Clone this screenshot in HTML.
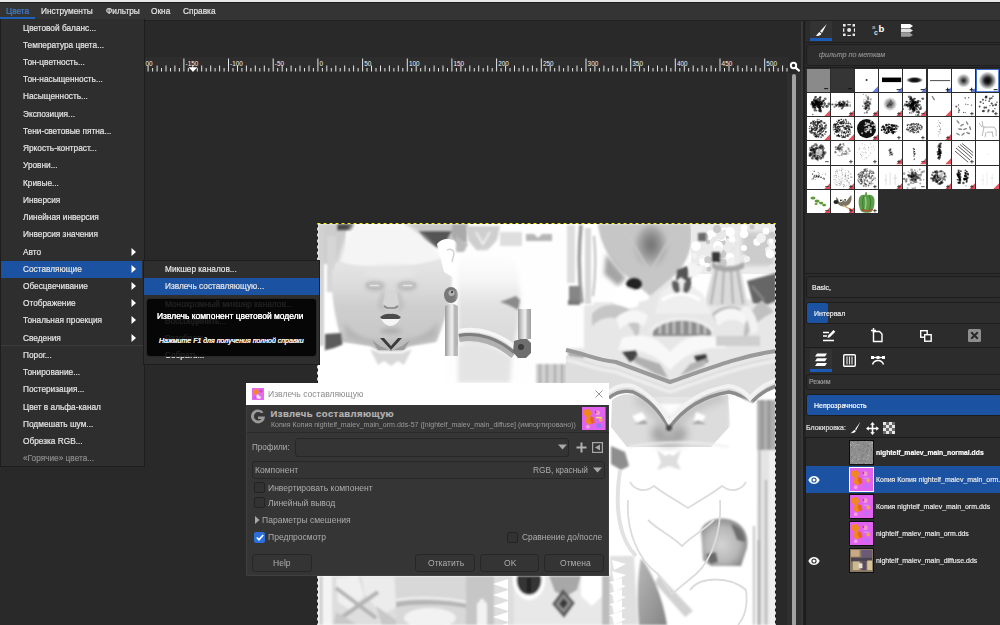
<!DOCTYPE html><html lang="ru"><head><meta charset="utf-8"><title>GIMP</title><style>
*{margin:0;padding:0;box-sizing:border-box}
html,body{width:1000px;height:625px;overflow:hidden;background:#292929}
body{position:relative;font-family:"Liberation Sans",sans-serif;font-size:9px;color:#e4e4e4}
.a{position:absolute}
.t{position:absolute;white-space:nowrap;transform-origin:0 50%;transform:scaleX(.92);line-height:12px;-webkit-text-stroke:.2px currentColor}
</style></head><body>
<div class="a" style="left:0px;top:0px;width:1000px;height:2px;background:#e9e9e9;"></div>
<div class="a" style="left:0px;top:2px;width:1000px;height:18px;background:#343434;"></div>
<div class="a" style="left:0px;top:2px;width:1000px;height:1px;background:#1c1c1c;"></div>
<div class="a" style="left:145px;top:19.5px;width:855px;height:1px;background:#212121;"></div>
<div class="t" style="left:6px;top:4.5px;color:#3f7fd6">Цвета</div>
<div class="a" style="left:0px;top:17px;width:35px;height:2px;background:#2160b8;"></div>
<div class="t" style="left:41px;top:4.5px;">Инструменты</div>
<div class="t" style="left:106px;top:4.5px;">Фильтры</div>
<div class="t" style="left:151px;top:4.5px;">Окна</div>
<div class="t" style="left:183px;top:4.5px;">Справка</div>
<div class="a" style="left:0px;top:20.5px;width:802px;height:605px;background:#292929;"></div>
<div class="a" style="left:145px;top:56.8px;width:643.5px;height:15.7px;background:#2d2d2d;"></div>
<svg class="a" style="left:0;top:55px" width="802" height="20" viewBox="0 55 802 20"><path d="M148.1 65.5V71.5M152.6 68V71.5M157.1 65.5V71.5M161.5 68V71.5M166.0 65.5V71.5M170.5 68V71.5M174.9 65.5V71.5M179.4 68V71.5M183.9 58.5V71.5M188.3 68V71.5M192.8 65.5V71.5M197.3 68V71.5M201.7 65.5V71.5M206.2 68V71.5M210.7 65.5V71.5M215.1 68V71.5M219.6 65.5V71.5M224.1 68V71.5M228.5 58.5V71.5M233.0 68V71.5M237.5 65.5V71.5M241.9 68V71.5M246.4 65.5V71.5M250.9 68V71.5M255.3 65.5V71.5M259.8 68V71.5M264.3 65.5V71.5M268.8 68V71.5M273.2 58.5V71.5M277.7 68V71.5M282.2 65.5V71.5M286.6 68V71.5M291.1 65.5V71.5M295.6 68V71.5M300.0 65.5V71.5M304.5 68V71.5M309.0 65.5V71.5M313.4 68V71.5M317.9 58.5V71.5M322.4 68V71.5M326.8 65.5V71.5M331.3 68V71.5M335.8 65.5V71.5M340.2 68V71.5M344.7 65.5V71.5M349.2 68V71.5M353.6 65.5V71.5M358.1 68V71.5M362.6 58.5V71.5M367.0 68V71.5M371.5 65.5V71.5M376.0 68V71.5M380.5 65.5V71.5M384.9 68V71.5M389.4 65.5V71.5M393.9 68V71.5M398.3 65.5V71.5M402.8 68V71.5M407.3 58.5V71.5M411.7 68V71.5M416.2 65.5V71.5M420.7 68V71.5M425.1 65.5V71.5M429.6 68V71.5M434.1 65.5V71.5M438.5 68V71.5M443.0 65.5V71.5M447.5 68V71.5M451.9 58.5V71.5M456.4 68V71.5M460.9 65.5V71.5M465.3 68V71.5M469.8 65.5V71.5M474.3 68V71.5M478.7 65.5V71.5M483.2 68V71.5M487.7 65.5V71.5M492.2 68V71.5M496.6 58.5V71.5M501.1 68V71.5M505.6 65.5V71.5M510.0 68V71.5M514.5 65.5V71.5M519.0 68V71.5M523.4 65.5V71.5M527.9 68V71.5M532.4 65.5V71.5M536.8 68V71.5M541.3 58.5V71.5M545.8 68V71.5M550.2 65.5V71.5M554.7 68V71.5M559.2 65.5V71.5M563.6 68V71.5M568.1 65.5V71.5M572.6 68V71.5M577.0 65.5V71.5M581.5 68V71.5M586.0 58.5V71.5M590.4 68V71.5M594.9 65.5V71.5M599.4 68V71.5M603.9 65.5V71.5M608.3 68V71.5M612.8 65.5V71.5M617.3 68V71.5M621.7 65.5V71.5M626.2 68V71.5M630.7 58.5V71.5M635.1 68V71.5M639.6 65.5V71.5M644.1 68V71.5M648.5 65.5V71.5M653.0 68V71.5M657.5 65.5V71.5M661.9 68V71.5M666.4 65.5V71.5M670.9 68V71.5M675.3 58.5V71.5M679.8 68V71.5M684.3 65.5V71.5M688.7 68V71.5M693.2 65.5V71.5M697.7 68V71.5M702.1 65.5V71.5M706.6 68V71.5M711.1 65.5V71.5M715.6 68V71.5M720.0 58.5V71.5M724.5 68V71.5M729.0 65.5V71.5M733.4 68V71.5M737.9 65.5V71.5M742.4 68V71.5M746.8 65.5V71.5M751.3 68V71.5M755.8 65.5V71.5M760.2 68V71.5M764.7 58.5V71.5M769.2 68V71.5M773.6 65.5V71.5M778.1 68V71.5M782.6 65.5V71.5M787.0 68V71.5" stroke="#e6e6e6" stroke-width="1" fill="none"/><text transform="translate(145.5 66.3) scale(.8 1)" font-size="8" fill="#f2f2f2" font-family="Liberation Sans, sans-serif">00</text><text transform="translate(185.5 66.3) scale(.8 1)" font-size="8" fill="#f2f2f2" font-family="Liberation Sans, sans-serif">-150</text><text transform="translate(230.1 66.3) scale(.8 1)" font-size="8" fill="#f2f2f2" font-family="Liberation Sans, sans-serif">-100</text><text transform="translate(274.8 66.3) scale(.8 1)" font-size="8" fill="#f2f2f2" font-family="Liberation Sans, sans-serif">-50</text><text transform="translate(319.5 66.3) scale(.8 1)" font-size="8" fill="#f2f2f2" font-family="Liberation Sans, sans-serif">0</text><text transform="translate(364.2 66.3) scale(.8 1)" font-size="8" fill="#f2f2f2" font-family="Liberation Sans, sans-serif">50</text><text transform="translate(408.9 66.3) scale(.8 1)" font-size="8" fill="#f2f2f2" font-family="Liberation Sans, sans-serif">100</text><text transform="translate(453.5 66.3) scale(.8 1)" font-size="8" fill="#f2f2f2" font-family="Liberation Sans, sans-serif">150</text><text transform="translate(498.2 66.3) scale(.8 1)" font-size="8" fill="#f2f2f2" font-family="Liberation Sans, sans-serif">200</text><text transform="translate(542.9 66.3) scale(.8 1)" font-size="8" fill="#f2f2f2" font-family="Liberation Sans, sans-serif">250</text><text transform="translate(587.6 66.3) scale(.8 1)" font-size="8" fill="#f2f2f2" font-family="Liberation Sans, sans-serif">300</text><text transform="translate(632.3 66.3) scale(.8 1)" font-size="8" fill="#f2f2f2" font-family="Liberation Sans, sans-serif">350</text><text transform="translate(676.9 66.3) scale(.8 1)" font-size="8" fill="#f2f2f2" font-family="Liberation Sans, sans-serif">400</text><text transform="translate(721.6 66.3) scale(.8 1)" font-size="8" fill="#f2f2f2" font-family="Liberation Sans, sans-serif">450</text><text transform="translate(766.3 66.3) scale(.8 1)" font-size="8" fill="#f2f2f2" font-family="Liberation Sans, sans-serif">500</text><path d="M188.5 67.3h9l-4.500 4.500z" fill="#fff"/></svg>
<svg class="a" style="left:788px;top:59.500px" width="14" height="14" viewBox="0 0 14 14"><circle cx="5.5" cy="5.5" r="2.700" fill="none" stroke="#fff" stroke-width="1.900"/><path d="M7.800 7.800l3.200 2.800" stroke="#fff" stroke-width="2.200" stroke-linecap="round"/></svg>
<div class="a" style="left:787px;top:73px;width:5px;height:552px;background:#2f2f2f;"></div>
<div class="a" style="left:791.8px;top:73.5px;width:4.2px;height:552px;background:#a2a2a2;border-radius:2px"></div>
<svg class="a" style="left:0;top:0" width="1000" height="625" viewBox="0 0 1000 625">
<defs><filter id="f05" x="-10%" y="-10%" width="120%" height="120%"><feGaussianBlur stdDeviation=".5"/></filter><filter id="f1" x="-10%" y="-10%" width="120%" height="120%"><feGaussianBlur stdDeviation="1"/></filter><filter id="f2" x="-20%" y="-20%" width="140%" height="140%"><feGaussianBlur stdDeviation="2"/></filter><filter id="f4" x="-30%" y="-30%" width="160%" height="160%"><feGaussianBlur stdDeviation="4"/></filter><filter id="f7" x="-40%" y="-40%" width="180%" height="180%"><feGaussianBlur stdDeviation="7"/></filter><clipPath id="cv"><rect x="317.5" y="223.5" width="458.0" height="401.5"/></clipPath><linearGradient id="bar" x1="0" x2="1" y1="0" y2="0"><stop offset="0" stop-color="#9a9a9a"/><stop offset=".35" stop-color="#d8d8d8"/><stop offset=".55" stop-color="#f0f0f0"/><stop offset=".75" stop-color="#b4b4b4"/><stop offset="1" stop-color="#a0a0a0"/></linearGradient><linearGradient id="face" x1="0" x2="0" y1="0" y2="1"><stop offset="0" stop-color="#e6e6e6"/><stop offset=".3" stop-color="#dcdcdc"/><stop offset=".5" stop-color="#cfcfcf"/><stop offset=".85" stop-color="#c8c8c8"/><stop offset="1" stop-color="#b4b4b4"/></linearGradient><radialGradient id="hd" cx=".5" cy=".45" r=".6"><stop offset="0" stop-color="#6e6e6e"/><stop offset=".5" stop-color="#9a9a9a"/><stop offset="1" stop-color="#b8b8b8" stop-opacity="0"/></radialGradient><linearGradient id="bh" x1="0" x2="0" y1="0" y2="1"><stop offset="0" stop-color="#ffffff"/><stop offset=".3" stop-color="#f6f6f6"/><stop offset=".55" stop-color="#e2e2e2"/><stop offset="1" stop-color="#d8d8d8"/></linearGradient><radialGradient id="gb" cx=".45" cy=".55" r=".65"><stop offset="0" stop-color="#d4d4d4"/><stop offset=".55" stop-color="#b8b8b8"/><stop offset="1" stop-color="#7a7a7a"/></radialGradient><linearGradient id="wedge" x1="0" x2="1" y1="0" y2="1"><stop offset="0" stop-color="#b8b8b8"/><stop offset="1" stop-color="#858585"/></linearGradient></defs>
<g clip-path="url(#cv)">
<rect x="317.5" y="223.5" width="458.0" height="401.5" fill="#fefefe"/>
<g filter="url(#f1)">
<rect x="318" y="224" width="28" height="40" fill="#cdcdcd"/>
<rect x="319" y="224" width="5" height="122" fill="#d2d2d2"/>
<rect x="327" y="236" width="9" height="56" fill="#d6d6d6"/>
<rect x="325" y="296" width="8" height="40" fill="#ffffff"/>
<rect x="337" y="224" width="17" height="6.500" fill="#484848"/>
<path d="M404 224h64v10l-14 4-8 10h-10l-14-10-12-8z" fill="#c8c8c8"/>
<path d="M418 231h34l-5 9-10 8-13-8z" fill="#555"/>
<path d="M452 224h15v18l-8 4-7-8z" fill="#aaaaaa"/>
</g>
<path d="M353 224h53c14 8 26 20 32 28l4 10c-30 10-80 10-104 2c4-14 8-28 15-40z" fill="#f5f5f5" filter="url(#f2)"/>
<path d="M338 261c24 8 74 8 104-3l10 12c1 20-4 40-11 60l-5 12-26 4-8 5h-24l-8-5-28-4c-6-20-12-50-10-70z" fill="url(#face)" filter="url(#f1)"/>
<g filter="url(#f2)"><ellipse cx="375" cy="286" rx="10" ry="4.500" fill="#b4b4b4"/><ellipse cx="407" cy="286" rx="10" ry="4.500" fill="#b4b4b4"/><path d="M384 292l-4 14 4 4M398 292l4 14-4 4" stroke="#b8b8b8" stroke-width="3" fill="none"/><ellipse cx="391" cy="331" rx="11" ry="3" fill="#adadad"/><path d="M344 322c10 14 26 20 46 20s36-6 48-20l-2 16-26 6h-40l-24-6z" fill="#b6b6b6"/><ellipse cx="391" cy="272" rx="26" ry="7" fill="#e4e4e4"/></g>
<g filter="url(#f05)">
<path d="M366 283q8-3 16 0l1 4q-9 2-17 0zM400 283q8-3 16 0v4q-9 2-17 0z" fill="#c2c2c2"/>
<path d="M370 285.500h9M403 285.500h9" stroke="#e4e4e4" stroke-width="1.300"/>
<path d="M386 290l-3 14 8 4 8-4-3-14" fill="#d6d6d6"/><path d="M384 306l3 2h8l3-2" stroke="#858585" stroke-width="1.600" fill="none"/>
<path d="M380 317q5-4 10.500-3q5.500-1 10.500 3l-2 2h-17z" fill="#4c4c4c"/><path d="M381 319h19q-4 7-9.500 7t-9.500-7z" fill="#f6f6f6"/>
<path d="M380 338l11 12 11-12-4 0-7 8-7-8z" fill="#3a3a3a"/><path d="M372 340l8 6 11 5 11-5 8-6-6 10h-26z" fill="#9a9a9a"/>
</g>
<path d="M325 334l16-1 2 14-10 4-8 2z" fill="#5c5c5c" filter="url(#f1)"/>
<path d="M318 352l16-4 10-4 28 4 8 5h22l8-5 26-3 8-3 0 40h-126z" fill="#ffffff" filter="url(#f1)"/>
<path d="M370 349l10 4h22l10-4-8 16-6-4-7 5-7-5-6 4z" fill="#d9d9d9" filter="url(#f1)"/>
<g filter="url(#f05)"><path d="M437 244c6-8 18-6 22 2l3 22-8 10-10-6z" fill="#ffffff"/><path d="M447 250c4-2 7 0 7 4l-2 8" stroke="#d4d4d4" stroke-width="1.500" fill="none"/><ellipse cx="451" cy="295" rx="7" ry="8" fill="#787878"/><circle cx="451.500" cy="293" r="3" fill="#b4b4b4"/><circle cx="452" cy="292" r="1.200" fill="#444"/><path d="M445 306l6.500-3 6.500 3v50h-13z" fill="url(#bar)"/></g>
<g filter="url(#f1)">
<path d="M466 226h34l-3 14-10 11h-10l-9-11z" fill="#cfcfcf"/><path d="M476 232l7 12 7-12" stroke="#efefef" stroke-width="2" fill="none"/>
<path d="M456 236l12 8-4 8h-8z" fill="#bbb"/>
<rect x="500" y="232" width="22" height="14" fill="#dedede"/>
<path d="M526 234h8l4 4 4-4h10v7h-26z" fill="#b6b6b6"/>
</g>
<path d="M458 262c10-14 44-16 56 0c8 14 8 50 2 76l-4 10-54-6z" fill="url(#bh)" filter="url(#f2)"/>
<path d="M500 302l16-6 4 4-2 10c-6-4-12-6-18-8z" fill="#8a8a8a" filter="url(#f1)"/>
<path d="M458 345c18-6 38 0 54 12l-2 26h-52z" fill="#e4e4e4" filter="url(#f2)"/>
<g filter="url(#f05)"><path d="M459 331c20-4 40 3 56 16" stroke="#f6f6f6" stroke-width="4" fill="none"/><path d="M459 338c20-4 40 4 55 17" stroke="#b0b0b0" stroke-width="8" fill="none"/><path d="M459 335.500c20-4 40 4 55 17" stroke="#7e7e7e" stroke-width="3" fill="none"/>
<rect x="518" y="309" width="13" height="30" fill="url(#bar)"/><path d="M514 341l6-2h7l4 4v10l-5 5h-8l-5-6z" fill="#6e6e6e"/><circle cx="521" cy="347" r="3" fill="#3c3c3c"/></g>
<g filter="url(#f1)">
<rect x="567" y="225" width="8" height="58" fill="#dedede"/><path d="M581 225q-4 40 1 78" stroke="#9a9a9a" stroke-width="3.500" fill="none"/><rect x="585" y="228" width="6" height="76" fill="#d8d8d8"/><path d="M594 236q3 30-1 60" stroke="#bdbdbd" stroke-width="2" fill="none"/>
<path d="M569 286h11v18l-11-2z" fill="#868686"/>
<path d="M568 348h48v36h-48z" fill="#e6e6e6"/><path d="M568 352l48 6v4l-48-6z" fill="#aaa"/>
<path d="M594 302h24v46h-24z" fill="#ebebeb"/>
<path d="M536 364h32v20h-32z" fill="#d0d0d0"/><path d="M540 364v20M547 364v20M555 364v20M562 364v20" stroke="#a8a8a8" stroke-width="2"/>
<path d="M568 300h12v5h-12z" fill="#7a7a7a"/>
</g>
<path d="M584 306l14-2 20 2 30-6 4-10 18-14 20 14 6 12 30 4 20-6 30-6v110h-192z" fill="#e7e7e7" filter="url(#f1)"/>
<path d="M598 224h93c3 20-3 38-15 50l-26 22-28-24c-12-12-22-28-24-48z" fill="#c6c6c6" filter="url(#f1)"/>
<ellipse cx="651" cy="247" rx="17" ry="22" fill="url(#hd)" filter="url(#f2)"/>
<path d="M650 228v20" stroke="#666" stroke-width="3" filter="url(#f2)"/>
<path d="M606 254l20 24-8 8-14-12z" fill="#a4a4a4" filter="url(#f2)"/>
<path d="M626 232l24 40 24-40" stroke="#c8c8c8" stroke-width="2" fill="none" filter="url(#f1)"/>
<g filter="url(#f1)"><ellipse cx="634" cy="284" rx="8" ry="6" fill="#242424"/><path d="M677 270l10-4 5 8-3 14-8 2-5-10z" fill="#555"/><path d="M614 290c8-6 20-2 26 4l-2 12c-8 4-18 2-24-2z" fill="#ffffff"/></g>
<rect x="691" y="224" width="86" height="50" fill="#ebebeb"/><rect x="742" y="232" width="32" height="34" fill="#cccccc" filter="url(#f2)"/>
<g filter="url(#f05)"><circle cx="744" cy="259" r="4.4" fill="#e8e8e8"/><circle cx="696" cy="246" r="4.8" fill="#ffffff"/><circle cx="766" cy="231" r="3.4" fill="#ffffff"/><circle cx="724" cy="230" r="2.7" fill="#ffffff"/><circle cx="727" cy="234" r="4.6" fill="#c8c8c8"/><circle cx="707" cy="261" r="2.4" fill="#e8e8e8"/><circle cx="730" cy="232" r="4.9" fill="#ffffff"/><circle cx="711" cy="235" r="4.9" fill="#ffffff"/><circle cx="717" cy="268" r="3.6" fill="#ffffff"/><circle cx="709" cy="269" r="2.6" fill="#c8c8c8"/><circle cx="718" cy="242" r="2.5" fill="#ffffff"/><circle cx="715" cy="241" r="4.5" fill="#e8e8e8"/><circle cx="694" cy="256" r="3.0" fill="#f2f2f2"/><circle cx="722" cy="239" r="4.1" fill="#ffffff"/><circle cx="732" cy="257" r="2.2" fill="#ffffff"/><circle cx="770" cy="242" r="3.2" fill="#e8e8e8"/><circle cx="757" cy="242" r="3.7" fill="#ffffff"/><circle cx="730" cy="257" r="3.9" fill="#ffffff"/><circle cx="704" cy="237" r="4.5" fill="#c8c8c8"/><circle cx="722" cy="242" r="3.6" fill="#c8c8c8"/><circle cx="703" cy="259" r="4.4" fill="#f2f2f2"/><circle cx="697" cy="268" r="2.3" fill="#f2f2f2"/><circle cx="735" cy="242" r="2.4" fill="#f2f2f2"/><circle cx="768" cy="250" r="2.9" fill="#f2f2f2"/><circle cx="718" cy="261" r="3.9" fill="#f2f2f2"/><circle cx="774" cy="233" r="2.1" fill="#e8e8e8"/><circle cx="737" cy="244" r="2.7" fill="#e8e8e8"/><circle cx="722" cy="237" r="4.0" fill="#ffffff"/><circle cx="698" cy="266" r="2.1" fill="#c8c8c8"/><circle cx="721" cy="235" r="4.9" fill="#e8e8e8"/><circle cx="770" cy="254" r="4.4" fill="#ffffff"/><circle cx="708" cy="242" r="2.2" fill="#c8c8c8"/><circle cx="718" cy="246" r="5.0" fill="#ffffff"/><circle cx="772" cy="246" r="3.5" fill="#f2f2f2"/><circle cx="732" cy="239" r="3.2" fill="#ffffff"/><circle cx="703" cy="262" r="3.6" fill="#ffffff"/><circle cx="744" cy="248" r="3.0" fill="#ffffff"/><circle cx="733" cy="249" r="3.6" fill="#e8e8e8"/><circle cx="723" cy="261" r="4.3" fill="#e8e8e8"/><circle cx="747" cy="259" r="3.1" fill="#f2f2f2"/><circle cx="761" cy="238" r="4.9" fill="#f2f2f2"/><circle cx="771" cy="241" r="2.5" fill="#ffffff"/><circle cx="732" cy="260" r="3.0" fill="#f2f2f2"/><circle cx="731" cy="262" r="3.9" fill="#f2f2f2"/><circle cx="722" cy="254" r="4.2" fill="#c8c8c8"/><circle cx="722" cy="263" r="4.6" fill="#c8c8c8"/><circle cx="772" cy="268" r="3.6" fill="#e8e8e8"/><circle cx="772" cy="235" r="3.1" fill="#c8c8c8"/><circle cx="717" cy="229" r="4.0" fill="#c8c8c8"/><circle cx="708" cy="260" r="3.7" fill="#c8c8c8"/><circle cx="718" cy="250" r="4.6" fill="#f2f2f2"/><circle cx="752" cy="227" r="2.5" fill="#c8c8c8"/><circle cx="744" cy="234" r="4.3" fill="#ffffff"/><circle cx="744" cy="228" r="3.4" fill="#ffffff"/><circle cx="707" cy="265" r="2.3" fill="#ffffff"/></g>
<g filter="url(#f1)"><rect x="712" y="252" width="8" height="10" fill="#383838"/><rect x="698" y="233" width="8" height="8" fill="#6a6a6a"/>
<path d="M714 266h26l8 40h-44z" fill="#dadada"/><path d="M717 268l-6 36M724 268l-2 36M731 268l2 36M737 268l6 36" stroke="#acacac" stroke-width="2"/>
<path d="M712 262c10 6 22 6 32 0v6c-10 5-22 5-32 0z" fill="#a6a6a6"/>
<path d="M747 281l29-8v28l-10 4-13-2z" fill="#666666"/><path d="M752 286l12 14" stroke="#888" stroke-width="2"/>
<path d="M688 262l16 4-6 10-10 2z" fill="#f4f4f4"/>
</g>
<g filter="url(#f1)">
<path d="M660 294l21-17 22 17 8 20h-56z" fill="#efefef"/><path d="M672 282q4-3 7 1l1 8-3 3q-6-4-5-12zM691 282q-4-3-7 1l-1 8 3 3q6-4 5-12z" fill="#5e5e5e"/><path d="M662 300q19-12 38 0" stroke="#ffffff" stroke-width="3" fill="none"/>
<path d="M592 314c10-12 28-12 40-2c8 8 10 18 4 28c-2-12-10-20-20-22c-10-2-18 2-24 8z" fill="#c6c6c6"/><path d="M762 300c-12 10-20 24-18 42c6-14 16-24 30-30z" fill="#c0c0c0"/><path d="M712 314c12-12 32-10 40 6c-10-8-24-8-36 2z" fill="#b8b8b8"/><path d="M616 318c10-10 24-10 32-2l-4 10c-8-6-18-4-24 4z" fill="#f6f6f6"/><path d="M714 316c10-10 24-10 34 0l-4 8c-8-6-18-6-26 2z" fill="#f6f6f6"/>
<path d="M653 330c10-14 48-14 58 0l0 6h-58z" fill="#8c8c8c"/><path d="M660 322v12M667 320v14M674 319v15M682 319v15M690 320v14M698 321v13M705 324v10" stroke="#c4c4c4" stroke-width="2.500"/>
<path d="M651 331c12-16 50-16 62 0" stroke="#f0f0f0" stroke-width="3" fill="none"/>
<path d="M622 338c30-8 40 6 48 14c8-8 20-22 50-14l6 10c-20-2-40 4-56 22c-14-16-30-22-52-20z" fill="#f8f8f8"/>
<path d="M622 352l14-2 2 8-8 4z" fill="#444"/><path d="M694 356l12-2 2 8-10 3z" fill="#3a3a3a"/>
<path d="M636 356l24 8 8 14-12-4-22-12z" fill="#b0b0b0"/><path d="M680 376l10-12 18-6-4 8z" fill="#b4b4b4"/>
<path d="M716 336h44v10h-44z" fill="#cfcfcf"/><path d="M746 306c8 4 12 14 12 26l-8 2c0-10-4-18-10-24z" fill="#f2f2f2"/>
</g>
<path d="M566 350c20 4 30 10 50 12l54 20c40-14 70-26 106-31" stroke="#9a9a9a" stroke-width="4" fill="none" filter="url(#f05)"/>
<path d="M566 356c20 4 30 10 50 12l54 20c40-14 70-26 106-31v40h-210z" fill="#dedede" filter="url(#f05)"/>
<path d="M566 360c20 4 30 10 50 12l54 20c40-14 70-26 106-31" stroke="#f0f0f0" stroke-width="3" fill="none" filter="url(#f1)"/>
<g filter="url(#f05)">
<path d="M609 399q11-9 24-6q22 10 36 36q22-30 60-36q13 2 21 12q10-12 26-18v240h-167z" fill="#ffffff"/>
<path d="M612 400q10-8 22-5q22 10 35 35q22-29 59-35l3 30-20 22h-84l-16-20z" fill="#dcdcdc"/>
</g>
<ellipse cx="669" cy="434" rx="18" ry="11" fill="#a0a0a0" filter="url(#f4)"/><path d="M636 398q20 10 33 34q20-28 56-36" stroke="#c0c0c0" stroke-width="9" fill="none" filter="url(#f4)"/>
<path d="M609 398q11-9 24-6q22 10 36 36q22-30 60-36q13 2 21 12q10-12 26-18" stroke="#8c8c8c" stroke-width="3.500" fill="none" filter="url(#f05)"/>
<path d="M609 392q11-9 24-6q22 10 36 36q22-30 60-36q13 2 21 12q10-12 26-18" stroke="#f2f2f2" stroke-width="4" fill="none" filter="url(#f05)"/>
<g filter="url(#f1)">
<circle cx="669" cy="428" r="3" fill="#4a4a4a"/>
<path d="M632 416l10-4 4 6-8 6z" fill="#ffffff"/><path d="M696 412l10 4-6 8-6-4z" fill="#ffffff"/><path d="M634 424l10-4 4 4z" fill="#a0a0a0"/><path d="M692 424l6-4 8 4z" fill="#a0a0a0"/>
<path d="M729 400c10-4 22 0 28 6v90h-26z" fill="#ffffff"/>
<rect x="757" y="400" width="19" height="50" fill="#adadad"/><path d="M762 400v50M769 400v50" stroke="#8e8e8e" stroke-width="2"/>
<rect x="757" y="450" width="19" height="175" fill="#e4e4e4"/><path d="M759.500 450v175M766 480v145" stroke="#a2a2a2" stroke-width="1.500"/><rect x="769" y="450" width="6" height="175" fill="#f0f0f0"/>
<path d="M611 446l14 6 4 14-8 4-10-6z" fill="#8e8e8e"/>
<path d="M657 450l8 6 4-2 4 2 8-6-4 12 4 8-12-4-12 4 4-8z" fill="#dedede"/>
<path d="M629 447c30-6 70-6 100 0" stroke="#f0f0f0" stroke-width="2" fill="none"/>
</g>
<g filter="url(#f1)">
<path d="M610 556l24 0 4 69h-28z" fill="#e0e0e0"/>
<path d="M701 530c4-10 18-14 30-10c12 4 18 14 16 28l-6 18h-30l-8-6z" fill="url(#gb)"/>
<path d="M731 524c8 2 14 8 14 18l-8-2z" fill="#6e6e6e"/><path d="M706 554l10-2 2 10-8 2z" fill="#6a6a6a"/>
<path d="M641 558c10 12 22 40 26 67h-28c-2-24-2-46 2-67z" fill="url(#wedge)"/>
<path d="M659 575l34 36-8 6-30-34z" fill="#d2d2d2"/>
<path d="M754 526v99M758.500 540v85" stroke="#9c9c9c" stroke-width="1.200"/>
</g>
<g filter="url(#f05)" fill="none" stroke="#dcdcdc" stroke-width="1.800">
<path d="M630 482c6 10 16 10 24 4c10 8 22 14 34 22c12-8 24-14 34-22c8 6 18 6 24-4"/>
<path d="M628 500c-2 30 10 60 30 74l14 20 24-20c16-14 26-44 24-74"/>
<path d="M648 520c10 10 24 16 34 26c10-10 22-16 32-26"/>
<path d="M690 590c10-14 40-14 56 0c2 16-2 28-8 35"/>
<path d="M620 470c-6 40 0 70 16 86" stroke="#e2e2e2" stroke-width="4"/>
</g>
<g fill="#ffffff" filter="url(#f05)"><path d="M612 560l14 4-12 6z"/><path d="M612 571l14 4-12 6z"/><path d="M612 582l14 4-12 6z"/><path d="M612 593l14 4-12 6z"/><path d="M612 604l14 4-12 6z"/><path d="M612 615l14 4-12 6z"/></g>
<g filter="url(#f1)">
<rect x="318" y="576" width="14" height="49" fill="#f4f4f4"/><rect x="319.500" y="576" width="3" height="49" fill="#cacaca"/>
<rect x="332" y="576" width="64" height="49" fill="#dedede"/>
<path d="M336 578l22-2 6 20-14 14-12-8z" fill="#f0f0f0"/><path d="M362 577h32l2 30-14 8-18-22z" fill="#ececec"/>
<path d="M336 588l40 30M378 592l-40 28" stroke="#b4b4b4" stroke-width="4"/>
<path d="M336 612l20 12h-22zM376 606l20 14v5h-14z" fill="#c8c8c8"/>
<rect x="396" y="576" width="80" height="49" fill="#d8d8d8"/><ellipse cx="430" cy="618" rx="26" ry="10" fill="#f2f2f2"/>
<path d="M396 602c26-4 54-2 80 4v4c-26-6-54-7-80-3z" fill="#b4b4b4"/><path d="M396 600c26-4 54-2 80 4" stroke="#f6f6f6" stroke-width="1.500" fill="none"/>
<rect x="466" y="576" width="28" height="49" fill="#c6c6c6"/><path d="M477 604l5-6 5 6v21h-10z" fill="#f2f2f2"/>
<rect x="494" y="576" width="22" height="49" fill="#dedede"/>
<rect x="514" y="576" width="96" height="49" fill="#e8e8e8"/>
<path d="M513 576h32v8c-2 10-10 16-16 16s-14-6-16-16z" fill="#ffffff"/>
<path d="M517 576h24c2 10-4 19-12 19s-14-9-12-19z" fill="#363636"/><path d="M529 578v14" stroke="#161616" stroke-width="3"/>
<path d="M549 576h32l-4 14-10 6-12-4z" fill="#a8a8a8"/>
<path d="M563 589l12 14-11 15-12-14z" fill="#5a5a5a"/><path d="M563.500 594l8 9-8 10-8-9z" fill="#909090"/><path d="M563.500 598l4.500 5-4.500 6-4.500-5z" fill="#3a3a3a"/>
<path d="M581 576h21v20l-10 10-11-10z" fill="#ffffff"/>
<rect x="602" y="576" width="8" height="49" fill="#bdbdbd"/>
</g>
<g fill="#ffffff" filter="url(#f05)"><path d="M508 579l-15 5 15 5z"/><path d="M508 590l-15 5 15 5z"/><path d="M508 601l-15 5 15 5z"/><path d="M508 612l-15 5 15 5z"/><path d="M508 623l-15 5 15 5z"/><path d="M622 578l-13 4.500 13 5z"/><path d="M622 589l-13 4.500 13 5z"/><path d="M622 600l-13 4.500 13 5z"/><path d="M622 611l-13 4.500 13 5z"/><path d="M622 622l-13 4.500 13 5z"/></g>
</g>
<rect x="317.5" y="223.5" width="458.0" height="406.5" fill="none" stroke="#1a1a1a" stroke-width="1"/>
<rect x="317.5" y="223.5" width="458.0" height="406.5" fill="none" stroke="#f2ee1e" stroke-width="1" stroke-dasharray="3 3"/>
</svg>
<div class="a" style="left:0;top:19px;width:145px;height:448px;background:#2e2e2e;border:1px solid #1d1d1d;border-top:none"></div>
<div class="t" style="left:23px;top:21.5px;color:#e6e6e6">Цветовой баланс...</div>
<div class="t" style="left:23px;top:38.7px;color:#e6e6e6">Температура цвета...</div>
<div class="t" style="left:23px;top:56.0px;color:#e6e6e6">Тон-цветность...</div>
<div class="t" style="left:23px;top:73.2px;color:#e6e6e6">Тон-насыщенность...</div>
<div class="t" style="left:23px;top:90.4px;color:#e6e6e6">Насыщенность...</div>
<div class="t" style="left:23px;top:107.7px;color:#e6e6e6">Экспозиция...</div>
<div class="t" style="left:23px;top:124.9px;color:#e6e6e6">Тени-световые пятна...</div>
<div class="t" style="left:23px;top:142.1px;color:#e6e6e6">Яркость-контраст...</div>
<div class="t" style="left:23px;top:159.3px;color:#e6e6e6">Уровни...</div>
<div class="t" style="left:23px;top:176.6px;color:#e6e6e6">Кривые...</div>
<div class="t" style="left:23px;top:193.8px;color:#e6e6e6">Инверсия</div>
<div class="t" style="left:23px;top:211.0px;color:#e6e6e6">Линейная инверсия</div>
<div class="t" style="left:23px;top:228.3px;color:#e6e6e6">Инверсия значения</div>
<div class="t" style="left:23px;top:245.5px;color:#e6e6e6">Авто</div>
<svg class="a" style="left:131px;top:247.5px" width="6" height="8" viewBox="0 0 6 8"><path d="M.5 0L5 4 .5 8z" fill="#fff"/></svg>
<div class="a" style="left:1px;top:261.3px;width:141px;height:17.2px;background:#1b52a2"></div>
<div class="t" style="left:23px;top:262.7px;color:#e6e6e6">Составляющие</div>
<svg class="a" style="left:131px;top:264.7px" width="6" height="8" viewBox="0 0 6 8"><path d="M.5 0L5 4 .5 8z" fill="#fff"/></svg>
<div class="t" style="left:23px;top:279.9px;color:#e6e6e6">Обесцвечивание</div>
<svg class="a" style="left:131px;top:281.9px" width="6" height="8" viewBox="0 0 6 8"><path d="M.5 0L5 4 .5 8z" fill="#fff"/></svg>
<div class="t" style="left:23px;top:297.2px;color:#e6e6e6">Отображение</div>
<svg class="a" style="left:131px;top:299.2px" width="6" height="8" viewBox="0 0 6 8"><path d="M.5 0L5 4 .5 8z" fill="#fff"/></svg>
<div class="t" style="left:23px;top:314.4px;color:#e6e6e6">Тональная проекция</div>
<svg class="a" style="left:131px;top:316.4px" width="6" height="8" viewBox="0 0 6 8"><path d="M.5 0L5 4 .5 8z" fill="#fff"/></svg>
<div class="t" style="left:23px;top:331.6px;color:#e6e6e6">Сведения</div>
<svg class="a" style="left:131px;top:333.6px" width="6" height="8" viewBox="0 0 6 8"><path d="M.5 0L5 4 .5 8z" fill="#fff"/></svg>
<div class="t" style="left:23px;top:348.9px;color:#e6e6e6">Порог...</div>
<div class="t" style="left:23px;top:366.1px;color:#e6e6e6">Тонирование...</div>
<div class="t" style="left:23px;top:383.3px;color:#e6e6e6">Постеризация...</div>
<div class="t" style="left:23px;top:400.6px;color:#e6e6e6">Цвет в альфа-канал</div>
<div class="t" style="left:23px;top:417.8px;color:#e6e6e6">Подмешать шум...</div>
<div class="t" style="left:23px;top:435.0px;color:#e6e6e6">Обрезка RGB...</div>
<div class="t" style="left:23px;top:452.2px;color:#8c8c8c">«Горячие» цвета...</div>
<div class="a" style="left:1px;top:345.300px;width:143px;height:1px;background:#3b3b3b"></div>
<div class="a" style="left:143px;top:260px;width:176.5px;height:104.500px;background:#2e2e2e;border:1px solid #1d1d1d"></div>
<div class="t" style="left:165px;top:263.2px;color:#e6e6e6">Микшер каналов...</div>
<div class="a" style="left:143.500px;top:278.2px;width:175.500px;height:17.2px;background:#1b52a2"></div>
<div class="t" style="left:165px;top:280.4px;color:#e6e6e6">Извлечь составляющую...</div>
<div class="t" style="left:165px;top:297.7px;color:#e6e6e6">Монохромный микшер каналов...</div>
<div class="t" style="left:165px;top:314.9px;color:#e6e6e6">Воссоединить...</div>
<div class="t" style="left:165px;top:332.1px;color:#e6e6e6">Разобрать...</div>
<div class="t" style="left:165px;top:349.4px;color:#e6e6e6">Собрать...</div>
<div class="a" style="left:145.500px;top:297.500px;width:171px;height:59px;background:rgba(0,0,0,.86);border-radius:4px;border:1px solid rgba(60,60,60,.6)"></div>
<div class="t" style="left:157px;top:310px;color:#fff;font-size:9px;transform:scaleX(.94);text-shadow:0 0 .3px #fff">Извлечь компонент цветовой модели</div>
<div class="t" style="left:159px;top:334.5px;color:#f0f0f0;font-size:7px;font-style:italic;text-shadow:0 0 .4px #fff;transform:scaleX(1)">Нажмите F1 для получения полной справки</div>
<div class="a" style="left:796px;top:73px;width:5px;height:552px;background:#303030;"></div>
<div class="a" style="left:801px;top:20.5px;width:2.2px;height:605px;background:#383838;"></div>
<div class="a" style="left:803.2px;top:20.5px;width:2.3px;height:605px;background:#1f1f1f;"></div>
<div class="a" style="left:805.5px;top:20.5px;width:195px;height:605px;background:#2c2c2c;"></div>
<svg width="0" height="0" style="position:absolute"><defs><radialGradient id="rg1"><stop offset="0" stop-color="#000"/><stop offset=".55" stop-color="#000" stop-opacity=".85"/><stop offset="1" stop-color="#000" stop-opacity="0"/></radialGradient><radialGradient id="rg2"><stop offset="0" stop-color="#000" stop-opacity=".9"/><stop offset=".25" stop-color="#000" stop-opacity=".7"/><stop offset="1" stop-color="#000" stop-opacity="0"/></radialGradient><radialGradient id="rg3"><stop offset="0" stop-color="#000"/><stop offset=".35" stop-color="#000" stop-opacity=".85"/><stop offset="1" stop-color="#000" stop-opacity="0"/></radialGradient><radialGradient id="rg4"><stop offset="0" stop-color="#000" stop-opacity=".7"/><stop offset=".4" stop-color="#000" stop-opacity=".45"/><stop offset="1" stop-color="#000" stop-opacity="0"/></radialGradient><filter id="b1" x="-20%" y="-20%" width="140%" height="140%"><feGaussianBlur stdDeviation=".6"/></filter></defs></svg>
<div class="a" style="left:809.5px;top:20.5px;width:22.5px;height:18px;background:#333333;"></div>
<div class="a" style="left:809.5px;top:38px;width:22.5px;height:2.7px;background:#1c5bb5;"></div>
<div class="a" style="left:803.5px;top:41.5px;width:197px;height:1px;background:#1e1e1e;"></div>
<svg class="a" style="left:813px;top:22px" width="16" height="16" viewBox="0 0 16 16"><path d="M13.800 2L7 9.300l2 1.800z" fill="#fff"/><path d="M6.300 10l2.100 1.800c-.5 1.600-2.800 2.400-5.800 2 1.800-.700 2.200-2.600 3.700-3.800z" fill="#fff"/></svg>
<svg class="a" style="left:843.300px;top:24px" width="12.200" height="12.200" viewBox="0 0 14 14"><g fill="#e8e8e8"><rect x="0" y="0" width="3" height="3"/><rect x="5" y="0" width="4" height="1.5"/><rect x="11" y="0" width="3" height="3"/><rect x="0" y="5" width="1.5" height="4"/><rect x="12.5" y="5" width="1.500" height="4"/><rect x="0" y="11" width="3" height="3"/><rect x="5" y="12.5" width="4" height="1.5"/><rect x="11" y="11" width="3" height="3"/><circle cx="7" cy="7" r="2.3"/></g></svg>
<div class="a" style="left:872px;top:23.5px;font-size:6px;line-height:6px;color:#aaa;font-weight:bold">a</div>
<div class="a" style="left:874px;top:28.500px;font-size:7px;line-height:8px;color:#ddd;font-weight:bold">c</div>
<div class="a" style="left:878.500px;top:24px;font-size:9.500px;line-height:10px;color:#fff;font-weight:bold">b</div>
<svg class="a" style="left:900px;top:23px" width="14" height="14" viewBox="0 0 14 14"><path d="M1 1h9l3 2-3 2H1z" fill="#fff"/><path d="M1 5.500h9l3 2-3 2H1z" fill="#e0e0e0"/><path d="M1 10h9l3 2-3 1.800H1z" fill="#9a9a9a"/></svg>
<div class="a" style="left:805.5px;top:43.7px;width:196px;height:22.3px;background:#2d2d2d;border:1px solid #1d1d1d;border-radius:3px"></div>
<div class="t" style="left:819px;top:48.5px;font-size:8px;transform:scaleX(.87);font-style:italic;color:#8d8d8d;transform:scaleX(.89)">фильтр по меткам</div>
<svg class="a" style="left:806.5px;top:68.8px;background:#fff" width="23.2" height="23.2" viewBox="0 0 23 23"><rect width="23" height="23" fill="#8a8a8a"/><path d="M17 19.5h4" stroke="#111" stroke-width="1"/></svg>
<svg class="a" style="left:830.7px;top:68.8px;background:#fff" width="23.2" height="23.2" viewBox="0 0 23 23"><rect width="23" height="23" fill="#353535"/><path d="M17 19.5h4" stroke="#111" stroke-width="1"/></svg>
<svg class="a" style="left:854.9px;top:68.8px;background:#fff" width="23.2" height="23.2" viewBox="0 0 23 23"><circle cx="11.5" cy="11" r="1" fill="#333"/><path d="M23 17v6h-6z" fill="#5f7fe8"/></svg>
<svg class="a" style="left:879.1px;top:68.8px;background:#fff" width="23.2" height="23.2" viewBox="0 0 23 23"><rect x="3" y="8.5" width="19" height="4.5" fill="#000"/><path d="M23 18v5h-5z" fill="#5f7fe8"/><path d="M17.5 20.5h4" stroke="#111"/></svg>
<svg class="a" style="left:903.3px;top:68.8px;background:#fff" width="23.2" height="23.2" viewBox="0 0 23 23"><ellipse cx="11.5" cy="11" rx="8.5" ry="3.2" fill="url(#rg1)"/><path d="M23 18v5h-5z" fill="#5f7fe8"/><path d="M17.5 20.5h4" stroke="#111"/></svg>
<svg class="a" style="left:927.5px;top:68.8px;background:#fff" width="23.2" height="23.2" viewBox="0 0 23 23"><path d="M2 11.5h20" stroke="#222" stroke-width=".8"/><path d="M23 18v5h-5z" fill="#5f7fe8"/><path d="M17.5 20.5h4M19.5 18.5v4" stroke="#111"/></svg>
<svg class="a" style="left:951.7px;top:68.8px;background:#fff" width="23.2" height="23.2" viewBox="0 0 23 23"><circle cx="11.5" cy="11.5" r="7" fill="url(#rg2)"/><path d="M23 19v4h-4z" fill="#5f7fe8"/><path d="M17.5 20.5h4M19.5 18.5v4" stroke="#111"/></svg>
<svg class="a" style="left:975.9px;top:68.8px;background:#fff" width="23.2" height="23.2" viewBox="0 0 23 23"><circle cx="11.5" cy="11.5" r="9" fill="url(#rg3)"/><path d="M17.5 20.5h4" stroke="#111"/><rect x=".5" y=".5" width="22" height="22" fill="none" stroke="#3d6fd0"/></svg>
<svg class="a" style="left:806.5px;top:93.0px;background:#fff" width="23.2" height="23.2" viewBox="0 0 23 23"><g filter="url(#b1)"><g fill="#000" fill-opacity="0.59"><circle cx="7.0" cy="12.1" r="1.5"/><circle cx="7.2" cy="11.8" r="1.2"/><circle cx="12.6" cy="14.3" r="1.2"/><circle cx="11.4" cy="9.7" r="0.9"/><circle cx="16.0" cy="13.9" r="1.3"/><circle cx="19.9" cy="13.2" r="1.6"/><circle cx="8.4" cy="7.6" r="0.8"/><circle cx="15.0" cy="11.3" r="0.7"/><circle cx="11.9" cy="13.1" r="0.6"/><circle cx="7.6" cy="11.7" r="1.4"/><circle cx="6.4" cy="10.5" r="1.1"/><circle cx="9.1" cy="8.2" r="0.9"/><circle cx="21.7" cy="10.9" r="1.4"/><circle cx="10.3" cy="8.5" r="0.8"/><circle cx="10.7" cy="12.1" r="1.4"/><circle cx="5.9" cy="14.4" r="1.0"/><circle cx="17.1" cy="9.5" r="0.6"/><circle cx="12.8" cy="17.4" r="1.1"/><circle cx="14.2" cy="10.6" r="0.7"/><circle cx="7.1" cy="7.2" r="0.9"/><circle cx="13.5" cy="12.4" r="1.6"/><circle cx="11.1" cy="9.5" r="0.8"/><circle cx="11.9" cy="11.6" r="1.4"/><circle cx="12.8" cy="14.5" r="1.0"/><circle cx="12.9" cy="15.5" r="0.7"/><circle cx="10.0" cy="9.8" r="1.0"/><circle cx="11.6" cy="13.3" r="1.6"/><circle cx="11.9" cy="8.6" r="1.5"/><circle cx="11.8" cy="13.9" r="1.5"/><circle cx="10.1" cy="9.9" r="1.6"/><circle cx="11.6" cy="13.3" r="1.4"/><circle cx="9.7" cy="13.2" r="0.7"/><circle cx="14.6" cy="13.1" r="0.8"/><circle cx="8.5" cy="9.3" r="1.1"/><circle cx="14.6" cy="10.1" r="1.2"/><circle cx="12.4" cy="9.6" r="0.8"/><circle cx="16.0" cy="8.0" r="0.8"/><circle cx="13.0" cy="15.6" r="1.5"/><circle cx="13.6" cy="17.9" r="1.5"/><circle cx="8.3" cy="9.1" r="0.7"/><circle cx="19.1" cy="12.9" r="0.8"/><circle cx="10.3" cy="8.8" r="1.4"/><circle cx="8.8" cy="9.6" r="0.8"/><circle cx="10.8" cy="9.9" r="0.8"/><circle cx="5.1" cy="8.9" r="1.2"/><circle cx="9.6" cy="17.6" r="0.8"/><circle cx="13.6" cy="11.2" r="1.0"/><circle cx="12.9" cy="11.7" r="1.0"/><circle cx="9.4" cy="10.3" r="1.0"/><circle cx="18.1" cy="5.7" r="1.3"/><circle cx="9.4" cy="7.3" r="0.7"/><circle cx="11.6" cy="11.1" r="1.5"/><circle cx="8.5" cy="3.7" r="0.6"/><circle cx="8.6" cy="8.4" r="1.3"/><circle cx="5.8" cy="21.4" r="0.7"/><circle cx="5.9" cy="9.6" r="1.5"/><circle cx="10.6" cy="6.3" r="1.4"/><circle cx="13.6" cy="9.6" r="1.3"/><circle cx="16.3" cy="7.5" r="1.0"/><circle cx="12.6" cy="5.2" r="1.2"/><circle cx="8.7" cy="8.9" r="1.2"/><circle cx="10.0" cy="10.2" r="1.2"/><circle cx="17.7" cy="10.7" r="1.3"/><circle cx="7.0" cy="14.2" r="1.2"/><circle cx="5.2" cy="13.1" r="0.7"/><circle cx="11.0" cy="10.3" r="1.2"/><circle cx="8.7" cy="11.3" r="1.3"/><circle cx="6.5" cy="11.1" r="1.5"/><circle cx="11.0" cy="11.5" r="0.9"/><circle cx="10.0" cy="9.2" r="0.8"/><circle cx="15.0" cy="8.5" r="1.0"/><circle cx="13.2" cy="9.3" r="1.3"/><circle cx="12.1" cy="14.0" r="1.4"/><circle cx="16.7" cy="7.8" r="1.0"/><circle cx="8.5" cy="9.7" r="0.7"/><circle cx="4.8" cy="11.1" r="1.4"/><circle cx="9.1" cy="3.9" r="0.9"/><circle cx="12.7" cy="13.9" r="0.9"/><circle cx="11.8" cy="14.0" r="1.2"/><circle cx="8.2" cy="11.1" r="1.4"/><circle cx="14.5" cy="10.6" r="0.7"/><circle cx="17.5" cy="12.2" r="0.6"/><circle cx="9.9" cy="7.2" r="0.9"/><circle cx="11.2" cy="10.4" r="0.7"/><circle cx="10.3" cy="11.2" r="1.4"/><circle cx="11.1" cy="12.6" r="0.6"/><circle cx="8.6" cy="8.6" r="1.2"/><circle cx="7.7" cy="6.5" r="1.6"/><circle cx="10.1" cy="9.2" r="1.1"/><circle cx="11.2" cy="11.4" r="1.1"/><circle cx="10.5" cy="9.2" r="0.9"/><circle cx="8.2" cy="14.8" r="1.1"/><circle cx="6.9" cy="7.7" r="1.0"/><circle cx="12.8" cy="4.7" r="0.7"/><circle cx="15.7" cy="9.0" r="0.7"/><circle cx="6.6" cy="12.2" r="1.5"/><circle cx="8.0" cy="13.7" r="1.5"/><circle cx="13.3" cy="4.1" r="1.1"/><circle cx="9.7" cy="9.3" r="1.3"/><circle cx="12.9" cy="7.1" r="1.3"/><circle cx="12.6" cy="17.3" r="1.6"/><circle cx="15.0" cy="10.5" r="1.4"/><circle cx="7.9" cy="16.9" r="1.5"/><circle cx="10.2" cy="12.0" r="1.0"/><circle cx="5.7" cy="9.4" r="1.1"/><circle cx="16.8" cy="12.0" r="0.7"/><circle cx="11.6" cy="9.2" r="0.9"/><circle cx="11.4" cy="9.4" r="0.7"/><circle cx="5.8" cy="10.5" r="1.4"/><circle cx="8.1" cy="4.3" r="1.1"/></g></g><path d="M23 17v6h-6z" fill="#e5525e"/></svg>
<svg class="a" style="left:830.7px;top:93.0px;background:#fff" width="23.2" height="23.2" viewBox="0 0 23 23"><g filter="url(#b1)"><g fill="#000" fill-opacity="0.42"><circle cx="12.4" cy="11.3" r="0.7"/><circle cx="8.1" cy="11.3" r="1.0"/><circle cx="8.3" cy="9.9" r="1.1"/><circle cx="8.2" cy="10.9" r="0.8"/><circle cx="15.2" cy="8.4" r="0.6"/><circle cx="16.4" cy="7.8" r="0.9"/><circle cx="8.9" cy="11.0" r="0.9"/><circle cx="6.2" cy="11.5" r="0.5"/><circle cx="15.1" cy="11.1" r="0.8"/><circle cx="12.4" cy="9.4" r="0.8"/><circle cx="10.5" cy="10.9" r="0.9"/><circle cx="3.5" cy="13.8" r="1.1"/><circle cx="10.5" cy="13.5" r="0.6"/><circle cx="5.1" cy="12.8" r="1.1"/><circle cx="8.0" cy="11.7" r="0.6"/><circle cx="5.1" cy="8.8" r="0.6"/><circle cx="11.1" cy="11.1" r="0.6"/><circle cx="11.8" cy="14.1" r="0.7"/><circle cx="8.0" cy="13.4" r="0.6"/><circle cx="10.8" cy="10.6" r="0.9"/><circle cx="11.0" cy="12.7" r="0.9"/><circle cx="7.9" cy="12.2" r="0.8"/><circle cx="9.0" cy="11.3" r="0.6"/><circle cx="7.6" cy="9.7" r="0.9"/><circle cx="13.9" cy="9.6" r="1.1"/><circle cx="11.6" cy="14.4" r="1.1"/><circle cx="13.5" cy="10.6" r="0.7"/><circle cx="13.2" cy="10.9" r="1.2"/><circle cx="12.4" cy="10.9" r="0.7"/><circle cx="10.6" cy="10.2" r="0.6"/><circle cx="12.8" cy="9.9" r="1.1"/><circle cx="13.5" cy="12.8" r="1.0"/><circle cx="13.3" cy="11.6" r="1.0"/><circle cx="18.8" cy="9.1" r="0.6"/><circle cx="5.1" cy="11.4" r="0.9"/><circle cx="10.1" cy="10.5" r="0.5"/><circle cx="11.8" cy="11.8" r="0.9"/><circle cx="6.5" cy="11.3" r="0.6"/><circle cx="11.9" cy="12.6" r="1.1"/><circle cx="19.0" cy="11.3" r="0.6"/><circle cx="19.0" cy="13.1" r="0.8"/><circle cx="11.3" cy="9.9" r="0.8"/><circle cx="7.3" cy="11.3" r="0.9"/><circle cx="16.4" cy="11.7" r="1.1"/><circle cx="12.6" cy="13.2" r="1.0"/><circle cx="9.1" cy="12.1" r="0.6"/><circle cx="10.4" cy="11.5" r="1.1"/><circle cx="12.7" cy="8.9" r="1.1"/><circle cx="8.6" cy="10.2" r="0.9"/><circle cx="1.0" cy="11.4" r="1.1"/><circle cx="10.6" cy="15.3" r="1.0"/><circle cx="12.1" cy="8.3" r="0.8"/><circle cx="16.7" cy="9.3" r="1.0"/><circle cx="11.6" cy="8.5" r="0.8"/><circle cx="10.8" cy="10.8" r="0.7"/><circle cx="10.5" cy="11.5" r="0.7"/><circle cx="7.8" cy="9.6" r="0.7"/><circle cx="15.9" cy="10.6" r="0.7"/><circle cx="8.6" cy="9.6" r="0.9"/><circle cx="-0.5" cy="16.3" r="0.9"/><circle cx="9.2" cy="8.7" r="1.2"/><circle cx="15.8" cy="11.8" r="1.0"/><circle cx="10.9" cy="13.3" r="0.5"/><circle cx="12.1" cy="13.1" r="0.6"/><circle cx="11.0" cy="15.3" r="0.9"/><circle cx="1.9" cy="11.3" r="0.9"/><circle cx="16.0" cy="11.4" r="1.1"/><circle cx="15.2" cy="12.6" r="1.0"/><circle cx="18.8" cy="12.6" r="0.6"/><circle cx="8.9" cy="11.7" r="0.8"/></g><g fill="#000" fill-opacity="0.42"><circle cx="10.5" cy="11.8" r="1.0"/><circle cx="8.9" cy="12.6" r="0.8"/><circle cx="9.9" cy="12.6" r="0.8"/><circle cx="9.5" cy="11.7" r="0.9"/><circle cx="10.9" cy="12.2" r="0.6"/><circle cx="12.1" cy="12.2" r="0.9"/><circle cx="7.7" cy="13.4" r="0.9"/><circle cx="16.7" cy="12.9" r="1.0"/><circle cx="14.9" cy="13.0" r="0.7"/><circle cx="5.7" cy="12.4" r="0.6"/><circle cx="6.3" cy="11.7" r="0.9"/><circle cx="5.6" cy="12.5" r="0.9"/><circle cx="10.2" cy="11.7" r="0.8"/><circle cx="9.7" cy="12.2" r="0.5"/><circle cx="10.0" cy="11.9" r="0.7"/><circle cx="9.9" cy="11.0" r="0.6"/><circle cx="9.2" cy="11.5" r="0.9"/><circle cx="4.2" cy="11.3" r="1.0"/><circle cx="10.9" cy="11.3" r="0.6"/><circle cx="13.7" cy="10.9" r="0.8"/><circle cx="10.0" cy="12.6" r="0.8"/><circle cx="8.5" cy="11.5" r="0.8"/><circle cx="11.0" cy="11.4" r="0.6"/><circle cx="15.4" cy="11.7" r="0.9"/><circle cx="11.7" cy="12.1" r="0.6"/><circle cx="8.5" cy="12.6" r="0.6"/><circle cx="10.3" cy="11.9" r="0.5"/><circle cx="9.9" cy="10.9" r="0.8"/><circle cx="9.4" cy="12.8" r="0.6"/><circle cx="9.2" cy="13.4" r="0.9"/></g></g><path d="M23 17v6h-6z" fill="#e5525e"/><path d="M18 20.5h3.500M19.750 18.750v3.500" stroke="#222" stroke-width=".8"/></svg>
<svg class="a" style="left:854.9px;top:93.0px;background:#fff" width="23.2" height="23.2" viewBox="0 0 23 23"><g filter="url(#b1)"><g fill="#000" fill-opacity="0.34"><circle cx="12.8" cy="11.9" r="1.1"/><circle cx="9.9" cy="6.2" r="0.6"/><circle cx="10.8" cy="12.4" r="1.1"/><circle cx="10.3" cy="15.3" r="1.2"/><circle cx="11.0" cy="15.5" r="1.0"/><circle cx="13.6" cy="9.0" r="0.8"/><circle cx="14.9" cy="15.7" r="0.6"/><circle cx="14.0" cy="13.6" r="0.8"/><circle cx="11.4" cy="7.9" r="1.0"/><circle cx="13.1" cy="12.3" r="1.0"/><circle cx="13.3" cy="12.7" r="1.0"/><circle cx="11.5" cy="7.9" r="0.6"/><circle cx="10.2" cy="16.0" r="0.8"/><circle cx="14.0" cy="15.2" r="0.9"/><circle cx="15.6" cy="6.4" r="1.1"/><circle cx="9.1" cy="13.7" r="0.7"/><circle cx="11.3" cy="14.7" r="1.2"/><circle cx="13.0" cy="9.1" r="0.8"/><circle cx="10.9" cy="13.8" r="0.8"/><circle cx="11.1" cy="12.7" r="0.9"/><circle cx="12.6" cy="6.2" r="1.1"/><circle cx="11.0" cy="10.0" r="1.0"/><circle cx="13.0" cy="8.8" r="0.5"/><circle cx="9.8" cy="10.5" r="0.9"/><circle cx="14.5" cy="9.8" r="1.1"/><circle cx="14.0" cy="13.0" r="1.1"/><circle cx="12.6" cy="11.8" r="1.0"/><circle cx="12.6" cy="10.0" r="0.9"/><circle cx="13.8" cy="16.2" r="1.0"/><circle cx="12.0" cy="13.8" r="1.0"/><circle cx="9.1" cy="10.1" r="0.8"/><circle cx="9.6" cy="19.9" r="1.0"/><circle cx="9.8" cy="11.2" r="1.0"/><circle cx="11.0" cy="2.4" r="0.8"/><circle cx="13.2" cy="5.7" r="1.1"/><circle cx="13.1" cy="3.9" r="1.1"/><circle cx="14.4" cy="9.5" r="0.9"/><circle cx="11.2" cy="4.0" r="0.8"/><circle cx="11.1" cy="12.1" r="1.0"/><circle cx="13.7" cy="10.8" r="0.6"/><circle cx="12.5" cy="15.0" r="0.7"/><circle cx="12.6" cy="10.7" r="0.7"/><circle cx="13.9" cy="14.8" r="1.0"/><circle cx="12.3" cy="12.3" r="0.8"/><circle cx="8.7" cy="6.6" r="0.5"/><circle cx="12.9" cy="12.6" r="0.7"/><circle cx="12.3" cy="17.3" r="0.9"/><circle cx="12.2" cy="13.5" r="0.7"/><circle cx="13.4" cy="17.0" r="0.7"/><circle cx="8.9" cy="8.8" r="0.8"/><circle cx="11.8" cy="19.3" r="1.1"/><circle cx="10.8" cy="15.2" r="1.2"/><circle cx="10.8" cy="11.3" r="0.5"/><circle cx="15.0" cy="8.7" r="0.8"/><circle cx="9.9" cy="10.2" r="0.7"/><circle cx="14.6" cy="10.6" r="0.7"/><circle cx="14.0" cy="11.3" r="0.8"/><circle cx="12.8" cy="4.9" r="0.9"/><circle cx="12.6" cy="13.0" r="0.7"/><circle cx="11.8" cy="19.1" r="0.9"/><circle cx="8.4" cy="1.4" r="0.7"/><circle cx="11.0" cy="10.5" r="1.0"/><circle cx="15.2" cy="11.1" r="1.1"/><circle cx="12.3" cy="9.5" r="0.7"/><circle cx="11.8" cy="9.2" r="0.8"/><circle cx="7.7" cy="13.0" r="0.9"/><circle cx="12.9" cy="8.3" r="1.1"/><circle cx="8.6" cy="15.4" r="0.6"/><circle cx="12.6" cy="8.6" r="0.9"/><circle cx="11.0" cy="10.6" r="1.1"/><circle cx="11.4" cy="14.2" r="0.6"/><circle cx="11.3" cy="15.2" r="1.0"/><circle cx="10.3" cy="15.7" r="0.6"/><circle cx="10.5" cy="13.7" r="1.2"/><circle cx="13.2" cy="5.9" r="0.5"/><circle cx="10.0" cy="15.4" r="0.7"/><circle cx="10.2" cy="9.3" r="0.5"/><circle cx="15.1" cy="10.6" r="0.6"/><circle cx="10.9" cy="8.8" r="0.8"/><circle cx="10.6" cy="10.2" r="0.7"/></g></g><path d="M23 17v6h-6z" fill="#e5525e"/><path d="M18 20.5h3.500M19.750 18.750v3.500" stroke="#222" stroke-width=".8"/></svg>
<svg class="a" style="left:879.1px;top:93.0px;background:#fff" width="23.2" height="23.2" viewBox="0 0 23 23"><circle cx="11" cy="11" r="7" fill="url(#rg4)"/><g filter="url(#b1)"><g fill="#000" fill-opacity="0.26"><circle cx="8.7" cy="12.9" r="0.7"/><circle cx="12.0" cy="14.1" r="0.7"/><circle cx="13.4" cy="10.1" r="1.0"/><circle cx="9.2" cy="14.3" r="0.6"/><circle cx="11.6" cy="11.7" r="1.0"/><circle cx="10.7" cy="9.8" r="0.8"/><circle cx="12.4" cy="8.7" r="0.6"/><circle cx="11.2" cy="12.2" r="0.6"/><circle cx="10.4" cy="11.4" r="1.1"/><circle cx="8.9" cy="12.1" r="1.0"/><circle cx="11.4" cy="7.3" r="0.8"/><circle cx="10.0" cy="12.8" r="0.5"/><circle cx="8.5" cy="12.8" r="1.2"/><circle cx="11.7" cy="8.2" r="0.9"/><circle cx="12.8" cy="11.2" r="0.7"/></g></g><path d="M23 17v6h-6z" fill="#e5525e"/><path d="M18 20.5h3.500M19.750 18.750v3.500" stroke="#222" stroke-width=".8"/></svg>
<svg class="a" style="left:903.3px;top:93.0px;background:#fff" width="23.2" height="23.2" viewBox="0 0 23 23"><g filter="url(#b1)"><g fill="#000" fill-opacity="0.55"><circle cx="9.5" cy="10.6" r="0.9"/><circle cx="4.3" cy="11.6" r="1.3"/><circle cx="8.9" cy="10.6" r="1.2"/><circle cx="14.1" cy="9.3" r="0.9"/><circle cx="8.6" cy="12.0" r="1.2"/><circle cx="14.7" cy="11.6" r="1.2"/><circle cx="11.7" cy="9.9" r="1.4"/><circle cx="8.9" cy="10.2" r="0.7"/><circle cx="10.7" cy="16.9" r="1.2"/><circle cx="6.7" cy="19.6" r="0.9"/><circle cx="8.7" cy="12.4" r="1.4"/><circle cx="15.5" cy="18.1" r="1.0"/><circle cx="6.3" cy="10.2" r="0.8"/><circle cx="19.7" cy="5.7" r="1.3"/><circle cx="9.1" cy="10.9" r="1.3"/><circle cx="8.7" cy="19.8" r="0.8"/><circle cx="4.6" cy="8.8" r="0.7"/><circle cx="9.2" cy="11.6" r="0.6"/><circle cx="14.9" cy="22.0" r="1.4"/><circle cx="8.9" cy="9.3" r="1.1"/><circle cx="10.2" cy="8.3" r="1.1"/><circle cx="10.7" cy="11.4" r="0.8"/><circle cx="8.6" cy="12.4" r="0.9"/><circle cx="8.5" cy="11.0" r="1.0"/><circle cx="10.1" cy="16.8" r="0.9"/><circle cx="9.9" cy="11.2" r="1.1"/><circle cx="15.9" cy="19.5" r="1.1"/><circle cx="7.0" cy="12.7" r="1.1"/><circle cx="8.3" cy="6.1" r="1.2"/><circle cx="-0.8" cy="13.1" r="1.3"/><circle cx="12.7" cy="9.0" r="0.9"/><circle cx="3.5" cy="8.7" r="1.0"/><circle cx="6.8" cy="11.4" r="1.3"/><circle cx="10.0" cy="13.1" r="1.2"/><circle cx="15.1" cy="8.4" r="1.1"/><circle cx="10.5" cy="8.8" r="1.1"/><circle cx="12.1" cy="12.8" r="1.0"/><circle cx="7.0" cy="11.9" r="0.6"/><circle cx="9.0" cy="7.7" r="0.8"/><circle cx="9.3" cy="15.5" r="0.8"/><circle cx="17.5" cy="15.4" r="1.4"/><circle cx="7.0" cy="5.5" r="0.9"/><circle cx="11.3" cy="9.5" r="1.2"/><circle cx="3.6" cy="8.7" r="0.7"/><circle cx="11.0" cy="10.1" r="1.0"/><circle cx="10.6" cy="12.0" r="0.8"/><circle cx="9.6" cy="15.2" r="0.7"/><circle cx="15.6" cy="7.8" r="0.9"/><circle cx="7.6" cy="15.9" r="0.6"/><circle cx="17.8" cy="13.6" r="0.8"/><circle cx="2.3" cy="12.1" r="1.4"/><circle cx="8.2" cy="12.4" r="0.8"/><circle cx="17.1" cy="8.3" r="0.8"/><circle cx="12.2" cy="9.0" r="1.0"/><circle cx="13.9" cy="18.8" r="1.4"/><circle cx="12.0" cy="17.1" r="0.8"/><circle cx="11.3" cy="11.2" r="0.7"/><circle cx="10.0" cy="8.8" r="1.3"/><circle cx="14.3" cy="7.7" r="0.7"/><circle cx="7.8" cy="3.7" r="1.0"/><circle cx="12.7" cy="13.3" r="0.8"/><circle cx="9.9" cy="9.6" r="0.7"/><circle cx="11.0" cy="17.5" r="1.2"/><circle cx="6.9" cy="16.0" r="1.3"/><circle cx="8.4" cy="10.6" r="0.8"/><circle cx="15.2" cy="9.5" r="0.8"/><circle cx="9.5" cy="10.7" r="1.4"/><circle cx="6.5" cy="13.7" r="1.0"/><circle cx="15.0" cy="13.4" r="0.8"/><circle cx="10.5" cy="18.8" r="0.7"/><circle cx="9.2" cy="18.1" r="0.8"/><circle cx="9.7" cy="16.6" r="0.7"/><circle cx="18.8" cy="5.3" r="0.6"/><circle cx="4.8" cy="13.5" r="0.9"/><circle cx="14.2" cy="10.1" r="0.7"/><circle cx="5.8" cy="10.1" r="0.9"/><circle cx="7.2" cy="6.5" r="1.0"/><circle cx="3.7" cy="11.7" r="1.1"/><circle cx="2.0" cy="10.8" r="0.7"/><circle cx="10.9" cy="9.8" r="1.1"/><circle cx="10.8" cy="16.0" r="1.2"/><circle cx="11.9" cy="5.5" r="0.8"/><circle cx="8.0" cy="12.2" r="1.1"/><circle cx="9.6" cy="12.0" r="1.1"/><circle cx="9.5" cy="7.2" r="1.3"/><circle cx="11.4" cy="13.9" r="0.6"/><circle cx="6.8" cy="12.1" r="1.0"/><circle cx="10.0" cy="18.7" r="0.7"/><circle cx="14.3" cy="9.3" r="1.0"/><circle cx="11.2" cy="9.3" r="0.7"/><circle cx="10.1" cy="13.0" r="0.9"/><circle cx="7.4" cy="8.8" r="0.8"/><circle cx="9.2" cy="11.1" r="1.3"/><circle cx="11.8" cy="14.5" r="0.7"/><circle cx="8.1" cy="5.4" r="1.2"/><circle cx="13.8" cy="13.4" r="0.9"/><circle cx="12.5" cy="21.7" r="0.6"/><circle cx="4.6" cy="12.4" r="1.4"/><circle cx="12.9" cy="15.3" r="1.2"/><circle cx="13.0" cy="12.7" r="1.3"/><circle cx="12.7" cy="14.9" r="0.8"/><circle cx="9.3" cy="12.7" r="0.6"/><circle cx="16.4" cy="11.8" r="1.2"/><circle cx="10.8" cy="14.8" r="1.0"/><circle cx="10.7" cy="16.2" r="1.3"/><circle cx="8.4" cy="14.6" r="1.4"/><circle cx="9.7" cy="11.3" r="0.9"/><circle cx="9.8" cy="10.9" r="0.9"/><circle cx="8.1" cy="5.0" r="1.1"/><circle cx="13.4" cy="9.3" r="0.9"/><circle cx="12.4" cy="8.9" r="1.2"/><circle cx="11.2" cy="15.4" r="0.7"/><circle cx="8.5" cy="11.3" r="0.8"/><circle cx="11.4" cy="16.1" r="0.8"/><circle cx="0.0" cy="15.9" r="1.1"/><circle cx="12.0" cy="10.1" r="0.9"/><circle cx="15.3" cy="14.5" r="0.9"/><circle cx="10.4" cy="12.7" r="0.7"/><circle cx="10.2" cy="15.7" r="1.3"/><circle cx="9.9" cy="9.1" r="0.9"/><circle cx="15.2" cy="19.2" r="0.9"/><circle cx="11.1" cy="6.0" r="1.3"/><circle cx="13.6" cy="12.4" r="0.9"/><circle cx="16.8" cy="15.9" r="0.9"/><circle cx="11.0" cy="7.5" r="0.6"/><circle cx="8.5" cy="13.7" r="0.6"/><circle cx="13.2" cy="16.1" r="0.6"/><circle cx="9.1" cy="15.6" r="1.0"/><circle cx="14.1" cy="16.4" r="0.8"/><circle cx="9.7" cy="6.5" r="0.7"/><circle cx="11.3" cy="14.9" r="1.2"/><circle cx="7.6" cy="14.1" r="1.3"/><circle cx="10.9" cy="15.1" r="0.9"/><circle cx="10.7" cy="13.1" r="0.6"/><circle cx="7.4" cy="8.5" r="1.2"/><circle cx="13.4" cy="11.5" r="1.1"/><circle cx="12.6" cy="10.7" r="1.2"/><circle cx="6.1" cy="3.9" r="1.3"/><circle cx="11.0" cy="17.3" r="0.7"/><circle cx="7.4" cy="13.6" r="0.6"/><circle cx="8.2" cy="14.2" r="1.0"/><circle cx="10.1" cy="14.2" r="0.9"/><circle cx="8.4" cy="12.4" r="1.1"/><circle cx="10.6" cy="13.7" r="0.9"/><circle cx="8.7" cy="13.0" r="1.1"/><circle cx="9.2" cy="7.5" r="1.2"/><circle cx="14.0" cy="12.5" r="0.9"/><circle cx="13.8" cy="13.5" r="0.6"/><circle cx="5.9" cy="12.1" r="1.0"/><circle cx="9.3" cy="14.5" r="0.6"/></g></g><path d="M23 17v6h-6z" fill="#e5525e"/><path d="M18 20.5h3.500" stroke="#222" stroke-width=".8"/></svg>
<svg class="a" style="left:927.5px;top:93.0px;background:#fff" width="23.2" height="23.2" viewBox="0 0 23 23"><path d="M4 3l2.5 4" stroke="#777" stroke-width="1.2"/><path d="M23 17v6h-6z" fill="#e5525e"/></svg>
<svg class="a" style="left:951.7px;top:93.0px;background:#fff" width="23.2" height="23.2" viewBox="0 0 23 23"><g fill="#000" fill-opacity="0.64"><circle cx="6.6" cy="19.0" r="0.8"/><circle cx="11.4" cy="19.3" r="0.6"/><circle cx="4.3" cy="13.4" r="1.0"/><circle cx="7.1" cy="17.2" r="1.0"/><circle cx="13.1" cy="4.9" r="0.8"/><circle cx="6.5" cy="15.1" r="0.6"/><circle cx="16.5" cy="4.6" r="0.7"/><circle cx="13.6" cy="11.1" r="0.6"/><circle cx="6.5" cy="11.8" r="0.7"/><circle cx="15.8" cy="11.5" r="0.6"/><circle cx="13.1" cy="19.4" r="0.6"/><circle cx="19.4" cy="12.0" r="0.7"/></g><path d="M18 20.5h3.500M19.750 18.750v3.500" stroke="#222" stroke-width=".8"/></svg>
<svg class="a" style="left:975.9px;top:93.0px;background:#fff" width="23.2" height="23.2" viewBox="0 0 23 23"><g fill="#000" fill-opacity="0.68"><circle cx="12.5" cy="17.3" r="1.1"/><circle cx="4.5" cy="8.9" r="1.0"/><circle cx="16.8" cy="3.3" r="0.8"/><circle cx="6.6" cy="18.0" r="0.8"/><circle cx="10.2" cy="3.7" r="1.1"/><circle cx="20.8" cy="9.2" r="0.7"/><circle cx="6.9" cy="6.6" r="1.0"/><circle cx="8.4" cy="14.5" r="1.1"/><circle cx="7.2" cy="10.1" r="0.8"/><circle cx="10.1" cy="14.4" r="1.0"/><circle cx="13.8" cy="12.6" r="0.6"/><circle cx="18.7" cy="15.5" r="0.7"/><circle cx="3.6" cy="13.4" r="0.9"/><circle cx="16.9" cy="18.1" r="1.2"/><circle cx="16.8" cy="12.5" r="1.0"/><circle cx="13.8" cy="5.6" r="1.1"/><circle cx="11.9" cy="18.6" r="0.8"/><circle cx="7.6" cy="17.8" r="1.2"/><circle cx="15.6" cy="5.0" r="0.9"/><circle cx="9.9" cy="4.2" r="1.2"/><circle cx="13.1" cy="8.0" r="0.9"/><circle cx="9.7" cy="7.2" r="0.7"/><circle cx="19.6" cy="11.6" r="1.3"/><circle cx="15.6" cy="10.4" r="1.1"/></g><path d="M18 20.5h3.500M19.750 18.750v3.500" stroke="#222" stroke-width=".8"/></svg>
<svg class="a" style="left:806.5px;top:117.2px;background:#fff" width="23.2" height="23.2" viewBox="0 0 23 23"><g filter="url(#b1)"><g fill="#000" fill-opacity="0.59"><circle cx="4.7" cy="15.0" r="0.7"/><circle cx="19.2" cy="7.9" r="0.4"/><circle cx="10.3" cy="8.5" r="0.4"/><circle cx="9.3" cy="19.0" r="1.1"/><circle cx="14.8" cy="15.0" r="0.4"/><circle cx="5.0" cy="9.8" r="0.7"/><circle cx="8.1" cy="19.0" r="1.0"/><circle cx="9.8" cy="17.0" r="0.8"/><circle cx="11.9" cy="2.6" r="0.7"/><circle cx="8.7" cy="5.3" r="1.0"/><circle cx="13.3" cy="14.5" r="0.5"/><circle cx="15.1" cy="9.7" r="0.7"/><circle cx="14.7" cy="15.0" r="0.4"/><circle cx="7.9" cy="10.1" r="0.8"/><circle cx="10.4" cy="15.7" r="0.7"/><circle cx="7.9" cy="14.9" r="0.4"/><circle cx="18.8" cy="14.8" r="0.6"/><circle cx="14.4" cy="13.3" r="0.7"/><circle cx="15.0" cy="11.4" r="1.0"/><circle cx="5.2" cy="12.1" r="1.0"/><circle cx="9.3" cy="12.8" r="0.8"/><circle cx="7.1" cy="5.6" r="0.6"/><circle cx="18.8" cy="8.4" r="1.1"/><circle cx="3.3" cy="14.4" r="0.9"/><circle cx="11.7" cy="12.8" r="0.5"/><circle cx="12.8" cy="13.2" r="0.7"/><circle cx="11.1" cy="6.5" r="0.8"/><circle cx="15.1" cy="11.8" r="1.1"/><circle cx="17.5" cy="12.0" r="1.0"/><circle cx="13.0" cy="4.1" r="0.7"/><circle cx="13.7" cy="3.8" r="0.9"/><circle cx="13.8" cy="11.2" r="1.1"/><circle cx="4.8" cy="15.9" r="0.6"/><circle cx="12.2" cy="10.8" r="0.8"/><circle cx="11.8" cy="17.1" r="0.7"/><circle cx="6.5" cy="4.7" r="0.7"/><circle cx="7.5" cy="7.4" r="0.6"/><circle cx="15.2" cy="8.6" r="0.5"/><circle cx="7.1" cy="18.2" r="0.5"/><circle cx="10.7" cy="4.9" r="0.9"/><circle cx="12.3" cy="14.1" r="0.5"/><circle cx="7.5" cy="16.3" r="0.4"/><circle cx="5.3" cy="11.4" r="0.6"/><circle cx="2.5" cy="9.5" r="0.5"/><circle cx="14.7" cy="8.0" r="0.9"/><circle cx="17.9" cy="17.1" r="0.7"/><circle cx="15.1" cy="10.5" r="0.7"/><circle cx="10.0" cy="7.8" r="0.6"/><circle cx="7.1" cy="3.6" r="0.6"/><circle cx="13.2" cy="16.4" r="1.1"/><circle cx="15.3" cy="17.3" r="0.7"/><circle cx="8.4" cy="8.2" r="0.8"/><circle cx="17.3" cy="6.1" r="0.8"/><circle cx="4.2" cy="11.3" r="0.5"/><circle cx="14.9" cy="5.1" r="0.7"/><circle cx="8.0" cy="6.5" r="0.7"/><circle cx="11.9" cy="18.4" r="0.8"/><circle cx="9.4" cy="11.3" r="0.8"/><circle cx="4.5" cy="13.8" r="0.8"/><circle cx="14.2" cy="10.0" r="0.7"/><circle cx="18.7" cy="11.2" r="0.6"/><circle cx="10.3" cy="2.6" r="0.7"/><circle cx="13.2" cy="9.1" r="1.1"/><circle cx="6.7" cy="11.7" r="1.0"/><circle cx="5.8" cy="4.5" r="1.0"/><circle cx="12.9" cy="5.3" r="1.1"/><circle cx="18.7" cy="14.8" r="0.9"/><circle cx="11.0" cy="19.6" r="0.7"/><circle cx="2.8" cy="9.6" r="0.5"/><circle cx="9.7" cy="18.6" r="0.5"/><circle cx="3.5" cy="8.8" r="0.7"/><circle cx="11.4" cy="19.5" r="1.0"/><circle cx="11.9" cy="4.9" r="1.0"/><circle cx="12.0" cy="8.1" r="0.7"/><circle cx="12.4" cy="12.5" r="0.6"/><circle cx="16.4" cy="5.3" r="0.5"/><circle cx="13.3" cy="16.6" r="1.0"/><circle cx="4.7" cy="5.8" r="0.5"/><circle cx="15.1" cy="11.2" r="0.8"/><circle cx="16.5" cy="6.1" r="0.5"/><circle cx="8.1" cy="6.4" r="0.4"/><circle cx="8.3" cy="15.8" r="0.8"/><circle cx="9.8" cy="18.4" r="0.9"/><circle cx="12.4" cy="14.4" r="0.9"/><circle cx="7.8" cy="12.2" r="0.5"/><circle cx="17.6" cy="9.0" r="0.7"/><circle cx="14.0" cy="20.0" r="0.9"/><circle cx="10.5" cy="6.1" r="0.6"/><circle cx="8.1" cy="13.4" r="0.8"/><circle cx="3.7" cy="15.2" r="0.7"/><circle cx="4.8" cy="13.2" r="1.1"/><circle cx="6.7" cy="17.7" r="0.6"/><circle cx="6.8" cy="9.2" r="1.0"/><circle cx="9.1" cy="19.6" r="0.9"/><circle cx="2.7" cy="13.9" r="0.7"/><circle cx="10.7" cy="4.5" r="0.7"/><circle cx="16.4" cy="13.8" r="0.6"/><circle cx="2.8" cy="14.7" r="0.6"/><circle cx="8.5" cy="4.6" r="0.6"/><circle cx="8.2" cy="13.2" r="1.0"/><circle cx="10.9" cy="17.3" r="0.6"/><circle cx="14.6" cy="4.0" r="0.8"/><circle cx="8.3" cy="10.7" r="1.0"/><circle cx="15.6" cy="14.4" r="0.7"/><circle cx="9.8" cy="4.2" r="0.6"/><circle cx="18.0" cy="6.3" r="0.4"/><circle cx="6.9" cy="6.9" r="0.7"/><circle cx="6.1" cy="12.6" r="0.9"/><circle cx="4.0" cy="6.0" r="1.1"/><circle cx="16.7" cy="11.2" r="1.0"/><circle cx="6.6" cy="5.4" r="1.1"/><circle cx="16.6" cy="14.0" r="0.7"/><circle cx="8.7" cy="8.0" r="1.1"/><circle cx="12.4" cy="16.8" r="0.5"/><circle cx="4.9" cy="16.3" r="0.5"/><circle cx="14.6" cy="17.8" r="0.8"/><circle cx="10.8" cy="7.0" r="1.0"/><circle cx="10.0" cy="3.6" r="0.5"/><circle cx="9.9" cy="11.7" r="1.0"/><circle cx="19.0" cy="8.6" r="0.4"/><circle cx="7.1" cy="16.8" r="0.8"/><circle cx="17.1" cy="16.6" r="0.6"/><circle cx="7.8" cy="11.4" r="0.8"/><circle cx="12.8" cy="13.4" r="0.8"/><circle cx="8.8" cy="19.1" r="0.6"/><circle cx="9.2" cy="12.6" r="0.6"/><circle cx="4.6" cy="13.5" r="0.7"/><circle cx="12.7" cy="9.2" r="1.0"/><circle cx="16.0" cy="18.8" r="0.8"/><circle cx="5.1" cy="15.4" r="1.0"/><circle cx="16.6" cy="10.2" r="0.4"/><circle cx="15.6" cy="18.2" r="0.9"/><circle cx="10.2" cy="8.0" r="0.8"/><circle cx="13.9" cy="12.0" r="0.6"/><circle cx="18.1" cy="10.0" r="1.0"/><circle cx="16.6" cy="13.2" r="0.5"/><circle cx="10.8" cy="14.5" r="1.0"/><circle cx="8.0" cy="17.0" r="0.9"/><circle cx="17.6" cy="5.8" r="0.8"/><circle cx="2.4" cy="11.4" r="0.7"/><circle cx="8.6" cy="18.9" r="0.6"/><circle cx="7.0" cy="15.9" r="0.7"/><circle cx="7.3" cy="16.1" r="0.7"/><circle cx="18.8" cy="14.0" r="0.4"/><circle cx="4.4" cy="10.3" r="0.7"/><circle cx="11.5" cy="14.3" r="0.7"/><circle cx="8.5" cy="17.3" r="0.6"/><circle cx="11.0" cy="5.2" r="0.4"/><circle cx="3.6" cy="16.4" r="0.4"/><circle cx="3.7" cy="6.6" r="0.7"/><circle cx="6.5" cy="8.3" r="0.6"/><circle cx="5.7" cy="7.1" r="0.6"/><circle cx="4.5" cy="11.6" r="0.9"/><circle cx="13.6" cy="12.4" r="0.6"/><circle cx="10.0" cy="19.5" r="0.7"/><circle cx="14.6" cy="7.1" r="0.6"/><circle cx="9.9" cy="9.1" r="1.1"/><circle cx="13.5" cy="7.0" r="0.6"/><circle cx="14.4" cy="4.3" r="0.8"/><circle cx="18.4" cy="14.2" r="0.4"/><circle cx="6.3" cy="6.8" r="1.0"/><circle cx="10.1" cy="10.5" r="1.1"/><circle cx="11.1" cy="4.6" r="0.4"/><circle cx="10.5" cy="5.7" r="0.9"/><circle cx="19.6" cy="10.6" r="0.5"/><circle cx="12.2" cy="5.6" r="0.9"/><circle cx="6.7" cy="15.7" r="0.7"/><circle cx="14.8" cy="14.9" r="0.9"/><circle cx="13.8" cy="12.8" r="1.0"/><circle cx="7.7" cy="5.7" r="0.5"/></g></g><path d="M23 17v6h-6z" fill="#e5525e"/></svg>
<svg class="a" style="left:830.7px;top:117.2px;background:#fff" width="23.2" height="23.2" viewBox="0 0 23 23"><g fill="#000" fill-opacity="0.68"><circle cx="15.4" cy="15.1" r="0.9"/><circle cx="3.0" cy="8.1" r="0.4"/><circle cx="5.5" cy="15.0" r="0.8"/><circle cx="17.8" cy="17.7" r="0.6"/><circle cx="17.6" cy="12.7" r="0.5"/><circle cx="7.3" cy="3.4" r="0.6"/><circle cx="9.3" cy="6.0" r="0.8"/><circle cx="18.0" cy="16.5" r="0.4"/><circle cx="7.8" cy="9.3" r="0.5"/><circle cx="14.4" cy="16.3" r="0.7"/><circle cx="5.6" cy="10.8" r="0.6"/><circle cx="14.6" cy="6.7" r="0.7"/><circle cx="2.2" cy="12.7" r="0.5"/><circle cx="10.0" cy="7.2" r="0.5"/><circle cx="10.6" cy="4.4" r="0.5"/><circle cx="19.4" cy="14.9" r="0.5"/><circle cx="10.2" cy="5.4" r="0.7"/><circle cx="2.8" cy="8.1" r="0.8"/><circle cx="5.1" cy="13.3" r="0.4"/><circle cx="11.6" cy="8.5" r="0.5"/><circle cx="12.5" cy="10.0" r="0.7"/><circle cx="5.1" cy="8.6" r="0.5"/><circle cx="16.9" cy="19.0" r="0.8"/><circle cx="12.5" cy="8.7" r="0.8"/><circle cx="12.3" cy="15.7" r="0.6"/><circle cx="9.0" cy="9.4" r="0.8"/><circle cx="3.7" cy="7.0" r="0.9"/><circle cx="9.4" cy="6.2" r="0.9"/><circle cx="10.5" cy="6.5" r="0.8"/><circle cx="10.8" cy="6.7" r="0.4"/><circle cx="18.4" cy="12.4" r="0.5"/><circle cx="10.2" cy="16.1" r="0.4"/><circle cx="6.6" cy="12.0" r="0.5"/><circle cx="10.3" cy="18.2" r="0.8"/><circle cx="16.2" cy="18.9" r="0.8"/><circle cx="6.1" cy="7.1" r="0.7"/><circle cx="4.0" cy="9.8" r="0.9"/><circle cx="12.3" cy="6.7" r="0.3"/><circle cx="16.8" cy="9.3" r="0.8"/><circle cx="12.2" cy="17.9" r="0.5"/><circle cx="10.3" cy="2.4" r="0.6"/><circle cx="6.4" cy="9.2" r="0.4"/><circle cx="14.5" cy="10.5" r="0.9"/><circle cx="10.1" cy="9.4" r="0.8"/><circle cx="17.2" cy="15.8" r="0.4"/><circle cx="16.8" cy="11.1" r="0.8"/><circle cx="18.7" cy="14.4" r="0.3"/><circle cx="18.6" cy="12.8" r="0.9"/><circle cx="8.0" cy="3.4" r="0.8"/><circle cx="8.9" cy="11.1" r="0.6"/><circle cx="14.3" cy="17.8" r="0.5"/><circle cx="7.3" cy="11.5" r="0.7"/><circle cx="5.8" cy="14.8" r="0.3"/><circle cx="4.4" cy="12.1" r="0.9"/><circle cx="8.3" cy="10.2" r="0.5"/><circle cx="7.4" cy="18.3" r="0.9"/><circle cx="20.7" cy="10.1" r="0.9"/><circle cx="17.3" cy="4.4" r="0.3"/><circle cx="4.2" cy="12.0" r="0.7"/><circle cx="5.9" cy="6.7" r="0.9"/><circle cx="17.4" cy="15.0" r="0.9"/><circle cx="14.6" cy="12.1" r="0.8"/><circle cx="12.9" cy="11.1" r="0.3"/><circle cx="15.3" cy="4.6" r="0.6"/><circle cx="4.3" cy="7.5" r="0.8"/><circle cx="14.0" cy="11.5" r="0.8"/><circle cx="20.1" cy="10.2" r="0.5"/><circle cx="8.6" cy="16.3" r="0.3"/><circle cx="12.1" cy="6.7" r="0.7"/><circle cx="6.1" cy="10.6" r="0.7"/><circle cx="7.1" cy="12.8" r="0.8"/><circle cx="13.2" cy="14.8" r="0.5"/><circle cx="3.2" cy="12.6" r="0.5"/><circle cx="12.1" cy="19.2" r="0.5"/><circle cx="6.8" cy="10.8" r="0.8"/><circle cx="13.3" cy="15.7" r="0.5"/><circle cx="7.6" cy="18.6" r="0.7"/><circle cx="13.2" cy="4.7" r="0.3"/><circle cx="11.9" cy="6.8" r="0.4"/><circle cx="3.4" cy="16.3" r="0.5"/><circle cx="5.9" cy="18.6" r="0.9"/><circle cx="8.8" cy="13.8" r="0.8"/><circle cx="12.6" cy="6.1" r="0.8"/><circle cx="7.8" cy="15.0" r="0.7"/><circle cx="11.1" cy="5.0" r="0.8"/><circle cx="18.2" cy="12.1" r="0.5"/><circle cx="19.8" cy="15.1" r="0.4"/><circle cx="14.0" cy="20.1" r="0.9"/><circle cx="16.5" cy="9.2" r="0.9"/><circle cx="16.6" cy="17.7" r="0.9"/><circle cx="12.7" cy="14.8" r="0.7"/><circle cx="17.5" cy="6.1" r="0.9"/><circle cx="5.9" cy="13.2" r="0.4"/><circle cx="10.2" cy="20.6" r="0.3"/><circle cx="13.7" cy="16.6" r="0.3"/><circle cx="10.1" cy="15.3" r="0.4"/><circle cx="4.6" cy="10.3" r="0.6"/><circle cx="12.0" cy="4.6" r="0.9"/><circle cx="15.4" cy="13.7" r="0.3"/><circle cx="8.5" cy="19.2" r="0.9"/><circle cx="7.7" cy="11.4" r="0.5"/><circle cx="6.8" cy="9.4" r="0.8"/><circle cx="17.8" cy="10.4" r="0.7"/><circle cx="15.2" cy="6.2" r="0.4"/><circle cx="20.3" cy="8.3" r="0.3"/><circle cx="12.0" cy="5.5" r="0.3"/><circle cx="13.6" cy="14.9" r="0.7"/><circle cx="11.8" cy="12.8" r="0.4"/><circle cx="13.5" cy="5.1" r="0.7"/><circle cx="7.5" cy="12.4" r="0.3"/><circle cx="10.9" cy="13.3" r="0.5"/><circle cx="7.3" cy="7.6" r="0.6"/><circle cx="7.7" cy="7.7" r="0.5"/><circle cx="16.9" cy="6.7" r="0.6"/><circle cx="5.3" cy="9.9" r="0.5"/><circle cx="15.4" cy="9.1" r="0.9"/><circle cx="16.9" cy="4.4" r="0.4"/><circle cx="2.1" cy="11.0" r="0.5"/><circle cx="15.3" cy="18.6" r="0.4"/><circle cx="8.2" cy="9.6" r="0.9"/><circle cx="10.9" cy="14.4" r="0.7"/><circle cx="7.4" cy="17.3" r="0.6"/><circle cx="17.5" cy="8.3" r="0.5"/><circle cx="18.2" cy="11.6" r="0.5"/><circle cx="4.8" cy="8.1" r="0.6"/><circle cx="17.2" cy="15.1" r="0.6"/><circle cx="5.6" cy="4.2" r="0.5"/><circle cx="8.9" cy="12.5" r="0.8"/><circle cx="12.3" cy="20.1" r="0.8"/><circle cx="11.2" cy="20.5" r="0.6"/><circle cx="5.2" cy="14.7" r="0.9"/><circle cx="4.9" cy="11.9" r="0.5"/><circle cx="15.2" cy="5.8" r="0.5"/><circle cx="13.0" cy="15.7" r="0.8"/><circle cx="14.6" cy="2.6" r="0.9"/><circle cx="8.1" cy="3.7" r="0.7"/><circle cx="14.6" cy="3.6" r="0.4"/><circle cx="13.6" cy="6.7" r="0.4"/><circle cx="12.8" cy="10.8" r="0.6"/><circle cx="6.8" cy="18.5" r="0.7"/><circle cx="19.3" cy="6.6" r="0.7"/><circle cx="18.6" cy="14.6" r="0.4"/><circle cx="20.3" cy="10.5" r="0.5"/><circle cx="14.6" cy="18.8" r="0.8"/><circle cx="19.0" cy="10.8" r="0.4"/><circle cx="11.2" cy="9.2" r="0.8"/><circle cx="12.5" cy="3.1" r="0.8"/><circle cx="3.1" cy="7.6" r="0.7"/><circle cx="5.6" cy="11.8" r="0.5"/><circle cx="15.3" cy="12.0" r="0.8"/><circle cx="12.5" cy="19.1" r="0.8"/><circle cx="9.2" cy="5.1" r="0.5"/><circle cx="10.9" cy="15.6" r="0.7"/><circle cx="7.9" cy="3.0" r="0.5"/><circle cx="19.6" cy="7.5" r="0.5"/><circle cx="18.6" cy="9.3" r="0.9"/><circle cx="12.3" cy="6.1" r="0.5"/><circle cx="4.9" cy="10.6" r="0.3"/><circle cx="16.0" cy="6.2" r="0.6"/><circle cx="11.3" cy="6.8" r="0.4"/><circle cx="7.4" cy="9.2" r="0.5"/><circle cx="13.5" cy="12.4" r="0.5"/><circle cx="2.4" cy="9.9" r="0.7"/><circle cx="6.3" cy="14.6" r="0.4"/><circle cx="2.3" cy="13.0" r="0.4"/><circle cx="4.3" cy="14.7" r="0.8"/><circle cx="4.3" cy="8.9" r="0.9"/><circle cx="15.4" cy="8.8" r="0.6"/><circle cx="18.4" cy="11.4" r="0.4"/><circle cx="11.7" cy="9.2" r="0.4"/><circle cx="6.8" cy="9.9" r="0.7"/><circle cx="10.7" cy="6.2" r="0.8"/><circle cx="6.7" cy="5.1" r="0.6"/><circle cx="8.7" cy="12.8" r="0.6"/><circle cx="20.1" cy="9.0" r="0.3"/><circle cx="15.9" cy="13.6" r="0.7"/><circle cx="8.4" cy="12.8" r="0.6"/><circle cx="4.2" cy="7.9" r="0.5"/><circle cx="6.9" cy="5.2" r="0.7"/><circle cx="19.2" cy="13.8" r="0.4"/><circle cx="17.7" cy="13.7" r="0.3"/><circle cx="16.8" cy="14.1" r="0.6"/><circle cx="18.8" cy="17.2" r="0.8"/><circle cx="4.2" cy="12.1" r="0.5"/><circle cx="14.8" cy="11.2" r="0.5"/><circle cx="13.1" cy="20.2" r="0.6"/><circle cx="6.4" cy="14.7" r="0.8"/><circle cx="11.1" cy="19.9" r="0.7"/><circle cx="6.1" cy="13.3" r="0.6"/><circle cx="6.4" cy="13.1" r="0.7"/><circle cx="7.1" cy="14.3" r="0.8"/><circle cx="5.2" cy="13.3" r="0.8"/><circle cx="5.9" cy="13.1" r="0.8"/><circle cx="19.8" cy="10.3" r="0.5"/><circle cx="7.6" cy="4.3" r="0.5"/><circle cx="10.0" cy="2.4" r="0.7"/><circle cx="8.4" cy="6.0" r="0.7"/><circle cx="12.8" cy="19.7" r="0.6"/><circle cx="17.0" cy="10.8" r="0.7"/><circle cx="17.6" cy="12.1" r="0.8"/><circle cx="11.1" cy="18.9" r="0.4"/><circle cx="3.9" cy="17.1" r="0.4"/><circle cx="13.5" cy="10.3" r="0.6"/><circle cx="15.3" cy="3.7" r="0.5"/><circle cx="4.7" cy="7.2" r="0.8"/><circle cx="11.3" cy="4.3" r="0.5"/><circle cx="9.5" cy="4.7" r="0.6"/><circle cx="15.0" cy="11.2" r="0.8"/><circle cx="7.8" cy="18.7" r="0.9"/><circle cx="10.4" cy="18.6" r="0.6"/></g><path d="M23 17v6h-6z" fill="#e5525e"/></svg>
<svg class="a" style="left:854.9px;top:117.2px;background:#fff" width="23.2" height="23.2" viewBox="0 0 23 23"><circle cx="11.5" cy="11.5" r="9.5" fill="#111"/><g fill="#fff" fill-opacity=".7"><circle cx="11.6" cy="8.1" r="0.9"/><circle cx="18.6" cy="4.8" r="0.6"/><circle cx="15.4" cy="4.6" r="0.5"/><circle cx="10.5" cy="5.6" r="0.8"/><circle cx="19.2" cy="7.7" r="1.2"/><circle cx="9.9" cy="12.7" r="0.5"/><circle cx="12.1" cy="13.1" r="1.0"/><circle cx="15.9" cy="5.0" r="0.6"/><circle cx="10.9" cy="11.4" r="0.4"/><circle cx="9.9" cy="11.6" r="0.5"/><circle cx="11.0" cy="14.6" r="1.1"/><circle cx="14.0" cy="10.2" r="0.5"/><circle cx="20.1" cy="11.2" r="1.0"/><circle cx="13.6" cy="12.0" r="1.0"/><circle cx="21.3" cy="9.1" r="1.1"/><circle cx="15.5" cy="13.3" r="1.0"/><circle cx="9.7" cy="14.1" r="0.6"/><circle cx="10.6" cy="8.5" r="0.8"/><circle cx="16.0" cy="3.8" r="0.9"/><circle cx="16.8" cy="7.8" r="0.6"/><circle cx="12.3" cy="6.6" r="1.2"/><circle cx="11.7" cy="11.2" r="0.7"/><circle cx="18.2" cy="1.1" r="0.9"/><circle cx="15.8" cy="10.9" r="1.0"/><circle cx="15.8" cy="15.1" r="1.1"/><circle cx="14.6" cy="11.3" r="0.6"/><circle cx="13.8" cy="6.9" r="1.0"/><circle cx="21.1" cy="10.6" r="0.8"/><circle cx="12.4" cy="7.2" r="0.4"/><circle cx="7.0" cy="16.1" r="0.9"/><circle cx="14.9" cy="7.0" r="0.5"/><circle cx="20.1" cy="8.7" r="0.5"/><circle cx="13.2" cy="13.1" r="1.0"/><circle cx="12.0" cy="11.5" r="0.6"/><circle cx="10.5" cy="6.8" r="0.7"/><circle cx="14.0" cy="10.9" r="0.6"/><circle cx="17.4" cy="8.3" r="0.9"/><circle cx="13.8" cy="9.7" r="1.1"/><circle cx="9.3" cy="8.8" r="0.6"/><circle cx="19.1" cy="4.2" r="0.9"/></g><path d="M23 17v6h-6z" fill="#e5525e"/><path d="M18 20.5h3.500M19.750 18.750v3.500" stroke="#222" stroke-width=".8"/></svg>
<svg class="a" style="left:879.1px;top:117.2px;background:#fff" width="23.2" height="23.2" viewBox="0 0 23 23"><g fill="#000" fill-opacity="0.72"><circle cx="7.0" cy="8.5" r="0.7"/><circle cx="6.2" cy="13.6" r="0.7"/><circle cx="4.6" cy="12.7" r="0.7"/><circle cx="13.0" cy="7.4" r="0.5"/><circle cx="15.9" cy="12.4" r="0.4"/><circle cx="13.0" cy="8.2" r="0.6"/><circle cx="14.0" cy="16.3" r="0.9"/><circle cx="8.0" cy="8.2" r="0.8"/><circle cx="5.6" cy="12.9" r="0.7"/><circle cx="17.5" cy="8.6" r="1.0"/><circle cx="12.3" cy="10.8" r="0.5"/><circle cx="17.5" cy="11.3" r="0.7"/><circle cx="7.9" cy="16.3" r="0.7"/><circle cx="13.5" cy="11.9" r="1.0"/><circle cx="14.5" cy="12.2" r="0.6"/><circle cx="9.1" cy="10.7" r="0.7"/><circle cx="16.5" cy="10.8" r="0.9"/><circle cx="5.2" cy="9.9" r="0.5"/><circle cx="2.7" cy="13.1" r="0.8"/><circle cx="12.2" cy="15.3" r="0.7"/><circle cx="7.5" cy="15.2" r="0.8"/><circle cx="15.2" cy="12.3" r="0.8"/><circle cx="11.5" cy="13.3" r="0.9"/><circle cx="6.6" cy="16.2" r="0.7"/><circle cx="16.8" cy="14.4" r="0.6"/><circle cx="14.0" cy="8.1" r="0.9"/><circle cx="12.6" cy="12.3" r="0.9"/><circle cx="13.6" cy="13.7" r="0.4"/><circle cx="14.2" cy="14.9" r="1.0"/><circle cx="9.0" cy="14.3" r="0.9"/><circle cx="13.9" cy="15.7" r="0.8"/><circle cx="12.7" cy="11.6" r="0.7"/><circle cx="4.9" cy="15.0" r="0.6"/><circle cx="10.2" cy="9.9" r="0.7"/><circle cx="15.3" cy="11.5" r="0.6"/><circle cx="17.4" cy="10.0" r="0.4"/><circle cx="12.7" cy="14.2" r="0.6"/><circle cx="15.2" cy="8.5" r="1.0"/><circle cx="7.6" cy="8.5" r="0.6"/><circle cx="9.7" cy="8.6" r="0.4"/><circle cx="5.4" cy="12.2" r="0.7"/><circle cx="12.4" cy="12.3" r="1.0"/><circle cx="7.4" cy="14.1" r="0.5"/><circle cx="3.8" cy="9.4" r="0.5"/><circle cx="4.6" cy="12.0" r="0.9"/><circle cx="7.0" cy="11.0" r="0.5"/><circle cx="10.6" cy="10.6" r="0.9"/><circle cx="14.8" cy="12.5" r="0.7"/><circle cx="14.9" cy="8.7" r="0.8"/><circle cx="11.5" cy="7.8" r="0.4"/><circle cx="12.6" cy="10.3" r="0.5"/><circle cx="12.5" cy="12.2" r="0.9"/><circle cx="9.1" cy="13.0" r="0.4"/><circle cx="15.0" cy="8.8" r="0.9"/><circle cx="13.9" cy="12.4" r="0.6"/><circle cx="12.1" cy="13.6" r="0.5"/><circle cx="8.7" cy="10.4" r="0.5"/><circle cx="5.6" cy="11.3" r="0.5"/><circle cx="5.2" cy="10.5" r="0.6"/><circle cx="9.2" cy="12.2" r="0.8"/><circle cx="12.8" cy="14.7" r="0.4"/><circle cx="16.3" cy="9.5" r="0.6"/><circle cx="2.6" cy="10.7" r="0.5"/><circle cx="5.4" cy="14.8" r="0.6"/><circle cx="8.7" cy="7.4" r="0.4"/><circle cx="10.0" cy="14.6" r="0.9"/><circle cx="12.6" cy="7.9" r="1.0"/><circle cx="13.2" cy="14.9" r="0.9"/><circle cx="11.3" cy="10.3" r="1.0"/><circle cx="10.5" cy="7.4" r="0.6"/><circle cx="4.1" cy="9.0" r="0.9"/><circle cx="3.5" cy="9.8" r="1.0"/><circle cx="14.9" cy="8.6" r="1.0"/><circle cx="14.5" cy="14.5" r="0.7"/><circle cx="16.4" cy="15.3" r="0.4"/><circle cx="7.7" cy="10.1" r="0.6"/><circle cx="7.9" cy="10.6" r="0.7"/><circle cx="16.6" cy="8.1" r="0.6"/><circle cx="6.0" cy="15.1" r="0.5"/><circle cx="13.3" cy="10.2" r="0.7"/><circle cx="10.8" cy="12.1" r="0.4"/><circle cx="16.2" cy="12.0" r="0.6"/><circle cx="18.2" cy="11.8" r="0.4"/><circle cx="10.1" cy="9.6" r="0.7"/><circle cx="9.6" cy="7.4" r="1.0"/><circle cx="6.5" cy="13.3" r="0.6"/><circle cx="8.0" cy="16.0" r="0.7"/><circle cx="9.6" cy="10.2" r="0.9"/><circle cx="15.0" cy="11.5" r="0.8"/><circle cx="11.9" cy="12.8" r="0.6"/><circle cx="14.1" cy="15.9" r="0.7"/><circle cx="7.0" cy="7.6" r="0.4"/><circle cx="12.4" cy="12.5" r="0.7"/><circle cx="14.4" cy="8.3" r="0.7"/><circle cx="14.4" cy="9.6" r="0.5"/><circle cx="10.1" cy="11.4" r="0.5"/><circle cx="14.6" cy="12.4" r="0.4"/><circle cx="7.8" cy="11.6" r="0.8"/><circle cx="13.4" cy="9.4" r="0.5"/><circle cx="7.3" cy="8.2" r="0.9"/><circle cx="4.5" cy="10.7" r="0.9"/><circle cx="7.1" cy="7.6" r="0.6"/><circle cx="12.1" cy="8.1" r="0.7"/><circle cx="17.2" cy="12.2" r="0.6"/><circle cx="5.8" cy="9.9" r="0.7"/><circle cx="14.0" cy="12.7" r="0.8"/><circle cx="7.3" cy="7.5" r="0.9"/><circle cx="9.5" cy="15.3" r="0.7"/><circle cx="12.9" cy="9.0" r="1.0"/><circle cx="5.4" cy="12.3" r="0.7"/><circle cx="5.4" cy="15.9" r="0.4"/><circle cx="9.0" cy="12.8" r="0.8"/><circle cx="13.0" cy="13.6" r="0.7"/><circle cx="4.7" cy="9.4" r="0.7"/><circle cx="9.5" cy="14.9" r="0.9"/><circle cx="11.2" cy="12.5" r="0.9"/><circle cx="7.7" cy="12.2" r="0.5"/><circle cx="17.0" cy="9.2" r="0.4"/><circle cx="9.1" cy="9.9" r="0.7"/><circle cx="9.4" cy="11.3" r="1.0"/><circle cx="9.3" cy="13.6" r="0.9"/><circle cx="12.3" cy="12.6" r="0.8"/><circle cx="2.6" cy="12.9" r="0.9"/><circle cx="11.5" cy="13.0" r="0.8"/><circle cx="6.1" cy="12.5" r="1.0"/><circle cx="12.9" cy="15.9" r="0.4"/><circle cx="18.8" cy="9.7" r="0.8"/><circle cx="7.7" cy="15.8" r="0.9"/><circle cx="11.5" cy="11.0" r="0.7"/><circle cx="15.2" cy="14.8" r="1.0"/></g><path d="M18 20.5h3.500M19.750 18.750v3.500" stroke="#222" stroke-width=".8"/></svg>
<svg class="a" style="left:903.3px;top:117.2px;background:#fff" width="23.2" height="23.2" viewBox="0 0 23 23"><g fill="#000" fill-opacity="0.47"><circle cx="13.8" cy="9.1" r="0.6"/><circle cx="9.6" cy="12.9" r="0.7"/><circle cx="11.3" cy="8.1" r="0.5"/><circle cx="8.6" cy="7.0" r="0.5"/><circle cx="12.9" cy="12.0" r="0.4"/><circle cx="13.8" cy="7.9" r="0.6"/><circle cx="7.6" cy="13.3" r="0.4"/><circle cx="17.5" cy="10.4" r="0.4"/><circle cx="9.1" cy="7.3" r="0.6"/><circle cx="11.8" cy="7.1" r="0.7"/><circle cx="16.3" cy="10.4" r="0.6"/><circle cx="7.2" cy="13.3" r="0.5"/><circle cx="8.0" cy="8.6" r="0.5"/><circle cx="15.3" cy="7.3" r="0.6"/><circle cx="13.9" cy="8.4" r="0.6"/><circle cx="11.0" cy="13.8" r="0.4"/><circle cx="13.4" cy="6.4" r="0.5"/><circle cx="8.9" cy="12.2" r="0.4"/><circle cx="5.8" cy="7.4" r="0.3"/><circle cx="10.8" cy="15.4" r="0.4"/><circle cx="14.6" cy="8.9" r="0.5"/><circle cx="12.4" cy="13.6" r="0.5"/><circle cx="9.7" cy="15.2" r="0.3"/><circle cx="6.1" cy="7.6" r="0.5"/><circle cx="12.1" cy="12.6" r="0.3"/><circle cx="12.7" cy="7.3" r="0.3"/><circle cx="4.7" cy="12.1" r="0.5"/><circle cx="16.4" cy="11.7" r="0.5"/><circle cx="16.0" cy="10.5" r="0.8"/><circle cx="15.4" cy="8.2" r="0.4"/><circle cx="11.9" cy="9.6" r="0.6"/><circle cx="13.1" cy="11.9" r="0.5"/><circle cx="15.7" cy="15.1" r="0.6"/><circle cx="17.6" cy="8.1" r="0.7"/><circle cx="7.4" cy="8.3" r="0.7"/><circle cx="9.4" cy="9.3" r="0.6"/><circle cx="5.8" cy="12.9" r="0.7"/><circle cx="8.6" cy="7.5" r="0.7"/><circle cx="12.2" cy="9.6" r="0.4"/><circle cx="14.3" cy="11.6" r="0.8"/><circle cx="8.9" cy="14.1" r="0.5"/><circle cx="6.9" cy="10.0" r="0.7"/><circle cx="7.2" cy="15.0" r="0.7"/><circle cx="17.3" cy="11.0" r="0.3"/><circle cx="12.7" cy="10.1" r="0.4"/><circle cx="11.8" cy="7.2" r="0.6"/><circle cx="5.8" cy="12.9" r="0.4"/><circle cx="6.8" cy="11.6" r="0.6"/><circle cx="13.5" cy="12.2" r="0.4"/><circle cx="4.7" cy="10.2" r="0.3"/><circle cx="18.7" cy="10.6" r="0.5"/><circle cx="15.2" cy="14.8" r="0.8"/><circle cx="14.2" cy="14.9" r="0.7"/><circle cx="14.6" cy="10.1" r="0.4"/><circle cx="13.1" cy="13.1" r="0.8"/><circle cx="15.9" cy="9.2" r="0.4"/><circle cx="8.5" cy="13.0" r="0.6"/><circle cx="9.6" cy="6.7" r="0.5"/><circle cx="5.4" cy="11.9" r="0.5"/><circle cx="4.2" cy="12.2" r="0.7"/><circle cx="8.0" cy="14.3" r="0.4"/><circle cx="16.1" cy="11.9" r="0.5"/><circle cx="13.3" cy="11.3" r="0.5"/><circle cx="18.3" cy="9.4" r="0.3"/><circle cx="8.9" cy="13.8" r="0.5"/><circle cx="15.3" cy="13.9" r="0.7"/><circle cx="8.4" cy="12.4" r="0.4"/><circle cx="18.4" cy="11.4" r="0.4"/><circle cx="9.8" cy="6.6" r="0.3"/><circle cx="12.8" cy="13.6" r="0.7"/><circle cx="10.6" cy="8.3" r="0.5"/><circle cx="7.4" cy="13.7" r="0.7"/><circle cx="10.4" cy="15.5" r="0.8"/><circle cx="4.3" cy="8.1" r="0.8"/><circle cx="15.0" cy="15.4" r="0.4"/><circle cx="12.0" cy="9.4" r="0.5"/><circle cx="3.7" cy="12.6" r="0.6"/><circle cx="13.3" cy="15.5" r="0.7"/><circle cx="9.1" cy="10.9" r="0.4"/><circle cx="9.6" cy="14.1" r="0.8"/><circle cx="4.6" cy="8.5" r="0.3"/><circle cx="11.2" cy="15.3" r="0.5"/><circle cx="11.3" cy="12.2" r="0.3"/><circle cx="5.6" cy="12.9" r="0.5"/><circle cx="6.8" cy="9.9" r="0.3"/><circle cx="8.7" cy="8.4" r="0.5"/><circle cx="7.8" cy="12.8" r="0.3"/><circle cx="9.7" cy="13.6" r="0.4"/><circle cx="16.8" cy="11.6" r="0.3"/><circle cx="14.7" cy="8.9" r="0.5"/><circle cx="9.7" cy="10.9" r="0.4"/><circle cx="12.4" cy="7.4" r="0.5"/><circle cx="6.9" cy="14.6" r="0.6"/><circle cx="13.0" cy="6.6" r="0.7"/><circle cx="9.9" cy="6.9" r="0.5"/><circle cx="4.7" cy="10.2" r="0.6"/><circle cx="14.3" cy="6.8" r="0.3"/><circle cx="11.1" cy="7.1" r="0.6"/><circle cx="12.6" cy="10.4" r="0.5"/><circle cx="5.1" cy="14.4" r="0.4"/><circle cx="8.0" cy="10.3" r="0.7"/><circle cx="3.7" cy="11.3" r="0.5"/><circle cx="11.5" cy="10.7" r="0.4"/><circle cx="10.2" cy="6.3" r="0.7"/><circle cx="10.6" cy="12.4" r="0.7"/><circle cx="10.8" cy="9.8" r="0.8"/><circle cx="9.5" cy="10.8" r="0.5"/><circle cx="9.6" cy="12.4" r="0.7"/><circle cx="13.7" cy="10.3" r="0.5"/><circle cx="10.0" cy="15.1" r="0.4"/><circle cx="8.3" cy="13.8" r="0.5"/><circle cx="5.0" cy="12.5" r="0.8"/><circle cx="18.4" cy="9.0" r="0.7"/><circle cx="11.6" cy="13.4" r="0.5"/><circle cx="6.9" cy="7.9" r="0.5"/><circle cx="15.7" cy="10.9" r="0.3"/><circle cx="14.3" cy="12.2" r="0.7"/><circle cx="11.9" cy="10.1" r="0.4"/><circle cx="11.4" cy="15.4" r="0.7"/><circle cx="10.8" cy="12.6" r="0.8"/><circle cx="18.1" cy="10.2" r="0.5"/><circle cx="10.8" cy="6.6" r="0.6"/><circle cx="10.2" cy="14.6" r="0.6"/><circle cx="7.9" cy="14.6" r="0.4"/><circle cx="14.8" cy="10.6" r="0.4"/><circle cx="19.0" cy="9.8" r="0.8"/><circle cx="15.2" cy="7.1" r="0.7"/><circle cx="8.9" cy="10.4" r="0.7"/><circle cx="15.0" cy="7.1" r="0.3"/><circle cx="17.7" cy="12.6" r="0.5"/><circle cx="17.6" cy="7.9" r="0.5"/><circle cx="7.9" cy="7.4" r="0.6"/><circle cx="6.4" cy="14.0" r="0.3"/><circle cx="16.9" cy="8.5" r="0.7"/><circle cx="7.3" cy="11.5" r="0.5"/><circle cx="8.3" cy="7.6" r="0.4"/><circle cx="16.4" cy="11.1" r="0.4"/><circle cx="11.6" cy="13.3" r="0.5"/><circle cx="8.3" cy="6.5" r="0.6"/><circle cx="18.9" cy="11.6" r="0.6"/><circle cx="10.2" cy="7.1" r="0.5"/><circle cx="9.8" cy="12.1" r="0.6"/><circle cx="17.6" cy="12.4" r="0.8"/><circle cx="7.7" cy="7.6" r="0.7"/><circle cx="18.4" cy="9.9" r="0.8"/><circle cx="10.0" cy="11.2" r="0.6"/><circle cx="5.9" cy="7.5" r="0.6"/><circle cx="10.6" cy="11.3" r="0.7"/><circle cx="5.0" cy="7.5" r="0.6"/><circle cx="15.5" cy="7.5" r="0.8"/><circle cx="3.2" cy="12.1" r="0.5"/><circle cx="15.8" cy="11.2" r="0.5"/><circle cx="16.3" cy="10.8" r="0.4"/><circle cx="10.0" cy="9.5" r="0.5"/><circle cx="8.6" cy="12.1" r="0.6"/><circle cx="4.3" cy="13.1" r="0.5"/><circle cx="14.7" cy="10.7" r="0.6"/><circle cx="11.2" cy="11.6" r="0.5"/><circle cx="14.6" cy="9.4" r="0.5"/><circle cx="6.7" cy="10.6" r="0.6"/><circle cx="15.6" cy="12.2" r="0.4"/><circle cx="14.0" cy="7.0" r="0.7"/><circle cx="4.5" cy="8.4" r="0.7"/><circle cx="13.9" cy="11.6" r="0.7"/><circle cx="15.5" cy="6.8" r="0.7"/><circle cx="14.5" cy="14.2" r="0.6"/><circle cx="8.5" cy="9.9" r="0.8"/><circle cx="6.6" cy="10.8" r="0.8"/><circle cx="9.3" cy="11.9" r="0.6"/><circle cx="10.8" cy="13.3" r="0.5"/></g><path d="M18 20.5h3.500M19.750 18.750v3.500" stroke="#222" stroke-width=".8"/></svg>
<svg class="a" style="left:927.5px;top:117.2px;background:#fff" width="23.2" height="23.2" viewBox="0 0 23 23"><g fill="#000" fill-opacity="0.51"><circle cx="10.3" cy="7.8" r="0.4"/><circle cx="12.2" cy="6.0" r="0.5"/><circle cx="11.7" cy="8.9" r="0.4"/><circle cx="12.0" cy="14.7" r="0.2"/><circle cx="12.2" cy="16.1" r="0.2"/><circle cx="10.8" cy="4.6" r="0.2"/><circle cx="11.1" cy="8.9" r="0.5"/><circle cx="11.4" cy="5.2" r="0.3"/><circle cx="12.2" cy="12.3" r="0.2"/><circle cx="9.6" cy="9.6" r="0.4"/><circle cx="11.9" cy="16.1" r="0.4"/><circle cx="10.4" cy="17.9" r="0.4"/><circle cx="10.1" cy="14.4" r="0.3"/><circle cx="10.7" cy="19.3" r="0.3"/><circle cx="11.1" cy="5.6" r="0.3"/><circle cx="12.5" cy="11.1" r="0.4"/><circle cx="12.1" cy="10.2" r="0.2"/><circle cx="11.2" cy="12.7" r="0.4"/><circle cx="9.9" cy="4.9" r="0.3"/><circle cx="11.1" cy="15.2" r="0.2"/><circle cx="12.0" cy="12.1" r="0.3"/><circle cx="10.0" cy="17.5" r="0.3"/><circle cx="11.5" cy="5.2" r="0.2"/><circle cx="12.2" cy="12.3" r="0.5"/><circle cx="12.2" cy="13.3" r="0.3"/><circle cx="10.5" cy="3.4" r="0.4"/><circle cx="11.0" cy="14.6" r="0.5"/><circle cx="12.2" cy="6.6" r="0.4"/></g><path d="M23 17v6h-6z" fill="#e5525e"/><path d="M18 20.5h3.500M19.750 18.750v3.500" stroke="#222" stroke-width=".8"/></svg>
<svg class="a" style="left:951.7px;top:117.2px;background:#fff" width="23.2" height="23.2" viewBox="0 0 23 23"><ellipse cx="6" cy="5" rx="2.2" ry=".8" transform="rotate(50 6 5)" fill="#8a8a8a"/><ellipse cx="10" cy="8" rx="2.2" ry=".8" transform="rotate(-30 10 8)" fill="#8a8a8a"/><ellipse cx="15" cy="6" rx="2.2" ry=".8" transform="rotate(60 15 6)" fill="#8a8a8a"/><ellipse cx="8" cy="12" rx="2.2" ry=".8" transform="rotate(10 8 12)" fill="#8a8a8a"/><ellipse cx="13" cy="12" rx="2.2" ry=".8" transform="rotate(-20 13 12)" fill="#8a8a8a"/><ellipse cx="18" cy="11" rx="2.2" ry=".8" transform="rotate(70 18 11)" fill="#8a8a8a"/><ellipse cx="6" cy="17" rx="2.2" ry=".8" transform="rotate(30 6 17)" fill="#8a8a8a"/><ellipse cx="11" cy="17" rx="2.2" ry=".8" transform="rotate(-40 11 17)" fill="#8a8a8a"/><ellipse cx="16" cy="16" rx="2.2" ry=".8" transform="rotate(20 16 16)" fill="#8a8a8a"/></svg>
<svg class="a" style="left:975.9px;top:117.2px;background:#fff" width="23.2" height="23.2" viewBox="0 0 23 23"><path d="M3 6l3 4M6 4l1 6M7 10h11l2 3v6M8 10l-2 9M11 15h6M16 15l1 5M10 15l-1 5" stroke="#999" stroke-width=".7" fill="none"/></svg>
<svg class="a" style="left:806.5px;top:141.4px;background:#fff" width="23.2" height="23.2" viewBox="0 0 23 23"><g filter="url(#b1)"><g fill="#000" fill-opacity="0.42"><circle cx="14.6" cy="12.5" r="1.5"/><circle cx="14.0" cy="12.8" r="0.6"/><circle cx="13.5" cy="7.8" r="0.7"/><circle cx="7.8" cy="13.8" r="1.0"/><circle cx="5.2" cy="6.7" r="0.7"/><circle cx="8.1" cy="10.6" r="1.0"/><circle cx="11.5" cy="7.2" r="1.4"/><circle cx="10.2" cy="16.0" r="1.4"/><circle cx="16.0" cy="11.1" r="1.1"/><circle cx="8.3" cy="3.4" r="1.3"/><circle cx="10.6" cy="14.5" r="1.1"/><circle cx="8.8" cy="16.8" r="0.7"/><circle cx="8.2" cy="6.2" r="0.6"/><circle cx="15.6" cy="16.3" r="1.4"/><circle cx="13.7" cy="7.6" r="1.6"/><circle cx="13.3" cy="17.0" r="1.5"/><circle cx="10.1" cy="11.5" r="0.7"/><circle cx="16.2" cy="14.6" r="1.2"/><circle cx="7.3" cy="11.4" r="1.2"/><circle cx="11.9" cy="13.2" r="1.2"/><circle cx="5.6" cy="5.4" r="1.4"/><circle cx="12.9" cy="14.3" r="0.7"/><circle cx="8.7" cy="11.1" r="1.5"/><circle cx="7.0" cy="4.5" r="1.1"/><circle cx="16.2" cy="7.2" r="1.4"/><circle cx="11.3" cy="7.5" r="0.9"/><circle cx="16.6" cy="13.4" r="1.1"/><circle cx="14.3" cy="10.6" r="1.0"/><circle cx="15.3" cy="5.1" r="1.4"/><circle cx="15.7" cy="5.8" r="0.9"/><circle cx="8.5" cy="9.6" r="1.3"/><circle cx="15.4" cy="9.3" r="0.7"/><circle cx="8.1" cy="10.1" r="1.1"/><circle cx="14.5" cy="13.5" r="1.4"/><circle cx="9.5" cy="3.6" r="1.1"/><circle cx="8.3" cy="11.7" r="1.4"/><circle cx="5.4" cy="8.8" r="0.7"/><circle cx="8.1" cy="11.5" r="0.7"/><circle cx="14.6" cy="13.5" r="0.7"/><circle cx="12.9" cy="5.5" r="1.5"/><circle cx="7.0" cy="9.9" r="0.9"/><circle cx="13.3" cy="5.8" r="1.2"/><circle cx="8.8" cy="9.7" r="0.8"/><circle cx="3.3" cy="14.1" r="1.5"/><circle cx="6.6" cy="8.8" r="0.6"/><circle cx="5.2" cy="9.2" r="1.5"/><circle cx="11.0" cy="14.5" r="0.6"/><circle cx="17.1" cy="12.3" r="1.5"/><circle cx="10.6" cy="11.8" r="1.2"/><circle cx="10.1" cy="17.3" r="1.5"/><circle cx="9.9" cy="6.8" r="1.2"/><circle cx="8.3" cy="17.8" r="0.9"/><circle cx="14.5" cy="6.2" r="1.5"/><circle cx="5.6" cy="17.4" r="1.2"/><circle cx="9.7" cy="17.4" r="0.9"/><circle cx="11.2" cy="12.0" r="1.2"/><circle cx="10.1" cy="13.5" r="1.4"/><circle cx="14.4" cy="16.4" r="0.9"/><circle cx="5.0" cy="16.8" r="1.4"/><circle cx="14.0" cy="4.2" r="1.2"/><circle cx="15.8" cy="8.5" r="1.2"/><circle cx="7.8" cy="15.4" r="1.2"/><circle cx="10.1" cy="17.4" r="1.5"/><circle cx="9.3" cy="7.3" r="0.6"/><circle cx="6.5" cy="14.9" r="1.4"/><circle cx="4.5" cy="9.3" r="1.2"/><circle cx="3.8" cy="8.8" r="1.2"/><circle cx="6.3" cy="9.7" r="0.7"/><circle cx="3.0" cy="13.8" r="1.5"/><circle cx="8.4" cy="16.8" r="1.1"/><circle cx="6.8" cy="12.0" r="1.4"/><circle cx="13.3" cy="13.0" r="0.9"/><circle cx="11.0" cy="14.4" r="0.7"/><circle cx="6.7" cy="10.5" r="1.2"/><circle cx="4.9" cy="7.3" r="1.1"/><circle cx="6.7" cy="8.2" r="1.1"/><circle cx="8.6" cy="7.6" r="1.3"/><circle cx="3.2" cy="7.0" r="1.2"/><circle cx="3.3" cy="8.9" r="0.9"/><circle cx="6.3" cy="14.8" r="1.3"/><circle cx="9.3" cy="7.6" r="1.6"/><circle cx="15.6" cy="10.4" r="1.6"/><circle cx="6.4" cy="7.6" r="0.7"/><circle cx="16.1" cy="11.7" r="1.3"/><circle cx="4.7" cy="6.3" r="1.0"/><circle cx="9.7" cy="4.8" r="1.2"/><circle cx="3.8" cy="9.0" r="1.2"/><circle cx="15.5" cy="14.5" r="1.3"/><circle cx="2.9" cy="14.4" r="1.1"/><circle cx="12.9" cy="15.9" r="1.0"/><circle cx="13.8" cy="17.5" r="0.8"/><circle cx="9.2" cy="7.8" r="1.1"/><circle cx="12.4" cy="11.0" r="1.5"/><circle cx="17.9" cy="11.3" r="1.5"/><circle cx="3.9" cy="13.0" r="1.1"/><circle cx="12.5" cy="15.1" r="1.0"/><circle cx="11.8" cy="9.0" r="1.1"/><circle cx="4.1" cy="12.1" r="1.4"/><circle cx="6.3" cy="8.3" r="1.6"/><circle cx="6.6" cy="8.6" r="1.1"/><circle cx="11.2" cy="9.7" r="1.2"/><circle cx="5.7" cy="11.3" r="0.8"/><circle cx="10.6" cy="16.3" r="1.0"/><circle cx="6.7" cy="8.5" r="1.2"/><circle cx="3.0" cy="12.2" r="1.4"/><circle cx="10.6" cy="18.9" r="1.1"/><circle cx="7.9" cy="14.5" r="1.3"/><circle cx="3.9" cy="13.6" r="0.9"/><circle cx="12.6" cy="7.8" r="1.5"/><circle cx="5.3" cy="12.9" r="1.2"/></g></g><circle cx="12" cy="11" r="3.5" fill="#fff" fill-opacity=".6" filter="url(#b1)"/><path d="M18 20.5h3.500" stroke="#222" stroke-width=".8"/></svg>
<svg class="a" style="left:830.7px;top:141.4px;background:#fff" width="23.2" height="23.2" viewBox="0 0 23 23"><g filter="url(#b1)"><g fill="#000" fill-opacity="0.30"><circle cx="5.1" cy="8.4" r="0.8"/><circle cx="17.6" cy="7.4" r="0.5"/><circle cx="12.0" cy="8.9" r="0.4"/><circle cx="12.8" cy="6.1" r="0.4"/><circle cx="13.5" cy="12.8" r="1.1"/><circle cx="14.2" cy="9.3" r="0.4"/><circle cx="15.2" cy="10.1" r="0.8"/><circle cx="17.3" cy="8.1" r="1.1"/><circle cx="4.6" cy="5.9" r="0.9"/><circle cx="11.3" cy="12.7" r="0.8"/><circle cx="16.9" cy="12.7" r="0.8"/><circle cx="12.7" cy="13.0" r="1.0"/><circle cx="10.1" cy="13.5" r="0.5"/><circle cx="11.2" cy="11.6" r="0.8"/><circle cx="9.5" cy="6.4" r="1.0"/><circle cx="5.1" cy="6.3" r="1.2"/><circle cx="7.0" cy="14.2" r="0.8"/><circle cx="7.6" cy="8.8" r="0.5"/><circle cx="9.4" cy="7.5" r="0.4"/><circle cx="16.1" cy="11.2" r="0.6"/><circle cx="10.4" cy="14.2" r="0.8"/><circle cx="15.0" cy="12.9" r="1.2"/><circle cx="7.2" cy="6.2" r="0.8"/><circle cx="8.9" cy="3.7" r="1.0"/><circle cx="11.1" cy="14.3" r="0.5"/><circle cx="14.9" cy="12.1" r="0.5"/><circle cx="7.0" cy="7.8" r="1.2"/><circle cx="4.4" cy="11.2" r="1.2"/><circle cx="4.3" cy="10.5" r="0.8"/><circle cx="8.7" cy="10.3" r="0.9"/><circle cx="16.8" cy="6.6" r="0.7"/><circle cx="6.3" cy="8.4" r="0.7"/><circle cx="11.1" cy="8.5" r="0.8"/><circle cx="7.9" cy="8.8" r="1.0"/><circle cx="10.9" cy="12.8" r="0.6"/><circle cx="6.7" cy="6.7" r="0.9"/><circle cx="4.7" cy="11.4" r="0.8"/><circle cx="15.4" cy="11.6" r="0.6"/><circle cx="8.7" cy="14.6" r="0.8"/><circle cx="10.8" cy="6.6" r="0.9"/><circle cx="13.8" cy="10.9" r="0.5"/><circle cx="18.5" cy="9.9" r="1.2"/><circle cx="10.4" cy="9.5" r="1.0"/><circle cx="10.1" cy="7.9" r="1.0"/><circle cx="14.5" cy="10.2" r="1.0"/><circle cx="11.4" cy="6.1" r="0.8"/><circle cx="12.9" cy="4.6" r="0.8"/><circle cx="11.8" cy="10.4" r="0.6"/><circle cx="4.9" cy="8.3" r="0.8"/><circle cx="7.1" cy="5.6" r="0.9"/></g><g fill="#000" fill-opacity="0.42"><circle cx="6.6" cy="7.5" r="0.9"/><circle cx="12.2" cy="3.0" r="1.1"/><circle cx="9.3" cy="3.7" r="0.9"/><circle cx="9.0" cy="6.7" r="1.0"/><circle cx="9.0" cy="8.1" r="0.9"/><circle cx="7.8" cy="5.0" r="0.7"/><circle cx="8.2" cy="8.2" r="1.1"/><circle cx="8.5" cy="7.2" r="0.8"/><circle cx="7.1" cy="6.9" r="1.0"/><circle cx="9.3" cy="3.3" r="1.0"/><circle cx="10.6" cy="5.7" r="0.8"/><circle cx="8.2" cy="4.9" r="1.1"/></g></g><path d="M18 20.5h3.500M19.750 18.750v3.500" stroke="#222" stroke-width=".8"/></svg>
<svg class="a" style="left:854.9px;top:141.4px;background:#fff" width="23.2" height="23.2" viewBox="0 0 23 23"><g fill="#000" fill-opacity="0.30"><circle cx="5.2" cy="13.3" r="0.4"/><circle cx="10.4" cy="10.7" r="0.3"/><circle cx="2.3" cy="11.3" r="0.3"/><circle cx="18.3" cy="4.9" r="0.5"/><circle cx="10.8" cy="11.2" r="0.6"/><circle cx="15.5" cy="12.0" r="0.6"/><circle cx="7.2" cy="2.8" r="0.5"/><circle cx="13.8" cy="15.8" r="0.2"/><circle cx="6.4" cy="14.4" r="0.5"/><circle cx="9.2" cy="17.1" r="0.3"/><circle cx="10.9" cy="12.2" r="0.4"/><circle cx="4.5" cy="6.1" r="0.4"/><circle cx="18.1" cy="7.0" r="0.4"/><circle cx="13.7" cy="7.3" r="0.3"/><circle cx="4.4" cy="7.8" r="0.6"/><circle cx="10.2" cy="8.2" r="0.6"/><circle cx="7.0" cy="10.8" r="0.5"/><circle cx="5.2" cy="4.0" r="0.4"/><circle cx="10.8" cy="16.2" r="0.4"/><circle cx="6.9" cy="15.5" r="0.3"/><circle cx="10.9" cy="13.1" r="0.2"/><circle cx="3.4" cy="8.8" r="0.4"/><circle cx="16.7" cy="6.0" r="0.5"/><circle cx="9.1" cy="18.3" r="0.3"/><circle cx="13.5" cy="6.3" r="0.6"/><circle cx="9.4" cy="6.5" r="0.5"/><circle cx="14.1" cy="14.6" r="0.4"/><circle cx="8.3" cy="14.7" r="0.3"/><circle cx="8.8" cy="11.6" r="0.5"/><circle cx="6.4" cy="16.0" r="0.4"/><circle cx="19.3" cy="8.7" r="0.5"/><circle cx="15.7" cy="2.8" r="0.6"/><circle cx="5.1" cy="13.6" r="0.2"/><circle cx="7.6" cy="13.9" r="0.4"/><circle cx="18.8" cy="10.4" r="0.2"/><circle cx="5.5" cy="12.9" r="0.5"/><circle cx="8.7" cy="7.4" r="0.5"/><circle cx="11.7" cy="17.0" r="0.4"/><circle cx="16.8" cy="8.3" r="0.3"/><circle cx="7.8" cy="18.2" r="0.3"/><circle cx="11.3" cy="16.6" r="0.5"/><circle cx="13.4" cy="9.1" r="0.3"/><circle cx="9.9" cy="3.8" r="0.5"/><circle cx="9.7" cy="7.6" r="0.2"/><circle cx="13.2" cy="14.5" r="0.3"/></g><path d="M18 20.5h3.500M19.750 18.750v3.500" stroke="#222" stroke-width=".8"/></svg>
<svg class="a" style="left:879.1px;top:141.4px;background:#fff" width="23.2" height="23.2" viewBox="0 0 23 23"><g filter="url(#b1)"><g fill="#000" fill-opacity="0.38"><circle cx="11.4" cy="12.2" r="0.5"/><circle cx="10.3" cy="10.4" r="0.6"/><circle cx="12.5" cy="13.3" r="0.5"/><circle cx="12.1" cy="13.2" r="0.6"/><circle cx="11.7" cy="8.1" r="0.8"/><circle cx="11.4" cy="11.4" r="0.9"/><circle cx="10.4" cy="14.0" r="0.6"/><circle cx="10.6" cy="12.3" r="0.6"/><circle cx="13.1" cy="13.6" r="1.0"/><circle cx="12.4" cy="11.0" r="0.9"/><circle cx="10.8" cy="9.3" r="0.6"/><circle cx="11.0" cy="8.9" r="0.8"/><circle cx="12.1" cy="11.5" r="0.6"/><circle cx="11.6" cy="8.2" r="0.6"/><circle cx="11.7" cy="8.0" r="0.6"/><circle cx="11.5" cy="11.1" r="0.5"/><circle cx="13.4" cy="12.5" r="0.9"/><circle cx="9.8" cy="9.4" r="0.8"/><circle cx="11.4" cy="9.9" r="0.7"/><circle cx="10.9" cy="9.4" r="0.8"/><circle cx="10.9" cy="14.0" r="0.6"/><circle cx="10.7" cy="11.2" r="0.8"/><circle cx="12.0" cy="11.6" r="0.9"/><circle cx="11.9" cy="13.5" r="1.0"/><circle cx="10.6" cy="8.4" r="0.9"/></g></g><path d="M23 17v6h-6z" fill="#e5525e"/><path d="M18 20.5h3.500M19.750 18.750v3.500" stroke="#222" stroke-width=".8"/></svg>
<svg class="a" style="left:903.3px;top:141.4px;background:#fff" width="23.2" height="23.2" viewBox="0 0 23 23"><g fill="#000" fill-opacity="0.72"><circle cx="11.5" cy="10.4" r="0.6"/><circle cx="11.0" cy="10.3" r="0.6"/><circle cx="10.9" cy="14.8" r="0.7"/><circle cx="11.4" cy="8.3" r="0.7"/><circle cx="11.6" cy="13.1" r="0.8"/><circle cx="10.6" cy="8.7" r="0.6"/><circle cx="10.7" cy="12.0" r="0.5"/><circle cx="11.2" cy="7.5" r="0.4"/><circle cx="10.3" cy="7.3" r="0.7"/><circle cx="11.5" cy="17.7" r="0.5"/><circle cx="10.4" cy="10.8" r="0.5"/><circle cx="11.0" cy="12.9" r="0.5"/><circle cx="11.7" cy="12.1" r="0.7"/><circle cx="11.0" cy="18.4" r="0.6"/></g><path d="M23 17v6h-6z" fill="#e5525e"/><path d="M18 20.5h3.500" stroke="#222" stroke-width=".8"/></svg>
<svg class="a" style="left:927.5px;top:141.4px;background:#fff" width="23.2" height="23.2" viewBox="0 0 23 23"><g filter="url(#b1)"><g fill="#000" fill-opacity="0.68"><circle cx="9.8" cy="13.5" r="1.0"/><circle cx="10.3" cy="12.4" r="1.0"/><circle cx="11.4" cy="12.4" r="1.0"/><circle cx="11.5" cy="5.6" r="0.7"/><circle cx="11.5" cy="8.5" r="1.1"/><circle cx="10.7" cy="7.1" r="0.6"/><circle cx="10.7" cy="15.9" r="0.7"/><circle cx="12.3" cy="12.0" r="1.1"/><circle cx="11.1" cy="8.9" r="0.6"/><circle cx="12.2" cy="4.4" r="1.0"/><circle cx="11.8" cy="17.4" r="0.6"/><circle cx="11.8" cy="14.1" r="1.2"/><circle cx="11.9" cy="11.5" r="1.0"/><circle cx="11.5" cy="7.8" r="0.6"/><circle cx="12.7" cy="2.6" r="1.1"/><circle cx="11.2" cy="10.3" r="1.0"/><circle cx="10.7" cy="4.9" r="1.1"/><circle cx="9.4" cy="10.8" r="0.9"/><circle cx="10.5" cy="12.9" r="1.1"/><circle cx="10.0" cy="6.0" r="0.8"/><circle cx="12.7" cy="6.0" r="0.8"/><circle cx="12.5" cy="12.0" r="1.0"/><circle cx="12.4" cy="9.7" r="1.0"/><circle cx="11.5" cy="8.6" r="1.0"/><circle cx="11.0" cy="12.1" r="0.8"/><circle cx="10.7" cy="16.0" r="0.9"/><circle cx="11.4" cy="12.2" r="1.1"/><circle cx="11.5" cy="3.4" r="1.1"/><circle cx="12.1" cy="12.3" r="0.9"/><circle cx="11.1" cy="18.1" r="0.7"/><circle cx="12.3" cy="11.4" r="0.6"/><circle cx="12.5" cy="12.0" r="1.0"/><circle cx="11.2" cy="10.6" r="0.9"/><circle cx="10.9" cy="10.5" r="0.7"/><circle cx="12.0" cy="14.8" r="0.8"/><circle cx="10.5" cy="7.9" r="0.8"/><circle cx="11.0" cy="9.1" r="1.0"/><circle cx="11.8" cy="16.2" r="1.0"/><circle cx="11.8" cy="6.3" r="1.1"/><circle cx="12.8" cy="10.4" r="0.8"/><circle cx="11.4" cy="16.6" r="0.7"/><circle cx="11.6" cy="12.6" r="1.0"/><circle cx="10.2" cy="16.9" r="1.1"/><circle cx="10.8" cy="10.3" r="0.8"/><circle cx="11.8" cy="11.6" r="1.1"/></g></g><path d="M23 17v6h-6z" fill="#e5525e"/></svg>
<svg class="a" style="left:951.7px;top:141.4px;background:#fff" width="23.2" height="23.2" viewBox="0 0 23 23"><path d="M4 7l14 12M6 5l14 12M8 3.5l13 11M3 10l13 11M10 2.5l11 9" stroke="#333" stroke-width=".8"/><path d="M18 20.5h3.500M19.750 18.750v3.500" stroke="#222" stroke-width=".8"/></svg>
<svg class="a" style="left:975.9px;top:141.4px;background:#fff" width="23.2" height="23.2" viewBox="0 0 23 23"><circle cx="12" cy="13" r=".4" fill="#aaa"/></svg>
<svg class="a" style="left:806.5px;top:165.6px;background:#fff" width="23.2" height="23.2" viewBox="0 0 23 23"><g fill="#000" fill-opacity="0.51"><circle cx="9.8" cy="10.3" r="0.9"/><circle cx="5.0" cy="13.0" r="0.6"/><circle cx="11.6" cy="9.8" r="0.6"/><circle cx="9.5" cy="9.6" r="0.9"/><circle cx="6.8" cy="13.2" r="0.3"/><circle cx="11.5" cy="10.5" r="0.8"/><circle cx="18.3" cy="8.0" r="0.6"/><circle cx="15.8" cy="12.4" r="0.6"/><circle cx="11.1" cy="6.5" r="0.6"/><circle cx="11.1" cy="11.2" r="0.3"/><circle cx="7.0" cy="10.9" r="0.9"/><circle cx="16.4" cy="11.3" r="0.4"/><circle cx="17.2" cy="13.4" r="0.4"/><circle cx="5.6" cy="8.1" r="0.5"/><circle cx="8.7" cy="11.1" r="0.7"/><circle cx="6.2" cy="12.4" r="0.8"/><circle cx="13.7" cy="11.2" r="0.5"/><circle cx="15.1" cy="8.6" r="0.4"/><circle cx="9.3" cy="10.1" r="0.6"/><circle cx="12.0" cy="10.6" r="0.6"/><circle cx="7.3" cy="9.6" r="0.7"/><circle cx="7.7" cy="13.6" r="0.3"/><circle cx="12.4" cy="7.7" r="0.4"/><circle cx="8.6" cy="13.4" r="0.4"/><circle cx="12.4" cy="9.1" r="0.5"/><circle cx="14.0" cy="11.2" r="0.9"/><circle cx="11.0" cy="11.4" r="0.6"/><circle cx="8.6" cy="8.9" r="0.4"/><circle cx="7.7" cy="8.9" r="0.3"/><circle cx="7.2" cy="5.3" r="0.8"/><circle cx="11.7" cy="8.6" r="0.5"/><circle cx="5.5" cy="8.0" r="0.7"/><circle cx="7.2" cy="9.4" r="0.4"/><circle cx="11.2" cy="10.4" r="0.6"/><circle cx="17.0" cy="12.6" r="0.9"/></g><path d="M23 17v6h-6z" fill="#e5525e"/><path d="M18 20.5h3.500" stroke="#222" stroke-width=".8"/></svg>
<svg class="a" style="left:830.7px;top:165.6px;background:#fff" width="23.2" height="23.2" viewBox="0 0 23 23"><g fill="#000" fill-opacity="0.38"><circle cx="17.2" cy="18.9" r="0.4"/><circle cx="17.4" cy="11.7" r="0.3"/><circle cx="10.6" cy="13.8" r="0.3"/><circle cx="17.8" cy="12.2" r="0.3"/><circle cx="12.5" cy="20.6" r="0.5"/><circle cx="3.0" cy="11.5" r="0.3"/><circle cx="11.6" cy="3.1" r="0.3"/><circle cx="11.2" cy="5.9" r="0.3"/><circle cx="8.7" cy="13.1" r="0.4"/><circle cx="11.4" cy="18.2" r="0.4"/><circle cx="4.1" cy="6.3" r="0.4"/><circle cx="8.6" cy="3.8" r="0.4"/><circle cx="17.9" cy="7.9" r="0.4"/><circle cx="4.9" cy="9.4" r="0.5"/><circle cx="10.2" cy="15.4" r="0.4"/><circle cx="8.5" cy="18.9" r="0.4"/><circle cx="15.8" cy="11.6" r="0.4"/><circle cx="5.3" cy="16.3" r="0.3"/><circle cx="17.5" cy="16.6" r="0.5"/><circle cx="17.7" cy="15.6" r="0.4"/><circle cx="6.4" cy="7.1" r="0.4"/><circle cx="20.4" cy="10.9" r="0.3"/><circle cx="14.5" cy="4.3" r="0.4"/><circle cx="14.0" cy="11.5" r="0.3"/><circle cx="12.5" cy="20.0" r="0.5"/><circle cx="12.5" cy="18.0" r="0.5"/><circle cx="10.2" cy="4.3" r="0.5"/><circle cx="14.0" cy="10.2" r="0.5"/><circle cx="9.6" cy="18.7" r="0.4"/><circle cx="10.1" cy="16.6" r="0.5"/><circle cx="13.9" cy="2.4" r="0.2"/><circle cx="5.8" cy="5.7" r="0.5"/><circle cx="10.7" cy="6.5" r="0.2"/><circle cx="13.7" cy="15.8" r="0.4"/><circle cx="9.9" cy="14.8" r="0.2"/><circle cx="8.1" cy="3.6" r="0.2"/><circle cx="2.1" cy="10.7" r="0.3"/><circle cx="3.1" cy="9.7" r="0.2"/><circle cx="17.3" cy="5.5" r="0.4"/><circle cx="7.8" cy="17.1" r="0.5"/><circle cx="14.0" cy="12.5" r="0.4"/><circle cx="15.0" cy="10.4" r="0.3"/><circle cx="3.3" cy="13.6" r="0.4"/><circle cx="10.3" cy="9.7" r="0.3"/><circle cx="4.6" cy="7.4" r="0.2"/><circle cx="16.0" cy="14.4" r="0.3"/><circle cx="9.5" cy="14.9" r="0.2"/><circle cx="5.8" cy="4.2" r="0.4"/><circle cx="14.5" cy="9.9" r="0.4"/><circle cx="5.7" cy="18.1" r="0.4"/><circle cx="4.6" cy="5.5" r="0.5"/><circle cx="15.6" cy="16.3" r="0.2"/><circle cx="7.3" cy="9.8" r="0.4"/><circle cx="11.0" cy="12.2" r="0.5"/><circle cx="15.0" cy="15.0" r="0.4"/><circle cx="19.3" cy="14.4" r="0.4"/><circle cx="17.0" cy="16.5" r="0.2"/><circle cx="8.7" cy="10.9" r="0.3"/><circle cx="4.8" cy="13.7" r="0.4"/><circle cx="16.4" cy="9.1" r="0.3"/><circle cx="13.6" cy="19.4" r="0.3"/><circle cx="12.5" cy="15.5" r="0.3"/><circle cx="14.7" cy="6.1" r="0.4"/><circle cx="4.4" cy="12.8" r="0.3"/><circle cx="4.7" cy="15.9" r="0.2"/><circle cx="6.9" cy="12.9" r="0.3"/><circle cx="9.3" cy="15.1" r="0.4"/><circle cx="16.0" cy="12.7" r="0.3"/><circle cx="15.1" cy="19.4" r="0.4"/><circle cx="14.1" cy="9.3" r="0.3"/><circle cx="8.9" cy="17.7" r="0.5"/><circle cx="16.0" cy="3.9" r="0.2"/><circle cx="16.9" cy="12.4" r="0.3"/><circle cx="17.1" cy="11.7" r="0.2"/><circle cx="14.6" cy="8.4" r="0.3"/><circle cx="15.5" cy="19.3" r="0.2"/><circle cx="7.4" cy="13.2" r="0.3"/><circle cx="19.5" cy="11.2" r="0.4"/><circle cx="5.7" cy="18.9" r="0.5"/><circle cx="8.5" cy="8.1" r="0.2"/><circle cx="5.1" cy="9.7" r="0.5"/><circle cx="20.1" cy="11.4" r="0.3"/><circle cx="18.9" cy="10.8" r="0.2"/><circle cx="13.9" cy="20.5" r="0.4"/><circle cx="11.0" cy="3.8" r="0.2"/><circle cx="16.3" cy="9.5" r="0.4"/><circle cx="5.1" cy="9.9" r="0.4"/><circle cx="19.1" cy="7.2" r="0.3"/><circle cx="13.9" cy="8.3" r="0.3"/><circle cx="10.6" cy="13.4" r="0.3"/><circle cx="20.8" cy="11.6" r="0.4"/><circle cx="9.2" cy="11.8" r="0.3"/><circle cx="12.2" cy="6.4" r="0.2"/><circle cx="5.0" cy="14.7" r="0.2"/><circle cx="6.4" cy="16.5" r="0.4"/><circle cx="3.6" cy="16.7" r="0.3"/><circle cx="11.5" cy="8.8" r="0.5"/><circle cx="7.7" cy="10.4" r="0.4"/><circle cx="14.0" cy="9.2" r="0.5"/><circle cx="17.0" cy="10.1" r="0.4"/><circle cx="10.2" cy="4.5" r="0.3"/><circle cx="8.2" cy="19.4" r="0.4"/><circle cx="13.8" cy="10.7" r="0.4"/><circle cx="10.3" cy="7.2" r="0.2"/><circle cx="18.1" cy="6.3" r="0.4"/><circle cx="8.4" cy="17.0" r="0.4"/><circle cx="18.2" cy="16.0" r="0.4"/><circle cx="2.5" cy="13.6" r="0.4"/><circle cx="14.6" cy="8.7" r="0.3"/><circle cx="9.7" cy="18.0" r="0.4"/><circle cx="20.6" cy="11.0" r="0.5"/><circle cx="19.5" cy="10.3" r="0.4"/><circle cx="16.6" cy="14.8" r="0.3"/><circle cx="18.6" cy="17.0" r="0.3"/><circle cx="11.6" cy="14.2" r="0.4"/><circle cx="6.7" cy="19.4" r="0.4"/><circle cx="8.1" cy="13.1" r="0.2"/><circle cx="8.7" cy="4.6" r="0.3"/><circle cx="5.4" cy="11.3" r="0.5"/><circle cx="15.8" cy="13.1" r="0.4"/><circle cx="9.3" cy="16.5" r="0.3"/><circle cx="9.1" cy="19.4" r="0.2"/><circle cx="4.0" cy="8.8" r="0.3"/><circle cx="10.8" cy="5.9" r="0.4"/><circle cx="15.8" cy="14.7" r="0.4"/><circle cx="6.6" cy="7.3" r="0.2"/><circle cx="2.9" cy="9.3" r="0.3"/><circle cx="13.4" cy="18.7" r="0.3"/><circle cx="13.6" cy="13.0" r="0.4"/><circle cx="17.6" cy="5.9" r="0.4"/><circle cx="17.7" cy="5.3" r="0.3"/><circle cx="4.6" cy="17.9" r="0.5"/><circle cx="6.7" cy="5.7" r="0.3"/><circle cx="16.1" cy="14.4" r="0.3"/><circle cx="6.3" cy="5.8" r="0.4"/><circle cx="11.7" cy="11.4" r="0.3"/><circle cx="16.2" cy="14.9" r="0.5"/><circle cx="3.2" cy="13.2" r="0.3"/><circle cx="6.3" cy="18.2" r="0.3"/><circle cx="10.6" cy="4.2" r="0.4"/><circle cx="17.1" cy="12.5" r="0.5"/><circle cx="7.9" cy="15.0" r="0.5"/><circle cx="4.8" cy="7.3" r="0.3"/><circle cx="7.3" cy="7.4" r="0.3"/><circle cx="10.3" cy="15.9" r="0.4"/><circle cx="14.3" cy="13.2" r="0.4"/><circle cx="19.9" cy="11.0" r="0.4"/><circle cx="11.3" cy="7.2" r="0.4"/><circle cx="18.3" cy="12.3" r="0.2"/><circle cx="14.0" cy="13.7" r="0.3"/><circle cx="7.1" cy="12.2" r="0.2"/><circle cx="18.2" cy="17.9" r="0.5"/><circle cx="14.5" cy="9.7" r="0.3"/><circle cx="12.4" cy="10.7" r="0.2"/><circle cx="6.0" cy="4.0" r="0.5"/><circle cx="14.5" cy="7.1" r="0.4"/><circle cx="19.8" cy="8.0" r="0.5"/><circle cx="12.1" cy="3.1" r="0.4"/><circle cx="5.1" cy="14.9" r="0.5"/><circle cx="10.1" cy="10.8" r="0.3"/><circle cx="17.0" cy="5.7" r="0.3"/><circle cx="19.1" cy="8.2" r="0.3"/><circle cx="8.8" cy="3.0" r="0.2"/><circle cx="17.3" cy="9.1" r="0.5"/><circle cx="16.9" cy="11.9" r="0.3"/><circle cx="13.1" cy="19.0" r="0.4"/><circle cx="6.2" cy="4.2" r="0.2"/><circle cx="10.1" cy="17.4" r="0.4"/><circle cx="10.8" cy="2.1" r="0.5"/><circle cx="3.5" cy="10.0" r="0.4"/></g><path d="M23 17v6h-6z" fill="#e5525e"/><path d="M18 20.5h3.500M19.750 18.750v3.500" stroke="#222" stroke-width=".8"/></svg>
<svg class="a" style="left:854.9px;top:165.6px;background:#fff" width="23.2" height="23.2" viewBox="0 0 23 23"><g filter="url(#b1)"><g fill="#000" fill-opacity="0.34"><circle cx="4.1" cy="10.6" r="0.9"/><circle cx="13.3" cy="8.4" r="0.4"/><circle cx="9.3" cy="3.7" r="0.5"/><circle cx="16.1" cy="5.2" r="0.5"/><circle cx="15.6" cy="17.5" r="0.8"/><circle cx="16.1" cy="18.7" r="0.5"/><circle cx="15.9" cy="3.9" r="0.5"/><circle cx="9.5" cy="5.1" r="0.9"/><circle cx="6.1" cy="13.5" r="0.5"/><circle cx="14.4" cy="7.3" r="0.9"/><circle cx="19.8" cy="13.3" r="0.4"/><circle cx="10.0" cy="2.9" r="0.6"/><circle cx="6.6" cy="8.4" r="0.4"/><circle cx="14.9" cy="6.1" r="0.9"/><circle cx="15.0" cy="12.3" r="0.5"/><circle cx="12.1" cy="10.2" r="0.4"/><circle cx="7.5" cy="15.4" r="0.9"/><circle cx="14.3" cy="8.1" r="0.8"/><circle cx="6.6" cy="17.7" r="0.8"/><circle cx="17.1" cy="14.1" r="0.7"/><circle cx="5.0" cy="13.2" r="0.8"/><circle cx="6.2" cy="15.2" r="0.9"/><circle cx="9.8" cy="7.9" r="0.5"/><circle cx="10.3" cy="20.2" r="0.6"/><circle cx="17.9" cy="5.4" r="0.8"/><circle cx="6.2" cy="17.2" r="0.7"/><circle cx="17.6" cy="9.6" r="0.8"/><circle cx="8.6" cy="5.0" r="0.5"/><circle cx="6.1" cy="9.0" r="0.8"/><circle cx="12.1" cy="7.5" r="0.6"/><circle cx="11.2" cy="20.3" r="0.7"/><circle cx="3.1" cy="14.2" r="0.9"/><circle cx="15.5" cy="6.6" r="0.5"/><circle cx="9.7" cy="13.4" r="0.6"/><circle cx="5.6" cy="13.4" r="1.0"/><circle cx="7.9" cy="10.8" r="0.5"/><circle cx="8.7" cy="5.7" r="0.6"/><circle cx="5.7" cy="11.7" r="0.8"/><circle cx="9.8" cy="10.4" r="0.7"/><circle cx="11.5" cy="18.4" r="0.7"/><circle cx="12.1" cy="2.7" r="0.8"/><circle cx="6.8" cy="7.2" r="0.5"/><circle cx="11.0" cy="7.5" r="0.6"/><circle cx="7.5" cy="9.2" r="0.9"/><circle cx="3.0" cy="9.0" r="0.4"/><circle cx="6.5" cy="12.6" r="0.7"/><circle cx="7.4" cy="6.0" r="1.0"/><circle cx="6.4" cy="13.5" r="0.8"/><circle cx="7.1" cy="9.9" r="1.0"/><circle cx="11.9" cy="13.9" r="0.7"/><circle cx="18.5" cy="7.1" r="0.9"/><circle cx="6.6" cy="7.4" r="0.6"/><circle cx="14.6" cy="16.7" r="0.9"/><circle cx="3.1" cy="8.5" r="0.9"/><circle cx="4.8" cy="9.6" r="0.7"/><circle cx="18.3" cy="7.0" r="0.5"/><circle cx="17.5" cy="7.2" r="0.6"/><circle cx="11.3" cy="5.7" r="0.8"/><circle cx="4.4" cy="11.3" r="1.0"/><circle cx="16.3" cy="7.5" r="0.6"/><circle cx="9.9" cy="4.3" r="0.5"/><circle cx="6.8" cy="11.2" r="0.8"/><circle cx="13.9" cy="15.8" r="0.6"/><circle cx="10.2" cy="18.1" r="0.9"/><circle cx="6.9" cy="5.9" r="0.9"/><circle cx="6.9" cy="15.2" r="0.8"/><circle cx="13.6" cy="19.0" r="1.0"/><circle cx="13.2" cy="9.9" r="0.9"/><circle cx="12.0" cy="14.7" r="0.8"/><circle cx="9.3" cy="14.6" r="0.8"/><circle cx="5.1" cy="10.0" r="0.7"/><circle cx="5.6" cy="6.2" r="0.8"/><circle cx="9.3" cy="3.6" r="0.7"/><circle cx="9.6" cy="9.2" r="0.4"/><circle cx="4.4" cy="13.7" r="0.5"/><circle cx="16.2" cy="10.3" r="0.7"/><circle cx="2.8" cy="13.2" r="0.5"/><circle cx="11.4" cy="18.7" r="0.6"/><circle cx="9.7" cy="14.2" r="1.0"/><circle cx="5.1" cy="13.9" r="0.5"/><circle cx="14.2" cy="10.3" r="0.8"/><circle cx="17.5" cy="14.1" r="0.6"/><circle cx="17.2" cy="9.7" r="0.9"/><circle cx="15.8" cy="12.3" r="1.0"/><circle cx="10.3" cy="12.8" r="0.6"/><circle cx="7.2" cy="16.5" r="0.6"/><circle cx="9.4" cy="17.3" r="0.7"/><circle cx="14.1" cy="17.4" r="0.7"/><circle cx="4.6" cy="8.0" r="0.7"/><circle cx="13.5" cy="20.0" r="0.5"/><circle cx="9.6" cy="17.0" r="0.6"/><circle cx="13.5" cy="19.6" r="0.6"/><circle cx="4.8" cy="9.5" r="0.5"/><circle cx="8.5" cy="12.9" r="0.7"/><circle cx="10.5" cy="3.2" r="1.0"/><circle cx="16.1" cy="15.5" r="0.8"/><circle cx="5.4" cy="17.7" r="0.7"/><circle cx="13.1" cy="9.8" r="0.6"/><circle cx="8.8" cy="3.7" r="0.7"/><circle cx="16.4" cy="5.4" r="0.6"/><circle cx="9.8" cy="5.3" r="0.5"/><circle cx="18.2" cy="6.6" r="0.9"/><circle cx="12.2" cy="19.4" r="0.4"/><circle cx="6.5" cy="11.5" r="0.7"/><circle cx="6.6" cy="16.0" r="0.7"/><circle cx="11.9" cy="4.2" r="0.6"/><circle cx="12.9" cy="15.7" r="0.6"/><circle cx="5.8" cy="14.4" r="0.9"/><circle cx="16.1" cy="11.0" r="0.6"/><circle cx="10.8" cy="11.4" r="0.8"/><circle cx="18.2" cy="13.1" r="0.8"/><circle cx="4.9" cy="17.5" r="0.6"/><circle cx="14.4" cy="11.8" r="0.5"/><circle cx="10.9" cy="3.8" r="0.6"/><circle cx="14.2" cy="9.1" r="0.5"/><circle cx="5.6" cy="8.7" r="0.9"/><circle cx="8.4" cy="19.5" r="0.8"/><circle cx="9.0" cy="5.2" r="0.5"/><circle cx="3.4" cy="8.1" r="0.4"/><circle cx="9.1" cy="15.9" r="0.6"/><circle cx="12.5" cy="4.3" r="0.5"/><circle cx="9.1" cy="3.4" r="0.4"/><circle cx="18.4" cy="12.3" r="0.9"/><circle cx="5.4" cy="9.5" r="0.6"/><circle cx="3.6" cy="8.0" r="0.8"/><circle cx="11.3" cy="5.4" r="0.9"/><circle cx="12.3" cy="5.1" r="0.6"/><circle cx="8.7" cy="20.0" r="0.8"/><circle cx="17.4" cy="14.3" r="0.7"/><circle cx="7.6" cy="8.7" r="0.9"/><circle cx="3.4" cy="12.4" r="0.6"/><circle cx="16.6" cy="7.2" r="0.7"/><circle cx="3.5" cy="15.0" r="0.7"/><circle cx="6.2" cy="10.3" r="0.7"/><circle cx="10.7" cy="17.5" r="0.6"/><circle cx="16.3" cy="14.0" r="0.4"/><circle cx="10.1" cy="9.1" r="0.9"/><circle cx="9.6" cy="15.8" r="0.7"/><circle cx="9.5" cy="18.9" r="0.6"/><circle cx="13.1" cy="10.6" r="0.4"/><circle cx="17.0" cy="6.5" r="0.6"/><circle cx="8.1" cy="7.3" r="0.7"/><circle cx="10.5" cy="18.0" r="0.8"/><circle cx="14.1" cy="7.8" r="0.7"/><circle cx="3.8" cy="8.1" r="0.7"/><circle cx="17.2" cy="5.0" r="0.6"/><circle cx="4.1" cy="16.4" r="0.7"/><circle cx="3.7" cy="10.0" r="0.8"/><circle cx="4.2" cy="10.7" r="0.6"/><circle cx="10.9" cy="12.1" r="0.8"/><circle cx="15.0" cy="4.6" r="1.0"/><circle cx="11.6" cy="8.6" r="0.6"/><circle cx="14.1" cy="10.1" r="0.9"/><circle cx="12.5" cy="8.2" r="0.5"/><circle cx="10.7" cy="4.3" r="0.4"/><circle cx="7.7" cy="10.8" r="0.9"/><circle cx="10.5" cy="11.3" r="0.6"/><circle cx="20.0" cy="12.1" r="0.9"/><circle cx="11.4" cy="11.1" r="1.0"/><circle cx="10.9" cy="18.7" r="0.9"/><circle cx="8.6" cy="10.4" r="0.5"/><circle cx="11.1" cy="8.4" r="0.6"/><circle cx="16.7" cy="9.1" r="0.5"/><circle cx="8.4" cy="7.2" r="0.9"/><circle cx="6.1" cy="17.6" r="0.9"/><circle cx="14.4" cy="17.5" r="0.7"/><circle cx="17.7" cy="17.5" r="0.6"/><circle cx="9.8" cy="10.1" r="1.0"/><circle cx="18.9" cy="10.6" r="0.5"/><circle cx="8.3" cy="6.2" r="0.7"/><circle cx="12.2" cy="14.9" r="0.9"/><circle cx="5.3" cy="6.8" r="0.8"/><circle cx="6.1" cy="15.4" r="0.6"/><circle cx="8.2" cy="6.6" r="0.9"/><circle cx="10.1" cy="16.9" r="0.4"/><circle cx="15.5" cy="12.5" r="0.4"/><circle cx="6.6" cy="14.0" r="0.9"/><circle cx="20.1" cy="13.9" r="0.5"/><circle cx="14.1" cy="6.8" r="0.5"/><circle cx="7.4" cy="8.1" r="0.4"/><circle cx="16.6" cy="16.9" r="0.8"/><circle cx="16.0" cy="11.3" r="0.9"/><circle cx="7.9" cy="16.9" r="0.6"/><circle cx="4.2" cy="16.0" r="0.6"/><circle cx="3.9" cy="15.4" r="0.7"/><circle cx="14.0" cy="5.4" r="0.6"/><circle cx="10.1" cy="4.4" r="0.6"/><circle cx="14.2" cy="11.5" r="0.9"/><circle cx="10.1" cy="4.0" r="0.7"/><circle cx="11.5" cy="9.6" r="0.8"/></g></g><path d="M18 20.5h3.500M19.750 18.750v3.500" stroke="#222" stroke-width=".8"/></svg>
<svg class="a" style="left:879.1px;top:165.6px;background:#fff" width="23.2" height="23.2" viewBox="0 0 23 23"><path d="M7 8v11M11 6v13M16 8v11M5 14h3M14 12h4" stroke="#ccc" stroke-width=".6"/><path d="M23 17v6h-6z" fill="#e5525e"/><path d="M18 20.5h3.500M19.750 18.750v3.500" stroke="#222" stroke-width=".8"/></svg>
<svg class="a" style="left:903.3px;top:165.6px;background:#fff" width="23.2" height="23.2" viewBox="0 0 23 23"><g filter="url(#b1)"><g fill="#000" fill-opacity="0.34"><circle cx="13.2" cy="8.3" r="1.2"/><circle cx="8.9" cy="7.1" r="1.2"/><circle cx="8.5" cy="11.2" r="1.0"/><circle cx="10.5" cy="8.9" r="0.9"/><circle cx="10.8" cy="10.5" r="1.3"/><circle cx="8.2" cy="13.7" r="1.1"/><circle cx="7.6" cy="9.7" r="0.6"/><circle cx="3.1" cy="14.5" r="1.4"/><circle cx="9.3" cy="5.7" r="1.1"/><circle cx="12.5" cy="9.9" r="0.6"/><circle cx="10.9" cy="10.4" r="1.0"/><circle cx="3.2" cy="15.5" r="1.1"/><circle cx="10.7" cy="12.3" r="0.9"/><circle cx="6.2" cy="9.7" r="1.0"/><circle cx="14.0" cy="12.2" r="1.2"/><circle cx="9.9" cy="13.2" r="0.7"/><circle cx="18.0" cy="8.3" r="0.9"/><circle cx="8.7" cy="13.9" r="1.3"/><circle cx="18.8" cy="6.3" r="1.3"/><circle cx="9.7" cy="9.4" r="1.3"/><circle cx="13.8" cy="16.0" r="0.8"/><circle cx="16.2" cy="12.2" r="0.7"/><circle cx="12.4" cy="9.6" r="1.1"/><circle cx="9.4" cy="11.4" r="0.8"/><circle cx="8.0" cy="16.6" r="1.2"/><circle cx="12.7" cy="10.2" r="0.7"/><circle cx="8.0" cy="13.2" r="0.7"/><circle cx="10.5" cy="10.6" r="1.0"/><circle cx="12.8" cy="13.3" r="0.8"/><circle cx="1.3" cy="12.9" r="1.2"/><circle cx="-0.4" cy="15.5" r="0.7"/><circle cx="12.7" cy="15.6" r="1.2"/><circle cx="9.7" cy="6.9" r="1.2"/><circle cx="5.7" cy="18.4" r="1.2"/><circle cx="12.1" cy="6.9" r="1.3"/><circle cx="0.9" cy="12.6" r="0.9"/><circle cx="13.8" cy="10.1" r="1.0"/><circle cx="5.8" cy="9.4" r="1.3"/><circle cx="12.0" cy="9.2" r="1.1"/><circle cx="6.5" cy="10.4" r="0.6"/><circle cx="20.6" cy="5.3" r="1.2"/><circle cx="9.0" cy="10.4" r="0.8"/><circle cx="9.7" cy="12.3" r="0.8"/><circle cx="7.7" cy="13.7" r="0.6"/><circle cx="17.1" cy="17.4" r="1.0"/><circle cx="11.0" cy="14.8" r="0.8"/><circle cx="8.0" cy="11.2" r="1.2"/><circle cx="15.6" cy="9.0" r="1.4"/><circle cx="12.5" cy="7.0" r="1.0"/><circle cx="9.1" cy="7.9" r="0.6"/><circle cx="3.5" cy="12.9" r="1.1"/><circle cx="17.8" cy="12.6" r="0.5"/><circle cx="8.0" cy="10.7" r="0.8"/><circle cx="11.2" cy="15.8" r="1.1"/><circle cx="14.0" cy="8.2" r="0.6"/><circle cx="12.1" cy="11.3" r="0.6"/><circle cx="12.0" cy="13.6" r="0.6"/><circle cx="12.7" cy="8.3" r="0.9"/><circle cx="11.0" cy="8.8" r="1.0"/><circle cx="15.0" cy="12.0" r="1.3"/><circle cx="7.4" cy="9.8" r="1.1"/><circle cx="5.8" cy="10.9" r="1.1"/><circle cx="8.5" cy="3.9" r="1.4"/><circle cx="17.6" cy="9.5" r="1.1"/><circle cx="11.3" cy="8.8" r="0.7"/><circle cx="12.9" cy="7.9" r="0.5"/><circle cx="10.4" cy="9.1" r="0.7"/><circle cx="12.8" cy="9.9" r="1.2"/><circle cx="9.8" cy="17.2" r="0.8"/><circle cx="4.9" cy="9.0" r="1.1"/><circle cx="12.1" cy="16.0" r="0.6"/><circle cx="10.7" cy="17.1" r="0.6"/><circle cx="8.8" cy="11.9" r="1.0"/><circle cx="12.2" cy="14.0" r="1.4"/><circle cx="6.1" cy="12.4" r="0.5"/><circle cx="10.3" cy="12.7" r="1.1"/><circle cx="11.9" cy="12.8" r="0.6"/><circle cx="10.2" cy="5.9" r="0.8"/><circle cx="9.2" cy="13.6" r="1.0"/><circle cx="8.6" cy="10.2" r="0.6"/><circle cx="8.2" cy="9.0" r="1.1"/><circle cx="11.3" cy="12.4" r="0.6"/><circle cx="13.6" cy="7.6" r="0.5"/><circle cx="7.0" cy="14.9" r="0.7"/><circle cx="10.7" cy="10.7" r="1.0"/><circle cx="8.2" cy="10.0" r="1.4"/><circle cx="8.5" cy="10.5" r="1.2"/><circle cx="16.5" cy="11.9" r="1.3"/><circle cx="9.9" cy="10.4" r="0.6"/><circle cx="14.2" cy="5.1" r="0.7"/><circle cx="17.1" cy="8.2" r="0.6"/><circle cx="11.0" cy="10.6" r="0.8"/><circle cx="11.2" cy="13.3" r="0.9"/><circle cx="20.5" cy="13.6" r="0.7"/><circle cx="9.0" cy="8.0" r="1.3"/><circle cx="6.2" cy="9.5" r="1.2"/><circle cx="6.5" cy="9.5" r="0.7"/><circle cx="12.2" cy="6.3" r="0.9"/><circle cx="15.0" cy="10.7" r="1.2"/><circle cx="12.5" cy="13.8" r="1.1"/><circle cx="9.8" cy="22.7" r="1.4"/><circle cx="6.6" cy="6.6" r="0.7"/><circle cx="11.6" cy="4.1" r="0.9"/><circle cx="5.2" cy="9.0" r="0.7"/><circle cx="12.9" cy="11.6" r="1.0"/><circle cx="5.4" cy="5.8" r="0.7"/><circle cx="12.6" cy="14.2" r="0.6"/><circle cx="10.2" cy="15.0" r="1.1"/><circle cx="12.4" cy="12.3" r="0.9"/><circle cx="8.0" cy="10.7" r="1.1"/><circle cx="1.1" cy="7.5" r="1.4"/><circle cx="9.3" cy="9.9" r="1.0"/><circle cx="10.1" cy="13.8" r="0.6"/><circle cx="8.4" cy="6.2" r="0.7"/><circle cx="12.0" cy="21.9" r="1.0"/><circle cx="9.5" cy="8.5" r="1.3"/><circle cx="9.6" cy="6.9" r="0.6"/><circle cx="9.7" cy="11.3" r="0.7"/><circle cx="10.9" cy="9.3" r="0.7"/><circle cx="4.8" cy="18.7" r="0.6"/><circle cx="6.2" cy="13.2" r="0.5"/><circle cx="9.1" cy="10.5" r="0.8"/><circle cx="4.5" cy="21.7" r="0.9"/><circle cx="9.4" cy="14.0" r="0.8"/><circle cx="12.3" cy="13.6" r="1.1"/><circle cx="8.8" cy="13.0" r="0.5"/><circle cx="11.3" cy="8.1" r="0.7"/><circle cx="16.6" cy="3.5" r="1.0"/><circle cx="17.4" cy="13.8" r="1.2"/><circle cx="13.8" cy="11.3" r="1.3"/></g></g><path d="M18 20.5h3.500" stroke="#222" stroke-width=".8"/></svg>
<svg class="a" style="left:927.5px;top:165.6px;background:#fff" width="23.2" height="23.2" viewBox="0 0 23 23"><g filter="url(#b1)"><g fill="#000" fill-opacity="0.42"><circle cx="7.4" cy="11.4" r="1.3"/><circle cx="11.2" cy="13.9" r="1.1"/><circle cx="16.8" cy="10.5" r="0.5"/><circle cx="13.9" cy="11.4" r="1.0"/><circle cx="13.0" cy="10.4" r="1.0"/><circle cx="9.9" cy="9.9" r="1.2"/><circle cx="8.7" cy="14.9" r="1.1"/><circle cx="4.8" cy="9.5" r="0.5"/><circle cx="8.4" cy="9.1" r="1.2"/><circle cx="11.4" cy="5.4" r="1.0"/><circle cx="17.3" cy="10.1" r="1.1"/><circle cx="10.0" cy="11.6" r="1.3"/><circle cx="11.9" cy="11.6" r="1.0"/><circle cx="15.5" cy="10.8" r="0.7"/><circle cx="13.5" cy="11.3" r="0.8"/><circle cx="8.2" cy="14.0" r="1.2"/><circle cx="17.9" cy="11.0" r="0.7"/><circle cx="9.5" cy="8.3" r="0.9"/><circle cx="6.3" cy="11.0" r="1.1"/><circle cx="11.8" cy="17.2" r="1.1"/><circle cx="9.1" cy="9.6" r="0.6"/><circle cx="13.0" cy="4.6" r="0.7"/><circle cx="7.2" cy="5.7" r="1.2"/><circle cx="12.7" cy="13.4" r="0.6"/><circle cx="8.9" cy="7.1" r="1.1"/><circle cx="13.6" cy="15.8" r="0.7"/><circle cx="5.2" cy="13.0" r="1.3"/><circle cx="12.9" cy="16.8" r="0.5"/><circle cx="13.3" cy="16.2" r="0.6"/><circle cx="14.3" cy="5.5" r="0.7"/><circle cx="8.9" cy="5.6" r="1.3"/><circle cx="6.0" cy="11.1" r="1.2"/><circle cx="9.7" cy="17.7" r="0.8"/><circle cx="4.8" cy="14.5" r="1.1"/><circle cx="12.9" cy="16.2" r="1.3"/><circle cx="6.0" cy="14.1" r="1.0"/><circle cx="9.6" cy="6.7" r="0.8"/><circle cx="13.1" cy="16.0" r="0.8"/><circle cx="10.9" cy="9.6" r="1.1"/><circle cx="14.2" cy="16.5" r="1.2"/><circle cx="9.0" cy="12.7" r="0.7"/><circle cx="12.4" cy="17.7" r="1.1"/><circle cx="11.2" cy="11.1" r="0.9"/><circle cx="5.2" cy="12.5" r="1.2"/><circle cx="11.9" cy="8.8" r="1.3"/><circle cx="5.5" cy="12.2" r="0.6"/><circle cx="10.7" cy="14.0" r="0.7"/><circle cx="6.8" cy="10.0" r="0.7"/><circle cx="12.0" cy="12.2" r="1.2"/><circle cx="5.8" cy="12.8" r="0.6"/><circle cx="11.3" cy="10.9" r="1.1"/><circle cx="14.4" cy="12.0" r="0.9"/><circle cx="4.5" cy="12.6" r="1.0"/><circle cx="9.9" cy="9.3" r="0.7"/><circle cx="9.7" cy="15.8" r="0.8"/><circle cx="12.6" cy="12.6" r="0.5"/><circle cx="16.2" cy="12.9" r="1.3"/><circle cx="7.7" cy="9.3" r="1.0"/><circle cx="6.5" cy="11.1" r="1.1"/><circle cx="10.2" cy="14.9" r="0.5"/><circle cx="10.9" cy="17.7" r="0.9"/><circle cx="9.8" cy="6.1" r="0.7"/><circle cx="7.2" cy="15.0" r="0.7"/><circle cx="9.3" cy="10.9" r="0.8"/><circle cx="14.4" cy="14.2" r="0.9"/><circle cx="16.4" cy="7.5" r="1.2"/><circle cx="6.7" cy="12.3" r="1.2"/><circle cx="13.9" cy="13.9" r="0.5"/><circle cx="13.0" cy="5.4" r="1.2"/><circle cx="13.2" cy="16.9" r="1.1"/><circle cx="5.7" cy="9.7" r="1.1"/><circle cx="3.3" cy="12.2" r="1.2"/><circle cx="6.8" cy="14.8" r="0.8"/><circle cx="16.1" cy="7.2" r="0.8"/><circle cx="7.7" cy="13.9" r="1.0"/><circle cx="7.5" cy="6.2" r="0.9"/><circle cx="10.2" cy="10.5" r="0.9"/><circle cx="8.3" cy="5.4" r="1.2"/><circle cx="11.6" cy="17.7" r="1.3"/><circle cx="5.6" cy="6.6" r="0.7"/><circle cx="11.8" cy="14.0" r="0.9"/><circle cx="14.0" cy="8.4" r="1.2"/><circle cx="11.3" cy="9.7" r="0.5"/><circle cx="15.8" cy="10.9" r="1.1"/><circle cx="13.2" cy="8.1" r="0.5"/><circle cx="15.3" cy="6.0" r="0.8"/><circle cx="10.1" cy="10.4" r="1.3"/><circle cx="4.8" cy="6.5" r="1.1"/><circle cx="8.5" cy="13.3" r="0.9"/><circle cx="14.1" cy="7.2" r="0.9"/><circle cx="11.0" cy="13.6" r="0.7"/><circle cx="8.8" cy="15.5" r="1.3"/><circle cx="10.0" cy="14.3" r="1.1"/><circle cx="13.9" cy="9.7" r="0.7"/><circle cx="8.9" cy="11.9" r="0.6"/><circle cx="7.0" cy="9.9" r="0.7"/><circle cx="12.3" cy="6.4" r="1.0"/><circle cx="6.9" cy="6.0" r="1.2"/><circle cx="13.0" cy="10.6" r="1.1"/><circle cx="13.1" cy="11.4" r="0.7"/><circle cx="12.5" cy="13.0" r="0.7"/><circle cx="13.0" cy="5.3" r="0.9"/><circle cx="4.3" cy="9.1" r="1.0"/><circle cx="15.0" cy="13.2" r="0.7"/><circle cx="3.2" cy="12.3" r="0.7"/><circle cx="8.0" cy="15.8" r="1.0"/><circle cx="8.9" cy="15.1" r="0.9"/><circle cx="12.0" cy="10.3" r="1.2"/><circle cx="3.8" cy="8.6" r="0.8"/><circle cx="9.8" cy="10.1" r="0.7"/><circle cx="7.9" cy="7.8" r="0.9"/><circle cx="16.1" cy="10.4" r="1.0"/><circle cx="7.0" cy="9.6" r="1.3"/><circle cx="9.7" cy="11.7" r="0.8"/><circle cx="7.6" cy="12.6" r="0.8"/><circle cx="17.0" cy="14.0" r="0.9"/><circle cx="9.2" cy="16.0" r="1.0"/><circle cx="5.3" cy="15.0" r="0.9"/><circle cx="16.3" cy="8.1" r="1.1"/><circle cx="13.8" cy="16.0" r="1.3"/></g></g><circle cx="13" cy="9" r="3" fill="#fff" fill-opacity=".6" filter="url(#b1)"/><path d="M23 17v6h-6z" fill="#e5525e"/><path d="M18 20.5h3.500M19.750 18.750v3.500" stroke="#222" stroke-width=".8"/></svg>
<svg class="a" style="left:951.7px;top:165.6px;background:#fff" width="23.2" height="23.2" viewBox="0 0 23 23"><g filter="url(#b1)"><g fill="#000" fill-opacity="0.72"><circle cx="7.1" cy="10.0" r="0.7"/><circle cx="8.3" cy="11.1" r="1.1"/><circle cx="6.5" cy="6.2" r="0.9"/><circle cx="6.9" cy="6.6" r="1.1"/><circle cx="7.6" cy="14.3" r="0.9"/><circle cx="8.1" cy="12.9" r="1.1"/><circle cx="8.2" cy="14.0" r="1.0"/><circle cx="8.8" cy="5.2" r="0.9"/><circle cx="6.2" cy="8.7" r="0.8"/><circle cx="6.3" cy="9.1" r="1.1"/><circle cx="6.1" cy="9.9" r="0.9"/><circle cx="6.6" cy="4.6" r="1.1"/><circle cx="6.8" cy="8.5" r="0.5"/><circle cx="7.3" cy="12.0" r="0.9"/><circle cx="7.9" cy="12.8" r="1.0"/><circle cx="5.3" cy="13.6" r="0.8"/><circle cx="6.3" cy="11.3" r="0.6"/><circle cx="6.6" cy="10.2" r="0.6"/><circle cx="6.6" cy="16.5" r="1.2"/><circle cx="7.1" cy="13.5" r="1.2"/><circle cx="5.6" cy="8.0" r="1.2"/><circle cx="6.6" cy="8.8" r="1.2"/><circle cx="7.1" cy="10.8" r="1.2"/><circle cx="6.6" cy="9.0" r="0.8"/><circle cx="6.5" cy="16.7" r="0.8"/><circle cx="8.6" cy="14.8" r="0.7"/><circle cx="7.6" cy="15.8" r="0.6"/><circle cx="6.2" cy="8.7" r="0.6"/><circle cx="8.3" cy="9.5" r="0.5"/><circle cx="8.0" cy="8.0" r="1.1"/><circle cx="7.1" cy="8.9" r="0.7"/><circle cx="7.8" cy="16.6" r="1.2"/><circle cx="5.8" cy="8.7" r="1.2"/><circle cx="6.0" cy="10.5" r="0.7"/><circle cx="7.5" cy="10.8" r="0.6"/></g><g fill="#000" fill-opacity="0.68"><circle cx="14.2" cy="10.4" r="0.6"/><circle cx="13.1" cy="10.6" r="0.8"/><circle cx="15.8" cy="11.7" r="0.6"/><circle cx="13.9" cy="12.3" r="1.0"/><circle cx="14.3" cy="14.7" r="0.5"/><circle cx="13.0" cy="9.9" r="1.1"/><circle cx="14.4" cy="13.4" r="1.1"/><circle cx="15.3" cy="12.3" r="0.8"/><circle cx="13.8" cy="12.8" r="0.8"/><circle cx="14.2" cy="11.1" r="0.7"/><circle cx="13.3" cy="12.6" r="1.0"/><circle cx="12.5" cy="13.1" r="0.9"/><circle cx="13.3" cy="4.3" r="0.9"/><circle cx="13.5" cy="7.4" r="0.6"/><circle cx="14.8" cy="7.8" r="0.5"/><circle cx="13.9" cy="7.5" r="1.2"/><circle cx="12.8" cy="12.7" r="1.1"/><circle cx="15.9" cy="8.8" r="0.8"/><circle cx="12.1" cy="13.0" r="1.1"/><circle cx="12.1" cy="12.2" r="0.9"/><circle cx="13.2" cy="10.3" r="0.7"/><circle cx="13.9" cy="19.6" r="0.5"/><circle cx="14.2" cy="13.0" r="1.1"/><circle cx="13.5" cy="8.7" r="0.6"/><circle cx="13.0" cy="6.6" r="0.9"/><circle cx="13.6" cy="7.0" r="0.5"/><circle cx="14.7" cy="5.2" r="0.6"/><circle cx="11.3" cy="16.8" r="1.2"/><circle cx="15.0" cy="5.7" r="0.6"/><circle cx="15.6" cy="7.1" r="0.6"/><circle cx="15.9" cy="8.1" r="1.1"/><circle cx="14.4" cy="10.2" r="0.6"/><circle cx="14.3" cy="9.3" r="0.7"/><circle cx="14.6" cy="5.5" r="0.8"/><circle cx="12.4" cy="13.4" r="1.2"/><circle cx="13.2" cy="9.0" r="0.7"/><circle cx="14.7" cy="14.8" r="1.0"/><circle cx="14.4" cy="15.9" r="0.9"/><circle cx="12.6" cy="9.4" r="0.8"/><circle cx="15.5" cy="11.4" r="1.0"/></g></g><path d="M23 17v6h-6z" fill="#e5525e"/><path d="M18 20.5h3.500M19.750 18.750v3.500" stroke="#222" stroke-width=".8"/></svg>
<svg class="a" style="left:975.9px;top:165.6px;background:#fff" width="23.2" height="23.2" viewBox="0 0 23 23"><path d="M7 8v11M11 6v13M16 8v11M5 14h3M14 12h4" stroke="#ddd" stroke-width=".5"/><path d="M23 17v6h-6z" fill="#e5525e"/></svg>
<svg class="a" style="left:806.5px;top:189.8px;background:#fff" width="23.2" height="23.2" viewBox="0 0 23 23"><g fill="#5e9a3a"><ellipse cx="6" cy="8" rx="2.5" ry="1.5"/><ellipse cx="10" cy="11" rx="2.5" ry="1.6"/><ellipse cx="14" cy="13" rx="2.2" ry="1.4"/><ellipse cx="17" cy="15" rx="2" ry="1.3"/><ellipse cx="9" cy="14" rx="1.6" ry="1"/></g><path d="M23 17v6h-6z" fill="#e5525e"/><path d="M18 20.5h3.500" stroke="#222" stroke-width=".8"/></svg>
<svg class="a" style="left:830.7px;top:189.8px;background:#fff" width="23.2" height="23.2" viewBox="0 0 23 23"><path d="M5 7l3 3c3-1 6-1 8 0l4-5c1 4 0 8-3 10-3 2-8 2-10-1-2-2-2-5-2-7z" fill="#7d7362"/><ellipse cx="5" cy="12" rx="2.5" ry="2" fill="#222"/><circle cx="9.5" cy="10" r="2.2" fill="#fff"/><circle cx="14" cy="9.5" r="2" fill="#fff"/><circle cx="9.8" cy="10.3" r=".8" fill="#000"/><circle cx="14" cy="9.8" r=".8" fill="#000"/><path d="M12 15l7 4" stroke="#c9a66a" stroke-width="1.2"/><path d="M18 18.5l2.5 1.5" stroke="#d33" stroke-width="1.5"/><path d="M23 17v6h-6z" fill="#e5525e"/><path d="M18 20.5h3.500M19.750 18.750v3.500" stroke="#222" stroke-width=".8"/></svg>
<svg class="a" style="left:854.9px;top:189.8px;background:#fff" width="23.2" height="23.2" viewBox="0 0 23 23"><path d="M11 2c1 0 1 2 1 3 3-1 6 0 7 3 1 4 0 10-2 13-2 2-8 2-11 0-2-3-3-9-2-13 1-3 4-4 6-3 0-1 0-3 1-3z" fill="#5c9e48"/><path d="M9 6c-2 3-2 10 0 15M14 6c2 3 2 10 0 15" stroke="#3c7a30" stroke-width="1" fill="none"/><path d="M10 7c1 3 1 8 0 12" stroke="#9fd08a" stroke-width="1.2" fill="none"/><path d="M6 19c3 2.5 9 2.5 11.5 0" stroke="#b5523a" stroke-width="1.5" fill="none"/><path d="M18 20.5h3.500M19.750 18.750v3.500" stroke="#222" stroke-width=".8"/></svg>
<div class="a" style="left:805.2px;top:67px;width:195px;height:0.9px;background:#1d1d1d;"></div>
<div class="a" style="left:805.2px;top:273px;width:195px;height:1px;background:#1d1d1d;"></div>
<div class="a" style="left:806px;top:275.500px;width:196px;height:22.500px;background:#2d2d2d;border:1px solid #1d1d1d;border-radius:3px"></div>
<div class="t" style="left:812px;top:281.5px;font-size:8px;transform:scaleX(.87);color:#f0f0f0">Basic,</div>
<div class="a" style="left:806px;top:301.500px;width:196px;height:22px;background:#2d2d2d;border:1px solid #1d1d1d;border-radius:3px"></div>
<div class="a" style="left:807px;top:302.5px;width:21px;height:20px;background:#1b52a2;border-radius:2px"></div>
<div class="t" style="left:814px;top:307.5px;font-size:8px;transform:scaleX(.87);color:#f0f0f0">Интервал</div>
<svg class="a" style="left:822px;top:329px" width="14" height="14" viewBox="0 0 14 14"><path d="M1 3.500h6M1 7h4M1 11.500h11" stroke="#fff" stroke-width="1.600"/><path d="M11.500 1l1.800 1.800-5.500 5.500-2.300.6.600-2.400z" fill="#fff"/></svg>
<svg class="a" style="left:870px;top:328px" width="14" height="15" viewBox="0 0 14 15"><path d="M3.500 3.500h6l2.500 2.500v7.500h-8.500z" fill="none" stroke="#fff" stroke-width="1.400"/><path d="M3.500 0v5M1 2.500h5" stroke="#fff" stroke-width="1.400"/></svg>
<svg class="a" style="left:920px;top:330px" width="12" height="12" viewBox="0 0 12 12"><rect x=".7" y=".7" width="6.500" height="6.500" fill="#2c2c2c" stroke="#fff" stroke-width="1.400"/><rect x="4.700" y="4.700" width="6.500" height="6.500" fill="#2c2c2c" stroke="#fff" stroke-width="1.400"/></svg>
<svg class="a" style="left:968px;top:329px" width="13" height="13" viewBox="0 0 13 13"><rect width="13" height="13" rx="1.500" fill="#8e8e8e"/><path d="M3.200 3.200l6.600 6.600M9.800 3.200l-6.600 6.600" stroke="#2a2a2a" stroke-width="2"/></svg>
<div class="a" style="left:803.5px;top:347px;width:197px;height:1px;background:#1e1e1e;"></div>
<div class="a" style="left:809.5px;top:349px;width:22.5px;height:20px;background:#333333;"></div>
<div class="a" style="left:809.5px;top:369px;width:22.5px;height:2.5px;background:#1c5bb5;"></div>
<svg class="a" style="left:814px;top:353px" width="14" height="14" viewBox="0 0 14 14"><path d="M3 .5h10l-2 3H1z" fill="#fff"/><path d="M3 5.200h10l-2 3H1z" fill="#fff"/><path d="M3 9.900h10l-2 3H1z" fill="#fff"/></svg>
<svg class="a" style="left:843px;top:353.500px" width="13" height="13" viewBox="0 0 13 13"><rect x=".7" y=".7" width="11.600" height="11.600" rx="1" fill="none" stroke="#fff" stroke-width="1.400"/><path d="M4 2.500v8M6.500 2.500v8M9 2.500v8" stroke="#ddd" stroke-width="1.200"/></svg>
<svg class="a" style="left:871px;top:355px" width="14" height="11" viewBox="0 0 14 11"><path d="M1.500 9.500C3 4 11 4 12.500 9.500" fill="none" stroke="#fff" stroke-width="1.500"/><path d="M1 2.500h12" stroke="#fff" stroke-width="1.300"/><rect x="0" y="1" width="3" height="3" fill="#fff"/><rect x="11" y="1" width="3" height="3" fill="#fff"/><rect x="5.500" y="1" width="3" height="3" fill="#fff"/></svg>
<div class="a" style="left:805.5px;top:373.500px;width:196px;height:16.500px;background:#2d2d2d;border:1px solid #1d1d1d;border-radius:3px"></div>
<div class="t" style="left:809px;top:376px;font-size:8px;transform:scaleX(.87);color:#9a9a9a">Режим</div>
<div class="a" style="left:806px;top:394px;width:196px;height:22px;background:#1b52a2;border:1px solid #1d1d1d;border-radius:3px"></div>
<div class="t" style="left:814px;top:399.5px;font-size:8px;transform:scaleX(.87);color:#fff">Непрозрачность</div>
<div class="t" style="left:805.6px;top:422px;font-size:8px;transform:scaleX(.87);color:#e2e2e2">Блокировка:</div>
<svg class="a" style="left:849px;top:421px" width="13" height="14" viewBox="0 0 13 14"><path d="M11.500 .8L6 8.300l1.200 1z" fill="#fff"/><path d="M5.500 8.800l1.300 1.100c-.3 1.300-2.200 2.400-5.300 2.300 1.700-.7 2.400-2.300 4-3.400z" fill="#fff"/></svg>
<svg class="a" style="left:865.500px;top:421.500px" width="13" height="13" viewBox="0 0 13 13"><path d="M6.500 0l2.300 2.800H7.300v2.900h2.900V4.200L13 6.500l-2.800 2.300V7.300H7.300v2.900h1.500L6.500 13 4.200 10.200h1.500V7.300H2.800v1.500L0 6.500l2.800-2.300v1.500h2.900V2.800H4.200z" fill="#fff"/></svg>
<svg class="a" style="left:883px;top:421.500px" width="12" height="12" viewBox="0 0 12 12"><rect width="12" height="12" fill="#6a6a6a"/><g fill="#e6e6e6"><rect x="0" y="0" width="3" height="3"/><rect x="6" y="0" width="3" height="3"/><rect x="3" y="3" width="3" height="3"/><rect x="9" y="3" width="3" height="3"/><rect x="0" y="6" width="3" height="3"/><rect x="6" y="6" width="3" height="3"/><rect x="3" y="9" width="3" height="3"/><rect x="9" y="9" width="3" height="3"/></g></svg>
<div class="a" style="left:803.5px;top:437px;width:197px;height:1px;background:#1b1b1b;"></div>
<div class="a" style="left:805px;top:438px;width:1px;height:187px;background:#1b1b1b;"></div>
<div class="a" style="left:806px;top:438px;width:194px;height:187px;background:#2c2c2c;"></div>
<svg class="a" style="left:849px;top:440.0px;border:1px solid #0e0e0e" width="25" height="25" viewBox="0 0 24 24" preserveAspectRatio="none"><rect width="24" height="24" fill="#8d8d8d"/><rect x="20" y="17" width="1" height="1" fill="#777"/><rect x="8" y="19" width="1" height="1" fill="#b5b5b5"/><rect x="19" y="17" width="1" height="1" fill="#aaa"/><rect x="2" y="1" width="1" height="1" fill="#6c6c6c"/><rect x="1" y="16" width="1" height="1" fill="#6c6c6c"/><rect x="15" y="19" width="1" height="1" fill="#999"/><rect x="8" y="18" width="1" height="1" fill="#999"/><rect x="3" y="21" width="1" height="1" fill="#777"/><rect x="23" y="18" width="1" height="1" fill="#777"/><rect x="20" y="3" width="1" height="1" fill="#b5b5b5"/><rect x="20" y="9" width="1" height="1" fill="#b5b5b5"/><rect x="22" y="5" width="1" height="1" fill="#aaa"/><rect x="15" y="4" width="1" height="1" fill="#777"/><rect x="18" y="4" width="1" height="1" fill="#6c6c6c"/><rect x="23" y="0" width="1" height="1" fill="#aaa"/><rect x="13" y="2" width="1" height="1" fill="#aaa"/><rect x="15" y="7" width="1" height="1" fill="#b5b5b5"/><rect x="22" y="9" width="1" height="1" fill="#6c6c6c"/><rect x="17" y="19" width="1" height="1" fill="#b5b5b5"/><rect x="19" y="14" width="1" height="1" fill="#b5b5b5"/><rect x="3" y="20" width="1" height="1" fill="#aaa"/><rect x="6" y="3" width="1" height="1" fill="#aaa"/><rect x="16" y="23" width="1" height="1" fill="#b5b5b5"/><rect x="4" y="6" width="1" height="1" fill="#b5b5b5"/><rect x="0" y="5" width="1" height="1" fill="#b5b5b5"/><rect x="10" y="19" width="1" height="1" fill="#999"/><rect x="12" y="5" width="1" height="1" fill="#b5b5b5"/><rect x="23" y="20" width="1" height="1" fill="#999"/><rect x="22" y="16" width="1" height="1" fill="#999"/><rect x="20" y="15" width="1" height="1" fill="#b5b5b5"/><rect x="18" y="13" width="1" height="1" fill="#6c6c6c"/><rect x="15" y="3" width="1" height="1" fill="#999"/><rect x="0" y="3" width="1" height="1" fill="#b5b5b5"/><rect x="15" y="20" width="1" height="1" fill="#999"/><rect x="2" y="12" width="1" height="1" fill="#6c6c6c"/><rect x="21" y="22" width="1" height="1" fill="#999"/><rect x="5" y="17" width="1" height="1" fill="#b5b5b5"/><rect x="12" y="12" width="1" height="1" fill="#777"/><rect x="8" y="19" width="1" height="1" fill="#b5b5b5"/><rect x="17" y="20" width="1" height="1" fill="#6c6c6c"/><rect x="12" y="17" width="1" height="1" fill="#6c6c6c"/><rect x="10" y="7" width="1" height="1" fill="#aaa"/><rect x="21" y="23" width="1" height="1" fill="#aaa"/><rect x="19" y="11" width="1" height="1" fill="#b5b5b5"/><rect x="9" y="16" width="1" height="1" fill="#aaa"/><rect x="9" y="4" width="1" height="1" fill="#b5b5b5"/><rect x="1" y="20" width="1" height="1" fill="#b5b5b5"/><rect x="15" y="16" width="1" height="1" fill="#777"/><rect x="13" y="18" width="1" height="1" fill="#aaa"/><rect x="6" y="14" width="1" height="1" fill="#999"/><rect x="17" y="0" width="1" height="1" fill="#aaa"/><rect x="6" y="18" width="1" height="1" fill="#6c6c6c"/><rect x="14" y="11" width="1" height="1" fill="#999"/><rect x="23" y="1" width="1" height="1" fill="#b5b5b5"/><rect x="19" y="4" width="1" height="1" fill="#777"/><rect x="11" y="8" width="1" height="1" fill="#777"/><rect x="6" y="7" width="1" height="1" fill="#999"/><rect x="13" y="0" width="1" height="1" fill="#999"/><rect x="9" y="14" width="1" height="1" fill="#aaa"/><rect x="8" y="3" width="1" height="1" fill="#b5b5b5"/><rect x="8" y="2" width="1" height="1" fill="#777"/><rect x="8" y="6" width="1" height="1" fill="#999"/><rect x="23" y="2" width="1" height="1" fill="#b5b5b5"/><rect x="6" y="3" width="1" height="1" fill="#aaa"/><rect x="11" y="9" width="1" height="1" fill="#aaa"/><rect x="14" y="18" width="1" height="1" fill="#b5b5b5"/><rect x="2" y="12" width="1" height="1" fill="#aaa"/><rect x="7" y="17" width="1" height="1" fill="#aaa"/><rect x="5" y="15" width="1" height="1" fill="#999"/><rect x="18" y="8" width="1" height="1" fill="#777"/><rect x="17" y="20" width="1" height="1" fill="#999"/><rect x="15" y="0" width="1" height="1" fill="#777"/><rect x="3" y="2" width="1" height="1" fill="#b5b5b5"/><rect x="14" y="3" width="1" height="1" fill="#6c6c6c"/><rect x="7" y="21" width="1" height="1" fill="#999"/><rect x="15" y="6" width="1" height="1" fill="#777"/><rect x="13" y="10" width="1" height="1" fill="#6c6c6c"/><rect x="23" y="8" width="1" height="1" fill="#b5b5b5"/><rect x="1" y="19" width="1" height="1" fill="#999"/><rect x="10" y="20" width="1" height="1" fill="#777"/><rect x="1" y="11" width="1" height="1" fill="#6c6c6c"/><rect x="18" y="23" width="1" height="1" fill="#6c6c6c"/><rect x="9" y="8" width="1" height="1" fill="#6c6c6c"/><rect x="18" y="10" width="1" height="1" fill="#6c6c6c"/><rect x="5" y="4" width="1" height="1" fill="#b5b5b5"/><rect x="12" y="6" width="1" height="1" fill="#aaa"/><rect x="1" y="6" width="1" height="1" fill="#6c6c6c"/><rect x="15" y="21" width="1" height="1" fill="#999"/><rect x="21" y="21" width="1" height="1" fill="#6c6c6c"/><rect x="19" y="17" width="1" height="1" fill="#777"/><rect x="19" y="17" width="1" height="1" fill="#aaa"/><rect x="8" y="0" width="1" height="1" fill="#6c6c6c"/><rect x="6" y="14" width="1" height="1" fill="#777"/><rect x="1" y="19" width="1" height="1" fill="#6c6c6c"/><rect x="1" y="5" width="1" height="1" fill="#6c6c6c"/><rect x="18" y="20" width="1" height="1" fill="#999"/><rect x="21" y="9" width="1" height="1" fill="#777"/><rect x="8" y="18" width="1" height="1" fill="#b5b5b5"/><rect x="16" y="10" width="1" height="1" fill="#777"/><rect x="4" y="22" width="1" height="1" fill="#999"/><rect x="13" y="14" width="1" height="1" fill="#6c6c6c"/><rect x="10" y="9" width="1" height="1" fill="#6c6c6c"/><rect x="19" y="7" width="1" height="1" fill="#aaa"/><rect x="6" y="9" width="1" height="1" fill="#aaa"/><rect x="8" y="22" width="1" height="1" fill="#6c6c6c"/><rect x="23" y="5" width="1" height="1" fill="#aaa"/><rect x="18" y="18" width="1" height="1" fill="#aaa"/><rect x="23" y="0" width="1" height="1" fill="#777"/><rect x="18" y="14" width="1" height="1" fill="#b5b5b5"/><rect x="2" y="21" width="1" height="1" fill="#aaa"/><rect x="19" y="5" width="1" height="1" fill="#6c6c6c"/><rect x="8" y="0" width="1" height="1" fill="#777"/><rect x="2" y="12" width="1" height="1" fill="#aaa"/><rect x="6" y="23" width="1" height="1" fill="#b5b5b5"/><rect x="13" y="2" width="1" height="1" fill="#6c6c6c"/><rect x="17" y="10" width="1" height="1" fill="#777"/><rect x="16" y="0" width="1" height="1" fill="#999"/><rect x="9" y="22" width="1" height="1" fill="#b5b5b5"/><rect x="15" y="20" width="1" height="1" fill="#6c6c6c"/><rect x="20" y="2" width="1" height="1" fill="#aaa"/><rect x="1" y="4" width="1" height="1" fill="#b5b5b5"/><rect x="14" y="23" width="1" height="1" fill="#6c6c6c"/><rect x="17" y="23" width="1" height="1" fill="#999"/><rect x="7" y="18" width="1" height="1" fill="#777"/><rect x="4" y="16" width="1" height="1" fill="#aaa"/><rect x="14" y="7" width="1" height="1" fill="#6c6c6c"/><rect x="20" y="12" width="1" height="1" fill="#999"/><rect x="11" y="23" width="1" height="1" fill="#999"/><rect x="12" y="12" width="1" height="1" fill="#b5b5b5"/><rect x="2" y="19" width="1" height="1" fill="#b5b5b5"/><rect x="2" y="1" width="1" height="1" fill="#b5b5b5"/><rect x="7" y="2" width="1" height="1" fill="#777"/><rect x="1" y="11" width="1" height="1" fill="#999"/><rect x="8" y="11" width="1" height="1" fill="#999"/><rect x="23" y="23" width="1" height="1" fill="#777"/><rect x="3" y="17" width="1" height="1" fill="#999"/><rect x="1" y="14" width="1" height="1" fill="#b5b5b5"/><rect x="18" y="23" width="1" height="1" fill="#aaa"/><rect x="20" y="21" width="1" height="1" fill="#999"/><rect x="18" y="15" width="1" height="1" fill="#b5b5b5"/><rect x="11" y="5" width="1" height="1" fill="#777"/><rect x="12" y="20" width="1" height="1" fill="#777"/><rect x="3" y="4" width="1" height="1" fill="#999"/><rect x="7" y="13" width="1" height="1" fill="#b5b5b5"/><rect x="16" y="9" width="1" height="1" fill="#b5b5b5"/><rect x="22" y="2" width="1" height="1" fill="#b5b5b5"/><rect x="11" y="5" width="1" height="1" fill="#777"/><rect x="12" y="15" width="1" height="1" fill="#777"/><rect x="15" y="16" width="1" height="1" fill="#aaa"/><rect x="3" y="0" width="1" height="1" fill="#6c6c6c"/></svg>
<div class="t" style="left:876px;top:446.5px;font-size:8px;transform:scaleX(.87);font-weight:bold;transform:scaleX(.85);color:#fff">nightelf_maiev_main_normal.dds</div>
<div class="a" style="left:806px;top:466.1px;width:194px;height:27px;background:#1b52a2;"></div>
<svg class="a" style="left:849px;top:467.1px;border:1px solid #fff" width="25" height="25" viewBox="0 0 24 24" preserveAspectRatio="none"><rect width="24" height="24" fill="#e062ee"/><path d="M2 3l5-1 3 4-2 4 3 3-1 4-4 1-3-4 2-3-3-3z" fill="#f0871f"/><path d="M9 9l3 2 1 5-3 1-2-4z" fill="#e6661e"/><circle cx="16" cy="6" r="2.500" fill="#ee9ad0"/><circle cx="19" cy="13" r="2" fill="#f0a64a"/><path d="M13 4l2 1-1 2z" fill="#e02020"/><circle cx="17" cy="19" r="2.500" fill="#c66cf5"/><circle cx="6" cy="20" r="2" fill="#f2a0e6"/><path d="M14 10h6v1.500h-6z" fill="#d890f0"/></svg>
<div class="t" style="left:876px;top:473.6px;font-size:8px;transform:scaleX(.87);color:#e8e8e8">Копия Копия nightelf_maiev_main_orm.dds</div>
<svg class="a" style="left:807.500px;top:475.6px" width="12" height="8" viewBox="0 0 12 8"><path d="M.3 4C2 .8 4 0 6 0s4 .8 5.700 4C10 7.200 8 8 6 8S2 7.200.3 4z" fill="#fff"/><circle cx="6" cy="4" r="2.600" fill="#1b52a2"/><circle cx="6" cy="4" r="1.500" fill="#fff"/></svg>
<svg class="a" style="left:849px;top:494.2px;border:1px solid #0e0e0e" width="25" height="25" viewBox="0 0 24 24" preserveAspectRatio="none"><rect width="24" height="24" fill="#e062ee"/><path d="M2 3l5-1 3 4-2 4 3 3-1 4-4 1-3-4 2-3-3-3z" fill="#f0871f"/><path d="M9 9l3 2 1 5-3 1-2-4z" fill="#e6661e"/><circle cx="16" cy="6" r="2.500" fill="#ee9ad0"/><circle cx="19" cy="13" r="2" fill="#f0a64a"/><path d="M13 4l2 1-1 2z" fill="#e02020"/><circle cx="17" cy="19" r="2.500" fill="#c66cf5"/><circle cx="6" cy="20" r="2" fill="#f2a0e6"/><path d="M14 10h6v1.500h-6z" fill="#d890f0"/></svg>
<div class="t" style="left:876px;top:500.7px;font-size:8px;transform:scaleX(.87);color:#e8e8e8">Копия nightelf_maiev_main_orm.dds</div>
<svg class="a" style="left:849px;top:521.3px;border:1px solid #0e0e0e" width="25" height="25" viewBox="0 0 24 24" preserveAspectRatio="none"><rect width="24" height="24" fill="#e062ee"/><path d="M2 3l5-1 3 4-2 4 3 3-1 4-4 1-3-4 2-3-3-3z" fill="#f0871f"/><path d="M9 9l3 2 1 5-3 1-2-4z" fill="#e6661e"/><circle cx="16" cy="6" r="2.500" fill="#ee9ad0"/><circle cx="19" cy="13" r="2" fill="#f0a64a"/><path d="M13 4l2 1-1 2z" fill="#e02020"/><circle cx="17" cy="19" r="2.500" fill="#c66cf5"/><circle cx="6" cy="20" r="2" fill="#f2a0e6"/><path d="M14 10h6v1.500h-6z" fill="#d890f0"/></svg>
<div class="t" style="left:876px;top:527.8px;font-size:8px;transform:scaleX(.87);color:#e8e8e8">nightelf_maiev_main_orm.dds</div>
<svg class="a" style="left:849px;top:548.4px;border:1px solid #0e0e0e" width="25" height="25" viewBox="0 0 24 24" preserveAspectRatio="none"><rect width="24" height="24" fill="#8b7a63"/><rect x="1" y="1" width="9" height="7" fill="#c9a886"/><rect x="12" y="1" width="11" height="8" fill="#6a5a78"/><rect x="1" y="9" width="22" height="4" fill="#4a4352"/><rect x="3" y="13" width="7" height="9" fill="#cbb894"/><rect x="12" y="13" width="5" height="9" fill="#5a4a66"/><rect x="18" y="12" width="5" height="10" fill="#d6c29a"/><rect x="9" y="15" width="4" height="5" fill="#e9e0cf"/></svg>
<div class="t" style="left:876px;top:554.9px;font-size:8px;transform:scaleX(.87);color:#e8e8e8">nightelf_maiev_main_diffuse.dds</div>
<svg class="a" style="left:807.500px;top:556.9px" width="12" height="8" viewBox="0 0 12 8"><path d="M.3 4C2 .8 4 0 6 0s4 .8 5.700 4C10 7.200 8 8 6 8S2 7.200.3 4z" fill="#fff"/><circle cx="6" cy="4" r="2.600" fill="#2c2c2c"/><circle cx="6" cy="4" r="1.500" fill="#fff"/></svg>
<div class="a" style="left:246.300px;top:382.500px;width:363px;height:193.300px;background:#353535;box-shadow:inset 1px 0 0 #3f3f3f,inset -1px 0 0 #3f3f3f,inset 0 -1px 0 #3f3f3f"></div>
<div class="a" style="left:246.3px;top:382.5px;width:363px;height:22.6px;background:#ffffff;"></div>
<svg class="a" style="left:252px;top:387.500px" width="12" height="12" viewBox="0 0 12 12"><rect width="12" height="12" fill="#e56aee"/><path d="M1 2l4-1 2 3-2 3-4-1z" fill="#f08a2a"/><path d="M5 6l4 3-1 2-4-1z" fill="#f4e9f4"/><circle cx="9" cy="3" r="1.800" fill="#d94ad0"/><circle cx="3" cy="9.500" r="1.500" fill="#c65df0"/></svg>
<div class="t" style="left:267.500px;top:388px;font-size:9.500px;color:#8b8b8b;transform:scaleX(.9);-webkit-text-stroke:0">Извлечь составляющую</div>
<svg class="a" style="left:595px;top:390px" width="8" height="8" viewBox="0 0 8 8"><path d="M.5 .5l7 7M7.500 .5l-7 7" stroke="#8a8a8a" stroke-width=".9"/></svg>
<svg class="a" style="left:250px;top:407.500px" width="16" height="16" viewBox="0 0 16 16"><path d="M13.600 4.200A7 7 0 1 0 15 8.400H8v2.600h3.600A4.300 4.300 0 1 1 11.300 5.300z" fill="#9a9a9a"/></svg>
<div class="t" style="left:270.500px;top:408px;font-size:9.500px;font-weight:bold;color:#b4b4b4;transform:none;letter-spacing:.42px">Извлечь составляющую</div>
<div class="t" style="left:270.500px;top:418.500px;font-size:7px;color:#9a9a9a;transform:scaleX(1.008);-webkit-text-stroke:0">Копия Копия nightelf_maiev_main_orm.dds-57 ([nightelf_maiev_main_diffuse] (импортировано))</div>
<svg class="a" style="left:582px;top:406.600px" width="23.600" height="23.600" viewBox="0 0 24 24"><rect width="24" height="24" fill="#e062ee"/><path d="M2 3l5-1 3 4-2 4 3 3-1 4-4 1-3-4 2-3-3-3z" fill="#f0871f"/><path d="M9 9l3 2 1 5-3 1-2-4z" fill="#e6661e"/><circle cx="16" cy="6" r="2.500" fill="#ee9ad0"/><circle cx="19" cy="13" r="2" fill="#f0a64a"/><path d="M13 4l2 1-1 2z" fill="#e02020"/><circle cx="17" cy="19" r="2.500" fill="#8f7cf5"/><circle cx="6" cy="20" r="2" fill="#f2a0e6"/><path d="M14 10h6v1.500h-6z" fill="#f0e36a"/></svg>
<div class="a" style="left:246.5px;top:432.3px;width:362.6px;height:1px;background:#2a2a2a;"></div>
<div class="t" style="left:252px;top:441px;font-size:9px;transform:scaleX(.95);color:#adadad;-webkit-text-stroke:0;transform:scaleX(.9)">Профили:</div>
<div class="a" style="left:295px;top:438px;width:273.500px;height:18.500px;background:#343434;border:1px solid #272727;border-radius:3px"></div>
<svg class="a" style="left:557.500px;top:443.500px" width="9" height="6" viewBox="0 0 9 6"><path d="M0 .5h9L4.500 5.500z" fill="#a8a8a8"/></svg>
<svg class="a" style="left:576px;top:442px" width="11" height="11" viewBox="0 0 11 11"><path d="M5.500 .5v10M.5 5.500h10" stroke="#b0b0b0" stroke-width="2"/></svg>
<svg class="a" style="left:592px;top:442px" width="11" height="11" viewBox="0 0 11 11"><rect x=".6" y=".6" width="9.800" height="9.800" fill="none" stroke="#a8a8a8" stroke-width="1.200"/><path d="M8 2.500v6L3 5.500z" fill="#a8a8a8"/></svg>
<div class="a" style="left:251.500px;top:460.500px;width:353px;height:18px;background:#343434;border:1px solid #272727;border-radius:3px"></div>
<div class="t" style="left:255px;top:463.6px;font-size:9px;transform:scaleX(.95);color:#adadad;-webkit-text-stroke:0;">Компонент</div>
<div class="t" style="left:532.5px;top:463.6px;font-size:9px;transform:scaleX(.95);color:#adadad;-webkit-text-stroke:0;transform:scaleX(.925)">RGB, красный</div>
<svg class="a" style="left:592.500px;top:466.500px" width="9" height="6" viewBox="0 0 9 6"><path d="M0 .5h9L4.500 5.500z" fill="#a8a8a8"/></svg>
<div class="a" style="left:254px;top:481.8px;width:11px;height:11px;background:#323232;border:1px solid #232323;border-radius:2px"></div>
<div class="t" style="left:268.4px;top:481.6px;font-size:9px;transform:scaleX(.95);color:#adadad;-webkit-text-stroke:0;">Инвертировать компонент</div>
<div class="a" style="left:254px;top:497.4px;width:11px;height:11px;background:#323232;border:1px solid #232323;border-radius:2px"></div>
<div class="t" style="left:268.4px;top:497.2px;font-size:9px;transform:scaleX(.95);color:#adadad;-webkit-text-stroke:0;">Линейный вывод</div>
<svg class="a" style="left:254.500px;top:516px" width="5" height="8" viewBox="0 0 5 8"><path d="M0 0l4.500 4L0 8z" fill="#a8a8a8"/></svg>
<div class="t" style="left:262.4px;top:514px;font-size:9px;transform:scaleX(.95);color:#adadad;-webkit-text-stroke:0;">Параметры смешения</div>
<div class="a" style="left:254px;top:531.6px;width:11px;height:11px;background:#2a6fda;border-radius:2px"></div>
<svg class="a" style="left:255.5px;top:533.6px" width="8" height="7" viewBox="0 0 8 7"><path d="M.8 3.500l2.200 2.200L7.200 1" fill="none" stroke="#fff" stroke-width="1.700"/></svg>
<div class="t" style="left:268.4px;top:531.4px;font-size:9px;transform:scaleX(.95);color:#adadad;-webkit-text-stroke:0;">Предпросмотр</div>
<div class="a" style="left:507px;top:531.6px;width:11px;height:11px;background:#323232;border:1px solid #232323;border-radius:2px"></div>
<div class="t" style="left:521.6px;top:531.4px;font-size:9px;transform:scaleX(.95);color:#adadad;-webkit-text-stroke:0;transform:scaleX(.93)">Сравнение до/после</div>
<div class="a" style="left:251.6px;top:553.500px;width:60px;height:18.300px;background:#343434;border:1px solid #272727;border-radius:3px"></div>
<div class="t" style="left:272.6px;top:556.6px;font-size:9px;transform:scaleX(.95);color:#adadad;-webkit-text-stroke:0;">Help</div>
<div class="a" style="left:414.5px;top:553.500px;width:60px;height:18.300px;background:#343434;border:1px solid #272727;border-radius:3px"></div>
<div class="t" style="left:427.5px;top:556.6px;font-size:9px;transform:scaleX(.95);color:#adadad;-webkit-text-stroke:0;">Откатить</div>
<div class="a" style="left:479.6px;top:553.500px;width:59.5px;height:18.300px;background:#343434;border:1px solid #272727;border-radius:3px"></div>
<div class="t" style="left:503.6px;top:556.6px;font-size:9px;transform:scaleX(.95);color:#adadad;-webkit-text-stroke:0;">OK</div>
<div class="a" style="left:544.4px;top:553.500px;width:59.6px;height:18.300px;background:#343434;border:1px solid #272727;border-radius:3px"></div>
<div class="t" style="left:559.8px;top:556.6px;font-size:9px;transform:scaleX(.95);color:#adadad;-webkit-text-stroke:0;">Отмена</div>
</body></html>
